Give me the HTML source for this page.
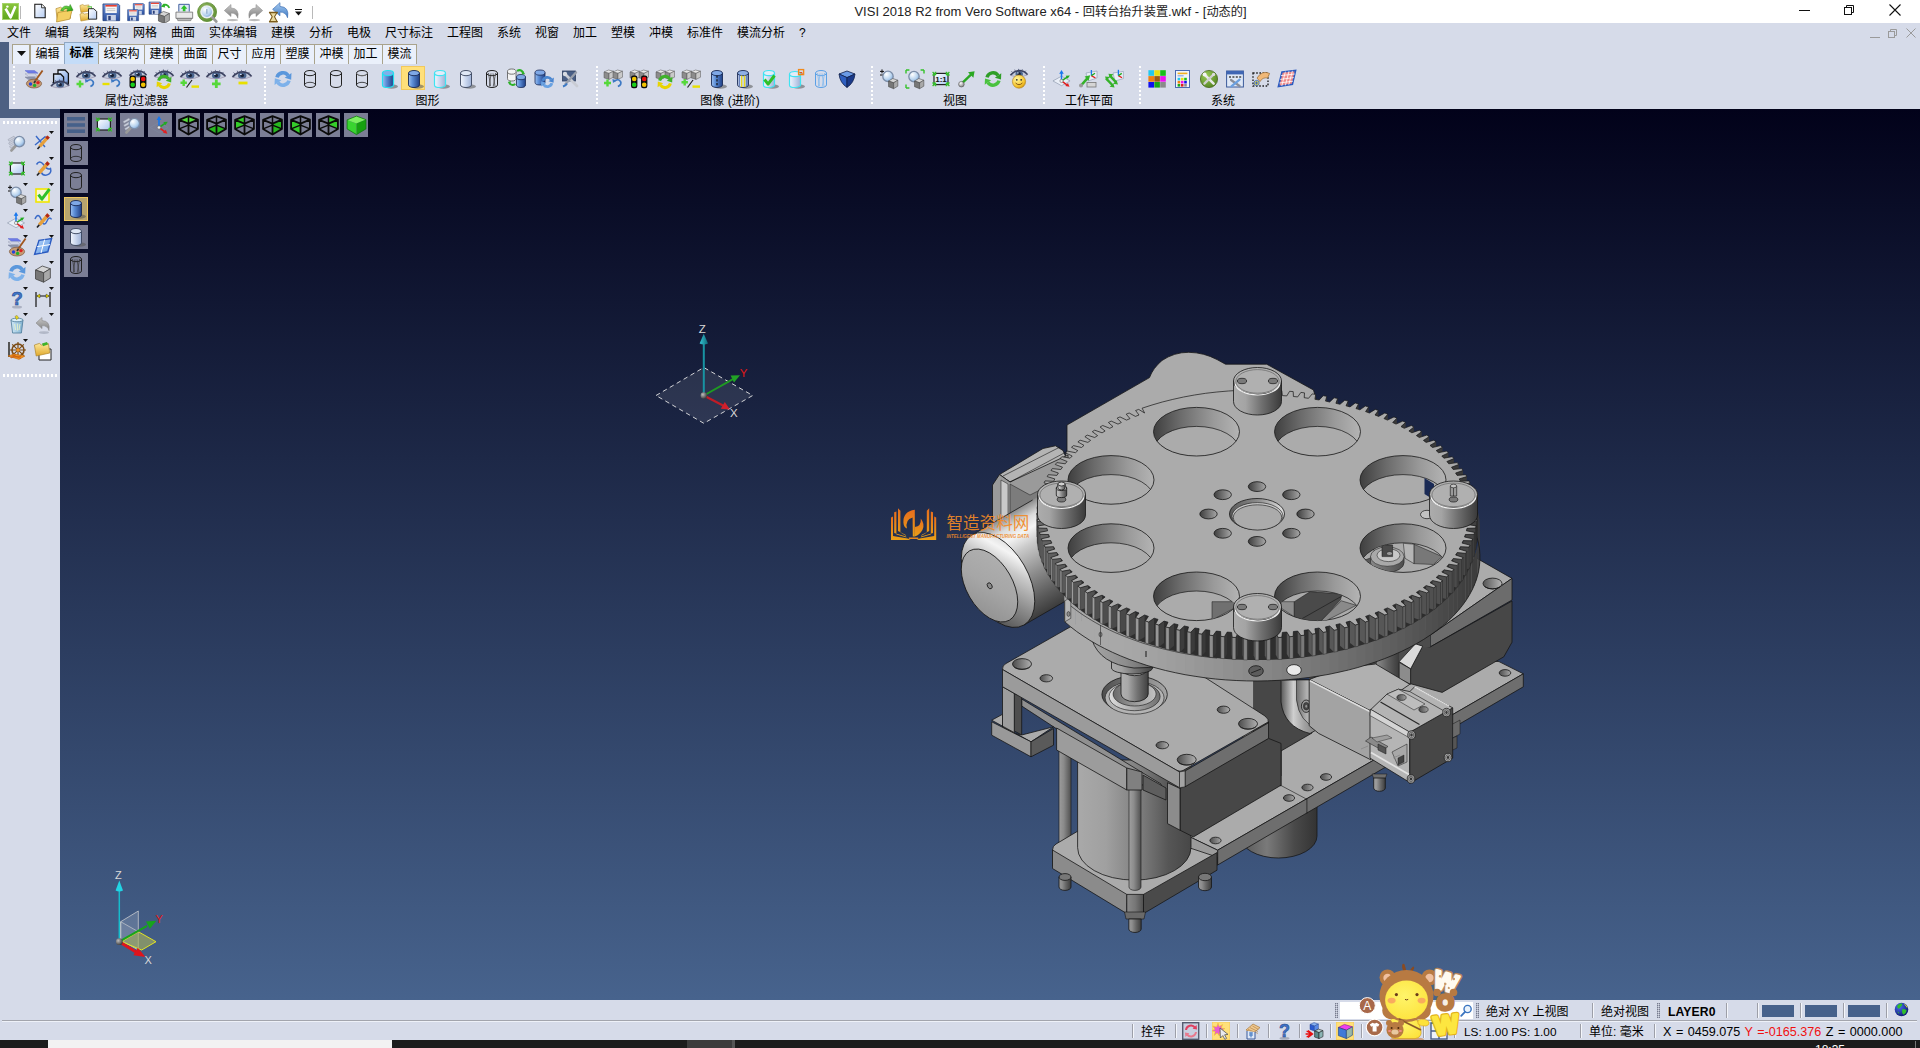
<!DOCTYPE html>
<html lang="zh-CN">
<head>
<meta charset="utf-8">
<title>VISI 2018 R2 from Vero Software x64 - 回转台抬升装置.wkf - [动态的]</title>
<style>
*{box-sizing:border-box;margin:0;padding:0}
html,body{width:1920px;height:1048px;overflow:hidden;background:#d6dbe9}
body{position:relative;font-family:"Liberation Sans","Noto Sans CJK SC",sans-serif;font-size:12px;color:#000;line-height:1}
.abs{position:absolute}
#titlebar{position:absolute;left:0;top:0;width:1920px;height:23px;background:#fff}
#title{position:absolute;left:0;top:0;width:2101px;text-align:center;font-size:13px;line-height:23px;color:#222;white-space:nowrap}
#title .cj{font-size:12.2px}
#menubar{position:absolute;left:0;top:23px;width:1920px;height:20px;background:#d6dbe9;white-space:nowrap}
#menubar span{position:absolute;top:3px;font-size:12px;line-height:14px}
#lstrip{position:absolute;left:0;top:42px;width:9px;height:76px;background:#4d6082}
#lstrip2{position:absolute;left:0;top:109px;width:60px;height:9px;background:#4d6082}
#tabs{position:absolute;left:12px;top:45px;height:19px;white-space:nowrap}
.tab{position:absolute;top:44px;height:20px;background:#eaf0fb;border:1px solid #a9a38c;border-bottom:none;font-size:12px;line-height:19px;text-align:center}
.tab.sel{top:42px;height:22px;background:#c4dcf8;border-color:#8fa7c4;line-height:21px;font-weight:700}
#toolbar{position:absolute;left:9px;top:64px;width:1911px;height:45px;background:#d6dbe9}
.grip{position:absolute;top:66px;width:2px;height:40px;background-image:repeating-linear-gradient(to bottom,#fff 0,#fff 2px,transparent 2px,transparent 4px)}
.glabel{position:absolute;top:94px;font-size:12px;line-height:14px;white-space:nowrap;transform:translateX(-50%)}
.ico{position:absolute;overflow:visible}
#sidebar{position:absolute;left:0;top:118px;width:60px;height:882px;background:#d6dbe9}
#viewport{position:absolute;left:60px;top:109px;width:1860px;height:891px;background:linear-gradient(to bottom,#02021a 0%,#47638d 100%);overflow:hidden}
.vbtn{position:absolute;width:24px;height:24px;background:#7b7e95}
.vbtn.sel{background:#b7a46e;border:1px solid #f0c860}
#status{position:absolute;left:0;top:1000px;width:1920px;height:40px;background:#d6dbe9}
#taskbar{position:absolute;left:0;top:1040px;width:1920px;height:8px;background:#1c1c1c}
.st{font-size:12px;line-height:14px;white-space:nowrap}
svg{display:block}
</style>
</head>
<body>
<svg width="0" height="0" style="position:absolute"><defs><linearGradient id="l1" x1="0" y1="0" x2="1" y2="0"><stop offset="0" stop-color="#9cc0f0"/><stop offset="0.35" stop-color="#5d8fd8"/><stop offset="1" stop-color="#1f3f86"/></linearGradient><linearGradient id="l2" x1="0" y1="0" x2="1" y2="0"><stop offset="0" stop-color="#f2f6fd"/><stop offset="0.5" stop-color="#c9d6ee"/><stop offset="1" stop-color="#9fb2d6"/></linearGradient><linearGradient id="l3" x1="0" y1="0" x2="1" y2="1"><stop offset="0" stop-color="#8df05a"/><stop offset="1" stop-color="#1f9a12"/></linearGradient><linearGradient id="l4" x1="0" y1="0" x2="0" y2="1"><stop offset="0" stop-color="#5fe23a"/><stop offset="1" stop-color="#0f7a0a"/></linearGradient><linearGradient id="l5" x1="0" y1="0" x2="0" y2="1"><stop offset="0" stop-color="#a9cdf2"/><stop offset="1" stop-color="#3d79c4"/></linearGradient><linearGradient id="l6" x1="0" y1="0" x2="0" y2="1"><stop offset="0" stop-color="#c9c9c9"/><stop offset="1" stop-color="#7d7d7d"/></linearGradient><radialGradient id="r7" cx="0.35" cy="0.3" r="0.8"><stop offset="0" stop-color="#ffffff"/><stop offset="0.6" stop-color="#b9d4ef"/><stop offset="1" stop-color="#6f9bd0"/></radialGradient><linearGradient id="l8" x1="0" y1="0" x2="0" y2="1"><stop offset="0" stop-color="#6f94d6"/><stop offset="1" stop-color="#2b4f9e"/></linearGradient><linearGradient id="l9" x1="0" y1="0" x2="0" y2="1"><stop offset="0" stop-color="#fde79a"/><stop offset="1" stop-color="#e0a92c"/></linearGradient><linearGradient id="l10" x1="0" y1="0" x2="1" y2="1"><stop offset="0" stop-color="#ffffff"/><stop offset="1" stop-color="#b6cdf3"/></linearGradient><linearGradient id="l11" x1="0" y1="0" x2="1" y2="1"><stop offset="0" stop-color="#e8f0fc"/><stop offset="1" stop-color="#6f9ae0"/></linearGradient><linearGradient id="l12" x1="0" y1="0" x2="1" y2="1"><stop offset="0" stop-color="#e8e8e8"/><stop offset="1" stop-color="#8f8f8f"/></linearGradient><radialGradient id="r13" cx="0.35" cy="0.3" r="0.8"><stop offset="0" stop-color="#fff6a0"/><stop offset="0.7" stop-color="#f6c52c"/><stop offset="1" stop-color="#c98a10"/></radialGradient><linearGradient id="l14" x1="0" y1="0" x2="1" y2="1"><stop offset="0" stop-color="#ffffff"/><stop offset="1" stop-color="#a9c6ef"/></linearGradient><radialGradient id="r15" cx="0.35" cy="0.3" r="0.8"><stop offset="0" stop-color="#fff"/><stop offset="1" stop-color="#777"/></radialGradient><radialGradient id="r16" cx="0.35" cy="0.3" r="0.8"><stop offset="0" stop-color="#9acb58"/><stop offset="1" stop-color="#4f7f1e"/></radialGradient><linearGradient id="l17" x1="0" y1="0" x2="1" y2="1"><stop offset="0" stop-color="#b8d6fa"/><stop offset="1" stop-color="#5a96e4"/></linearGradient><linearGradient id="l18" x1="0" y1="0" x2="1" y2="0"><stop offset="0" stop-color="#cfe8f6"/><stop offset="1" stop-color="#7fb0d0"/></linearGradient><radialGradient id="r19" cx="0.35" cy="0.3" r="0.8"><stop offset="0" stop-color="#8fb45e"/><stop offset="1" stop-color="#5f8f34"/></radialGradient><linearGradient id="l20" x1="0" y1="0" x2="0" y2="1"><stop offset="0" stop-color="#8cc63f"/><stop offset="1" stop-color="#5ea61a"/></linearGradient></defs></svg>
<div id="titlebar">
<svg class="abs" style="left:2px;top:3px" width="17" height="17" viewBox="0 0 17 17"><rect width="17" height="17" fill="url(#l20)"/><rect x=".5" y=".5" width="16" height="16" fill="none" stroke="#a6d46a" stroke-width="1"/><path d="M3.6 5.6 L8.6 14.4 L13.4 3.2" fill="none" stroke="#fff" stroke-width="2.6" stroke-linejoin="round"/><circle cx="5.4" cy="3.6" r="1.2" fill="#fff"/></svg>
<div class="abs" style="left:20px;top:6px;width:1px;height:13px;background:#b9b9b9"></div>
<svg class="ico" style="left:32px;top:3px" width="16" height="16" viewBox="0 0 20 20"><path d="M3.5 1.5 h8.5 l4.5 4.5 v12.5 h-13z" fill="url(#l10)" stroke="#111" stroke-width="1.3"/><path d="M12 1.5 v4.5 h4.5" fill="#fff" stroke="#111" stroke-width="1"/></svg>
<svg class="ico" style="left:55px;top:3px" width="19" height="19" viewBox="0 0 20 20"><path d="M1 6 l5 -1.6 l2 1.6 l7 -1 l1.4 11 l-14 3z" fill="url(#l9)" stroke="#b0862a" stroke-width=".7"/><path d="M3 10 l15 -2.6 l-2.4 9.6 l-14 3z" fill="#f4cf62" stroke="#b0862a" stroke-width=".7"/><path d="M6 8 q3 -7 9 -4 l1 -2.4 l3 6 l-6.4 1 l1 -2.4 q-3.4 -1.6 -5 2z" fill="url(#l3)" stroke="#1a7a14" stroke-width=".5"/></svg>
<svg class="ico" style="left:79px;top:3px" width="19" height="19" viewBox="0 0 20 20"><path d="M1 2.6 l3 -1 l1.4 1 l5 -.6 l.6 6.4 l-9 1.6z" fill="url(#l9)" stroke="#b0862a" stroke-width=".6"/><path d="M1 11.6 l3 -1 l1.4 1 l5 -.6 l.6 6.4 l-9 1.6z" fill="url(#l9)" stroke="#b0862a" stroke-width=".6"/><path d="M9 4 h4 v12 h-4" fill="none" stroke="#5ec84a" stroke-width="1.2"/><path d="M10 6 h5.6 l3 3 v8 h-8.6z" fill="url(#l10)" stroke="#222" stroke-width="1"/></svg>
<svg class="ico" style="left:102px;top:3px" width="19" height="19" viewBox="0 0 20 20"><g transform="translate(1 1) scale(1)"><path d="M0 0 h16 l1.6 1.6 v16 h-17.6z" fill="url(#l8)" stroke="#1f3a7a" stroke-width=".8"/><rect x="2.6" y="1" width="12" height="8.6" fill="#f6f6f6"/><rect x="2.6" y="1" width="12" height="1.8" fill="#e84030"/><path d="M4 5 h9 M4 7 h9" stroke="#b0b0b0" stroke-width=".7"/><rect x="4" y="11.6" width="9.6" height="6" fill="#c9d2e6"/><rect x="5.6" y="12.6" width="2.6" height="4.4" fill="#2b3f7a"/></g></svg>
<svg class="ico" style="left:127px;top:3px" width="19" height="19" viewBox="0 0 20 20"><g transform="translate(6.6 0.6) scale(0.66)"><path d="M0 0 h16 l1.6 1.6 v16 h-17.6z" fill="url(#l8)" stroke="#1f3a7a" stroke-width=".8"/><rect x="2.6" y="1" width="12" height="8.6" fill="#f6f6f6"/><rect x="2.6" y="1" width="12" height="1.8" fill="#e84030"/><path d="M4 5 h9 M4 7 h9" stroke="#b0b0b0" stroke-width=".7"/><rect x="4" y="11.6" width="9.6" height="6" fill="#c9d2e6"/><rect x="5.6" y="12.6" width="2.6" height="4.4" fill="#2b3f7a"/></g><g transform="translate(0.6 7) scale(0.66)"><path d="M0 0 h16 l1.6 1.6 v16 h-17.6z" fill="url(#l8)" stroke="#1f3a7a" stroke-width=".8"/><rect x="2.6" y="1" width="12" height="8.6" fill="#f6f6f6"/><rect x="2.6" y="1" width="12" height="1.8" fill="#e84030"/><path d="M4 5 h9 M4 7 h9" stroke="#b0b0b0" stroke-width=".7"/><rect x="4" y="11.6" width="9.6" height="6" fill="#c9d2e6"/><rect x="5.6" y="12.6" width="2.6" height="4.4" fill="#2b3f7a"/></g></svg>
<svg class="ico" style="left:149px;top:2px" width="21" height="21" viewBox="0 0 20 20"><g transform="translate(0 0) scale(0.66)"><path d="M0 0 h16 l1.6 1.6 v16 h-17.6z" fill="url(#l8)" stroke="#1f3a7a" stroke-width=".8"/><rect x="2.6" y="1" width="12" height="8.6" fill="#f6f6f6"/><rect x="2.6" y="1" width="12" height="1.8" fill="#e84030"/><path d="M4 5 h9 M4 7 h9" stroke="#b0b0b0" stroke-width=".7"/><rect x="4" y="11.6" width="9.6" height="6" fill="#c9d2e6"/><rect x="5.6" y="12.6" width="2.6" height="4.4" fill="#2b3f7a"/></g><path d="M13 3.6 q4 -2.6 6.4 2" fill="none" stroke="#2fb22a" stroke-width="1.8"/><path d="M11.4 4.6 l3 -3.4 l1 4z" fill="#2fb22a"/><g transform="translate(9 9) scale(0.95)"><path d="M0 3 l5 -3 l6 2 l-5 3z" fill="#d5d5d5" stroke="#444" stroke-width=".6"/><path d="M0 3 l6 2 v7 l-6 -2.4z" fill="#777" stroke="#444" stroke-width=".6"/><path d="M6 5 l5 -3 v7 l-5 3z" fill="#a9a9a9" stroke="#444" stroke-width=".6"/></g></svg>
<svg class="ico" style="left:175px;top:3px" width="19" height="19" viewBox="0 0 20 20"><path d="M4 9 v-7.6 h11 v7.6" fill="#dfe8f7" stroke="#3a5a9a" stroke-width="1"/><path d="M9.6 2 l3.4 4 h-2 v2.6 h-2.8 v-2.6 h-2z" fill="#2fc028"/><path d="M1 9.6 h17.6 v6.6 h-17.6z" fill="#e9e9e9" stroke="#666" stroke-width=".8"/><path d="M2 16.2 h15.6 l-1 2.4 h-13.6z" fill="#b9b9b9" stroke="#666" stroke-width=".6"/></svg>
<svg class="ico" style="left:197px;top:2px" width="21" height="21" viewBox="0 0 20 20"><circle cx="9.6" cy="9.6" r="9" fill="url(#r19)" stroke="#5a8a2e" stroke-width=".8"/><path d="M13 13 l5.4 5.6" stroke="#9a9a9a" stroke-width="2.6" stroke-linecap="round"/><circle cx="9.4" cy="9.4" r="5.6" fill="url(#r7)" stroke="#e9eef4" stroke-width="1.5"/><path d="M9.4 6.6 v4.6" stroke="#7f9fc6" stroke-width="1"/></svg>
<svg class="ico" style="left:223px;top:3px" width="19" height="19" viewBox="0 0 20 20"><path d="M1.4 8 L8.4 1.6 V5.2 Q17.6 5.6 15.6 16 Q14 10.6 8.4 10.6 V14.2z" fill="url(#l6)" stroke="#8e8e8e" stroke-width=".6"/><ellipse cx="10" cy="18" rx="6" ry="1.2" fill="#bbb"/></svg>
<svg class="ico" style="left:245px;top:3px" width="19" height="19" viewBox="0 0 20 20"><path d="M18.6 8 L11.6 1.6 V5.2 Q2.4 5.6 4.4 16 Q6 10.6 11.6 10.6 V14.2z" fill="url(#l6)" stroke="#8e8e8e" stroke-width=".6"/><ellipse cx="10" cy="18" rx="6" ry="1.2" fill="#bbb"/></svg>
<svg class="ico" style="left:268px;top:2px" width="21" height="21" viewBox="0 0 20 20"><path d="M4.4 7 L11.4 .6 V4.2 Q20.6 4.6 18.6 15 Q17 9.6 11.4 9.6 V13.2z" fill="url(#l5)" stroke="#3a6ab0" stroke-width=".6"/><path d="M1.6 10 h7 l-2.4 4 l2.4 4.6 h-7 l2.4 -4.6z" fill="#e8d9a0" stroke="#7a5a1a" stroke-width="1"/><path d="M1 10 h8.2 M1 18.8 h8.2" stroke="#7a5a1a" stroke-width="1.4"/></svg>
<svg class="abs" style="left:294px;top:9px" width="9" height="7" viewBox="0 0 9 7"><path d="M1 0.5 h7" stroke="#111" stroke-width="1"/><path d="M1 2.5 h7 l-3.5 4z" fill="#111"/></svg>
<div class="abs" style="left:312px;top:6px;width:1px;height:13px;background:#b9b9b9"></div>
<div id="title"><span class="la">VISI 2018 R2 from Vero Software x64 - </span><span class="cj">回转台抬升装置</span><span class="la">.wkf - [</span><span class="cj">动态的</span><span class="la">]</span></div>
<svg class="abs" style="left:1790px;top:0" width="130" height="23" viewBox="1790 0 130 23"><path d="M1799 10.5 h11" stroke="#111" stroke-width="1"/><rect x="1844.5" y="7.5" width="7" height="7" fill="#fff" stroke="#111" stroke-width="1"/><path d="M1846.5 7.5 v-2 h7 v7 h-2" fill="none" stroke="#111" stroke-width="1"/><path d="M1889.5 4.5 l11 11 M1900.5 4.500 l-11 11" stroke="#111" stroke-width="1.1"/></svg>
</div>
<div id="menubar">
<span style="left:7px">文件</span><span style="left:45px">编辑</span><span style="left:83px">线架构</span><span style="left:133px">网格</span><span style="left:171px">曲面</span><span style="left:209px">实体编辑</span><span style="left:271px">建模</span><span style="left:309px">分析</span><span style="left:347px">电极</span><span style="left:385px">尺寸标注</span><span style="left:447px">工程图</span><span style="left:497px">系统</span><span style="left:535px">视窗</span><span style="left:573px">加工</span><span style="left:611px">塑模</span><span style="left:649px">冲模</span><span style="left:687px">标准件</span><span style="left:737px">模流分析</span><span style="left:799px">?</span>
<svg id="mdi" class="abs" style="left:1860px;top:3px" width="60" height="14" viewBox="1860 26 60 14"><path d="M1870 37.500 h10" stroke="#9a9a9a" stroke-width="1"/><rect x="1888.5" y="31.500" width="6" height="6" fill="none" stroke="#9a9a9a" stroke-width="1"/><path d="M1890.5 31.500 v-2 h6 v6 h-2" fill="none" stroke="#9a9a9a" stroke-width="1"/><path d="M1906.500 28.500 l9 9 M1915.500 28.500 l-9 9" stroke="#9a9a9a" stroke-width="1"/></svg>
</div>
<div id="lstrip"></div><div id="lstrip2"></div>
<div id="toolbar"></div>
<div class="tab" style="left:12px;width:18px"><svg style="margin:6px 0 0 4px" width="9" height="5" viewBox="0 0 9 5"><path d="M0 0 h9 l-4.500 5z" fill="#111"/></svg></div>
<div class="tab" style="left:30px;width:35px">编辑</div>
<div class="tab sel" style="left:64px;width:35px">标准</div>
<div class="tab" style="left:98px;width:47px">线架构</div>
<div class="tab" style="left:144px;width:35px">建模</div>
<div class="tab" style="left:178px;width:35px">曲面</div>
<div class="tab" style="left:212px;width:35px">尺寸</div>
<div class="tab" style="left:246px;width:35px">应用</div>
<div class="tab" style="left:280px;width:35px">塑膜</div>
<div class="tab" style="left:314px;width:35px">冲模</div>
<div class="tab" style="left:348px;width:35px">加工</div>
<div class="tab" style="left:382px;width:35px">模流</div>
<div class="grip" style="left:13px"></div>
<div class="grip" style="left:264px"></div>
<div class="grip" style="left:596px"></div>
<div class="grip" style="left:871px"></div>
<div class="grip" style="left:1043px"></div>
<div class="grip" style="left:1139px"></div>
<svg class="ico" style="left:23.5px;top:69px" width="20" height="20" viewBox="0 0 20 20"><path d="M1 1.600 h9.500 l3.500 2.600 h-9.500z" fill="#6f7de8" stroke="#4a58c8" stroke-width=".4"/><path d="M1 4.800 h9.500 l3.500 2.600 h-9.500z" fill="#d5d9ea" stroke="#8a90a8" stroke-width=".4"/><path d="M1 8 h9.500 l3.500 2.600 h-9.500z" fill="#9098b0" stroke="#6a7088" stroke-width=".4"/><ellipse cx="10" cy="14.6" rx="7.6" ry="4.4" fill="#c79a74" stroke="#7a543a" stroke-width=".7"/><circle cx="6.5" cy="15" r="1.7" fill="#2244dd"/><circle cx="10.6" cy="16.4" r="1.7" fill="#22b02a"/><circle cx="14" cy="13.6" r="1.7" fill="#dd2020"/><path d="M18.6 1.4 L11.5 11.6" stroke="#a0561e" stroke-width="1.8"/><path d="M11.5 11.6 l-1.4 2.4" stroke="#333" stroke-width="1.8"/></svg>
<svg class="ico" style="left:49.5px;top:69px" width="20" height="20" viewBox="0 0 20 20"><path d="M8 1 h7 l3.400 3.400 v10 h-10.400z" fill="url(#l11)" stroke="#111" stroke-width="1.300"/><path d="M3.600 5 h7 l3 3 v8 h-10z" fill="url(#l11)" stroke="#111" stroke-width="1.300"/><g transform="translate(0.5 10) scale(0.95)"><path d="M0.5 7.6 Q5 2.2 11 2.4 Q16.5 2.8 19.5 7 Q15 9.4 10 9.4 Q4.5 9.4 0.5 7.6Z" fill="#c3cbdc"/><ellipse cx="10.2" cy="6" rx="4.2" ry="3.3" fill="#4a668f"/><ellipse cx="10.2" cy="6" rx="1.9" ry="1.7" fill="#1a2238"/><ellipse cx="8.8" cy="4.9" rx="1" ry=".7" fill="#cfdbee"/><path d="M0.5 7.6 Q5 2.2 11 2.4 Q16.5 2.8 19.5 7" fill="none" stroke="#3b4260" stroke-width="1.8"/><path d="M3 4.6 L1.6 3 M6 3 L5.2 1.2 M9.5 2.2 L9.4 .4 M13 2.4 L13.8 .7 M16.2 3.8 L17.6 2.4" stroke="#4a5272" stroke-width=".8"/><path d="M0.5 7.6 Q10 11.4 19.5 7" fill="none" stroke="#9a8fa8" stroke-width=".7"/></g></svg>
<svg class="ico" style="left:75.5px;top:69px" width="20" height="20" viewBox="0 0 20 20"><g transform="translate(0 0.5) scale(1)"><path d="M0.5 7.6 Q5 2.2 11 2.4 Q16.5 2.8 19.5 7 Q15 9.4 10 9.4 Q4.5 9.4 0.5 7.6Z" fill="#c3cbdc"/><ellipse cx="10.2" cy="6" rx="4.2" ry="3.3" fill="#4a668f"/><ellipse cx="10.2" cy="6" rx="1.9" ry="1.7" fill="#1a2238"/><ellipse cx="8.8" cy="4.9" rx="1" ry=".7" fill="#cfdbee"/><path d="M0.5 7.6 Q5 2.2 11 2.4 Q16.5 2.8 19.5 7" fill="none" stroke="#3b4260" stroke-width="1.8"/><path d="M3 4.6 L1.6 3 M6 3 L5.2 1.2 M9.5 2.2 L9.4 .4 M13 2.4 L13.8 .7 M16.2 3.8 L17.6 2.4" stroke="#4a5272" stroke-width=".8"/><path d="M0.5 7.6 Q10 11.4 19.5 7" fill="none" stroke="#9a8fa8" stroke-width=".7"/></g><path d="M0.5 15 h7 M4 11.5 v7" stroke="#55d83a" stroke-width="2.4"/><path d="M10.5 12.5 q4 -3.5 6.5 0 q1.6 3 -2.6 5" fill="none" stroke="#3d79c4" stroke-width="1.7"/><path d="M9.5 14 l-.6 -4 l4 1.2z" fill="#3d79c4"/></svg>
<svg class="ico" style="left:101.5px;top:69px" width="20" height="20" viewBox="0 0 20 20"><g transform="translate(0 0.5) scale(1)"><path d="M0.5 7.6 Q5 2.2 11 2.4 Q16.5 2.8 19.5 7 Q15 9.4 10 9.4 Q4.5 9.4 0.5 7.6Z" fill="#c3cbdc"/><ellipse cx="10.2" cy="6" rx="4.2" ry="3.3" fill="#4a668f"/><ellipse cx="10.2" cy="6" rx="1.9" ry="1.7" fill="#1a2238"/><ellipse cx="8.8" cy="4.9" rx="1" ry=".7" fill="#cfdbee"/><path d="M0.5 7.6 Q5 2.2 11 2.4 Q16.5 2.8 19.5 7" fill="none" stroke="#3b4260" stroke-width="1.8"/><path d="M3 4.6 L1.6 3 M6 3 L5.2 1.2 M9.5 2.2 L9.4 .4 M13 2.4 L13.8 .7 M16.2 3.8 L17.6 2.4" stroke="#4a5272" stroke-width=".8"/><path d="M0.5 7.6 Q10 11.4 19.5 7" fill="none" stroke="#9a8fa8" stroke-width=".7"/></g><path d="M0.5 15 h7" stroke="#e8e000" stroke-width="2.4"/><path d="M10.5 12.5 q4 -3.5 6.5 0 q1.6 3 -2.6 5" fill="none" stroke="#3d79c4" stroke-width="1.7"/><path d="M9.5 14 l-.6 -4 l4 1.2z" fill="#3d79c4"/></svg>
<svg class="ico" style="left:127.5px;top:69px" width="20" height="20" viewBox="0 0 20 20"><g transform="translate(1 0) scale(0.9)"><path d="M0.5 7.6 Q5 2.2 11 2.4 Q16.5 2.8 19.5 7 Q15 9.4 10 9.4 Q4.5 9.4 0.5 7.6Z" fill="#c3cbdc"/><ellipse cx="10.2" cy="6" rx="4.2" ry="3.3" fill="#4a668f"/><ellipse cx="10.2" cy="6" rx="1.9" ry="1.7" fill="#1a2238"/><ellipse cx="8.8" cy="4.9" rx="1" ry=".7" fill="#cfdbee"/><path d="M0.5 7.6 Q5 2.2 11 2.4 Q16.5 2.8 19.5 7" fill="none" stroke="#3b4260" stroke-width="1.8"/><path d="M3 4.6 L1.6 3 M6 3 L5.2 1.2 M9.5 2.2 L9.4 .4 M13 2.4 L13.8 .7 M16.2 3.8 L17.6 2.4" stroke="#4a5272" stroke-width=".8"/><path d="M0.5 7.6 Q10 11.4 19.5 7" fill="none" stroke="#9a8fa8" stroke-width=".7"/></g><rect x="1.5" y="6.6" width="6.4" height="12.6" rx="2.2" fill="#0c0c0c"/><circle cx="4.7" cy="10" r="2.3" fill="#f2c400"/><circle cx="4.7" cy="15.8" r="2.3" fill="#18d018"/><rect x="12" y="6.6" width="6.4" height="12.6" rx="2.2" fill="#0c0c0c"/><circle cx="15.2" cy="10" r="2.3" fill="#ee1010"/><circle cx="15.2" cy="15.8" r="2.3" fill="#f2c400"/></svg>
<svg class="ico" style="left:153.5px;top:69px" width="20" height="20" viewBox="0 0 20 20"><g transform="translate(0 0) scale(1)"><path d="M0.5 7.6 Q5 2.2 11 2.4 Q16.5 2.8 19.5 7 Q15 9.4 10 9.4 Q4.5 9.4 0.5 7.6Z" fill="#c3cbdc"/><ellipse cx="10.2" cy="6" rx="4.2" ry="3.3" fill="#4a668f"/><ellipse cx="10.2" cy="6" rx="1.9" ry="1.7" fill="#1a2238"/><ellipse cx="8.8" cy="4.9" rx="1" ry=".7" fill="#cfdbee"/><path d="M0.5 7.6 Q5 2.2 11 2.4 Q16.5 2.8 19.5 7" fill="none" stroke="#3b4260" stroke-width="1.8"/><path d="M3 4.6 L1.6 3 M6 3 L5.2 1.2 M9.5 2.2 L9.4 .4 M13 2.4 L13.8 .7 M16.2 3.8 L17.6 2.4" stroke="#4a5272" stroke-width=".8"/><path d="M0.5 7.6 Q10 11.4 19.5 7" fill="none" stroke="#9a8fa8" stroke-width=".7"/></g><path d="M4.59 11.55 A5.6 5.6 0 0 1 14.59 9.79" fill="none" stroke="#3fb22a" stroke-width="3"/><path d="M17.17 13.47 L17.41 7.81 L11.76 11.77 Z" fill="#3fb22a"/><path d="M15.41 14.45 A5.6 5.6 0 0 1 5.41 16.21" fill="none" stroke="#e8d400" stroke-width="3"/><path d="M2.83 12.53 L2.59 18.19 L8.24 14.23 Z" fill="#e8d400"/></svg>
<svg class="ico" style="left:179.5px;top:69px" width="20" height="20" viewBox="0 0 20 20"><g transform="translate(0 0.5) scale(1)"><path d="M0.5 7.6 Q5 2.2 11 2.4 Q16.5 2.8 19.5 7 Q15 9.4 10 9.4 Q4.5 9.4 0.5 7.6Z" fill="#c3cbdc"/><ellipse cx="10.2" cy="6" rx="4.2" ry="3.3" fill="#4a668f"/><ellipse cx="10.2" cy="6" rx="1.9" ry="1.7" fill="#1a2238"/><ellipse cx="8.8" cy="4.9" rx="1" ry=".7" fill="#cfdbee"/><path d="M0.5 7.6 Q5 2.2 11 2.4 Q16.5 2.8 19.5 7" fill="none" stroke="#3b4260" stroke-width="1.8"/><path d="M3 4.6 L1.6 3 M6 3 L5.2 1.2 M9.5 2.2 L9.4 .4 M13 2.4 L13.8 .7 M16.2 3.8 L17.6 2.4" stroke="#4a5272" stroke-width=".8"/><path d="M0.5 7.6 Q10 11.4 19.5 7" fill="none" stroke="#9a8fa8" stroke-width=".7"/></g><path d="M0.5 13.7 h6.4 M3.7 10.5 v6.4" stroke="#55d83a" stroke-width="2.4"/><path d="M6.5 18.5 L12 11" stroke="#222" stroke-width="1.2"/><path d="M11.5 17.6 h7.5" stroke="#e8e000" stroke-width="2.4"/></svg>
<svg class="ico" style="left:205.5px;top:69px" width="20" height="20" viewBox="0 0 20 20"><g transform="translate(0 0.5) scale(1)"><path d="M0.5 7.6 Q5 2.2 11 2.4 Q16.5 2.8 19.5 7 Q15 9.4 10 9.4 Q4.5 9.4 0.5 7.6Z" fill="#c3cbdc"/><ellipse cx="10.2" cy="6" rx="4.2" ry="3.3" fill="#4a668f"/><ellipse cx="10.2" cy="6" rx="1.9" ry="1.7" fill="#1a2238"/><ellipse cx="8.8" cy="4.9" rx="1" ry=".7" fill="#cfdbee"/><path d="M0.5 7.6 Q5 2.2 11 2.4 Q16.5 2.8 19.5 7" fill="none" stroke="#3b4260" stroke-width="1.8"/><path d="M3 4.6 L1.6 3 M6 3 L5.2 1.2 M9.5 2.2 L9.4 .4 M13 2.4 L13.8 .7 M16.2 3.8 L17.6 2.4" stroke="#4a5272" stroke-width=".8"/><path d="M0.5 7.6 Q10 11.4 19.5 7" fill="none" stroke="#9a8fa8" stroke-width=".7"/></g><path d="M6 14.8 h8.6 M10.3 10.5 v8.6" stroke="#55d83a" stroke-width="2.8"/></svg>
<svg class="ico" style="left:231.5px;top:69px" width="20" height="20" viewBox="0 0 20 20"><g transform="translate(0 0.5) scale(1)"><path d="M0.5 7.6 Q5 2.2 11 2.4 Q16.5 2.8 19.5 7 Q15 9.4 10 9.4 Q4.5 9.4 0.5 7.6Z" fill="#c3cbdc"/><ellipse cx="10.2" cy="6" rx="4.2" ry="3.3" fill="#4a668f"/><ellipse cx="10.2" cy="6" rx="1.9" ry="1.7" fill="#1a2238"/><ellipse cx="8.8" cy="4.9" rx="1" ry=".7" fill="#cfdbee"/><path d="M0.5 7.6 Q5 2.2 11 2.4 Q16.5 2.8 19.5 7" fill="none" stroke="#3b4260" stroke-width="1.8"/><path d="M3 4.6 L1.6 3 M6 3 L5.2 1.2 M9.5 2.2 L9.4 .4 M13 2.4 L13.8 .7 M16.2 3.8 L17.6 2.4" stroke="#4a5272" stroke-width=".8"/><path d="M0.5 7.6 Q10 11.4 19.5 7" fill="none" stroke="#9a8fa8" stroke-width=".7"/></g><path d="M6.5 14 h9" stroke="#e8e000" stroke-width="2.8"/></svg>
<div class="glabel" style="left:136.500px">属性/过滤器</div>
<div class="abs" style="left:401px;top:66px;width:24px;height:24px;background:#ffe07a;border:1px solid #f2c95c"></div>
<svg class="ico" style="left:273px;top:69px" width="20" height="20" viewBox="0 0 20 20"><path d="M4.01 8.4 A6.2 6.2 0 0 1 15.08 6.44" fill="none" stroke="#5a97dc" stroke-width="3.6"/><path d="M18.18 10.87 L18.47 4.07 L11.69 8.82 Z" fill="#5a97dc"/><path d="M15.99 11.6 A6.2 6.2 0 0 1 4.92 13.56" fill="none" stroke="#7db1ea" stroke-width="3.6"/><path d="M1.82 9.13 L1.53 15.93 L8.31 11.18 Z" fill="#7db1ea"/></svg>
<svg class="ico" style="left:300px;top:69px" width="20" height="20" viewBox="0 0 20 20"><path d="M4.5 4.1 v11.8 a5.5 2.6 0 0 0 11 0 v-11.8" fill="none" stroke="#222" stroke-width="1"/><ellipse cx="10" cy="4.1" rx="5.5" ry="2.6" fill="none" stroke="#222" stroke-width="1"/><path d="M4.5 15.9 a5.5 2.6 0 0 1 11 0" fill="none" stroke="#222" stroke-width=".8"/></svg>
<svg class="ico" style="left:326px;top:69px" width="20" height="20" viewBox="0 0 20 20"><path d="M4.5 4.1 v11.8 a5.5 2.6 0 0 0 11 0 v-11.8" fill="none" stroke="#222" stroke-width="1"/><ellipse cx="10" cy="4.1" rx="5.5" ry="2.6" fill="none" stroke="#222" stroke-width="1"/></svg>
<svg class="ico" style="left:352px;top:69px" width="20" height="20" viewBox="0 0 20 20"><path d="M4.5 4.1 v11.8 a5.5 2.6 0 0 0 11 0 v-11.8" fill="none" stroke="#222" stroke-width="1"/><ellipse cx="10" cy="4.1" rx="5.5" ry="2.6" fill="none" stroke="#222" stroke-width="1"/><path d="M4.5 15.9 a5.5 2.6 0 0 1 11 0" fill="none" stroke="#222" stroke-width=".8"/><path d="M4.5 4.1 a5.5 2.6 0 0 0 11 0" fill="none" stroke="#999" stroke-width=".6"/></svg>
<svg class="ico" style="left:378px;top:69px" width="20" height="20" viewBox="0 0 20 20"><ellipse cx="13.5" cy="17.5" rx="6.5" ry="2.2" fill="#555" opacity=".55"/><path d="M4.5 4.1 v11.8 a5.5 2.6 0 0 0 11 0 v-11.8" fill="url(#l1)" stroke="#22e0f0" stroke-width="1.2"/><ellipse cx="10" cy="4.1" rx="5.5" ry="2.6" fill="#7fb0ea" stroke="#22e0f0" stroke-width="1.2"/></svg>
<svg class="ico" style="left:403.5px;top:69px" width="20" height="20" viewBox="0 0 20 20"><ellipse cx="13.5" cy="17.5" rx="6.5" ry="2.2" fill="#555" opacity=".55"/><path d="M4.5 4.1 v11.8 a5.5 2.6 0 0 0 11 0 v-11.8" fill="url(#l1)" stroke="#1a2a55" stroke-width="0.9"/><ellipse cx="10" cy="4.1" rx="5.5" ry="2.6" fill="#7fa8e6" stroke="#1a2a55" stroke-width="0.9"/></svg>
<svg class="ico" style="left:430px;top:69px" width="20" height="20" viewBox="0 0 20 20"><ellipse cx="13.5" cy="17.5" rx="6.5" ry="2.2" fill="#555" opacity=".55"/><path d="M4.5 4.1 v11.8 a5.5 2.6 0 0 0 11 0 v-11.8" fill="url(#l2)" stroke="#3ee4f2" stroke-width="1.2"/><ellipse cx="10" cy="4.1" rx="5.5" ry="2.6" fill="#e4ecf8" stroke="#3ee4f2" stroke-width="1.2"/></svg>
<svg class="ico" style="left:456px;top:69px" width="20" height="20" viewBox="0 0 20 20"><ellipse cx="13.5" cy="17.5" rx="6.5" ry="2.2" fill="#555" opacity=".55"/><path d="M4.5 4.1 v11.8 a5.5 2.6 0 0 0 11 0 v-11.8" fill="url(#l2)" stroke="#39445c" stroke-width="0.9"/><ellipse cx="10" cy="4.1" rx="5.5" ry="2.6" fill="#dfe8f6" stroke="#39445c" stroke-width="0.9"/></svg>
<svg class="ico" style="left:482px;top:69px" width="20" height="20" viewBox="0 0 20 20"><path d="M4.5 4.1 v11.8 a5.5 2.6 0 0 0 11 0 v-11.8" fill="none" stroke="#222" stroke-width="1"/><ellipse cx="10" cy="4.1" rx="5.5" ry="2.6" fill="none" stroke="#222" stroke-width="1"/><path d="M6.5 4 l2 13 M9 4.4 l-1.6 13 M11 4.4 l2 13 M13.6 4 l-2.4 13.6" stroke="#333" stroke-width=".7" fill="none"/></svg>
<svg class="ico" style="left:507px;top:69px" width="20" height="20" viewBox="0 0 20 20"><path d="M0.5 2.6 v6.8 a4.25 2.6 0 0 0 8.5 0 v-6.8" fill="#f4f4f4" stroke="#555" stroke-width="0.8"/><ellipse cx="4.75" cy="2.6" rx="4.25" ry="2.6" fill="#f4f4f4" stroke="#555" stroke-width="0.8"/><path d="M9.5 8.1 v7.8 a4.5 2.6 0 0 0 9 0 v-7.8" fill="url(#l1)" stroke="#1a2a55" stroke-width="0.8"/><ellipse cx="14" cy="8.1" rx="4.5" ry="2.6" fill="#7fa8e6" stroke="#1a2a55" stroke-width="0.8"/><path d="M10 1.8 q4 -2 6 2" fill="none" stroke="#2fb22a" stroke-width="2"/><path d="M14.4 5.6 l3.6 -.6 l-1.8 -3z" fill="#2fb22a"/><path d="M8.4 15 q-3.6 2.4 -6 -1" fill="none" stroke="#2fb22a" stroke-width="2"/><path d="M4 12 l-3.2 1 l2 3z" fill="#2fb22a"/></svg>
<svg class="ico" style="left:534px;top:69px" width="20" height="20" viewBox="0 0 20 20"><path d="M1 3.6 v9.8 a5 2.6 0 0 0 10 0 v-9.8" fill="url(#l1)" stroke="#1a2a55" stroke-width="0.8"/><ellipse cx="6" cy="3.6" rx="5" ry="2.6" fill="#7fa8e6" stroke="#1a2a55" stroke-width="0.8"/><path d="M8.96 11.81 A4.6 4.6 0 0 1 17.17 10.36" fill="none" stroke="#4a86d0" stroke-width="2.8"/><path d="M19.58 13.8 L19.81 8.51 L14.53 12.21 Z" fill="#4a86d0"/><path d="M17.84 14.19 A4.6 4.6 0 0 1 9.63 15.64" fill="none" stroke="#6aa2e2" stroke-width="2.8"/><path d="M7.22 12.2 L6.99 17.49 L12.27 13.79 Z" fill="#6aa2e2"/></svg>
<svg class="ico" style="left:559.5px;top:69px" width="20" height="20" viewBox="0 0 20 20"><rect x="2.5" y="2" width="13" height="10" fill="#4a5f86" stroke="#2f3f60" stroke-width=".8"/><path d="M5 5 L17 17" stroke="#c9ccd4" stroke-width="2.8" stroke-linecap="round"/><path d="M16 3.5 L5.5 15" stroke="#9aa0ac" stroke-width="2.4" stroke-linecap="round"/><circle cx="5" cy="5" r="2.2" fill="#d8dbe2"/><path d="M3 17.5 q3 -1 4 -3" stroke="#3d79c4" stroke-width="2" fill="none"/></svg>
<div class="glabel" style="left:427.500px">图形</div>
<svg class="ico" style="left:602.5px;top:69px" width="20" height="20" viewBox="0 0 20 20"><path d="M1 3 l4.5 -2 l5 1.2 l-4.5 2.2z" fill="#e8e8e8" stroke="#555" stroke-width=".5"/><path d="M1 3 l5 1.4 v6 l-5 -1.6z" fill="#8c8c8c" stroke="#555" stroke-width=".5"/><path d="M6 4.4 l4.5 -2.2 v6 l-4.5 2.2z" fill="#c9c9c9" stroke="#555" stroke-width=".5"/><path d="M10 3 l4.5 -2 l5 1.2 l-4.5 2.2z" fill="#e8e8e8" stroke="#555" stroke-width=".5"/><path d="M10 3 l5 1.4 v6 l-5 -1.6z" fill="#8c8c8c" stroke="#555" stroke-width=".5"/><path d="M15 4.4 l4.5 -2.2 v6 l-4.5 2.2z" fill="#c9c9c9" stroke="#555" stroke-width=".5"/><path d="M1 14 h7 M4.5 10.5 v7" stroke="#55d83a" stroke-width="2.4"/><path d="M11 12.5 q4 -3.5 6.5 0 q1.6 3 -2.6 5" fill="none" stroke="#3d79c4" stroke-width="1.7"/><path d="M10 14 l-.6 -4 l4 1.2z" fill="#3d79c4"/></svg>
<svg class="ico" style="left:628.5px;top:69px" width="20" height="20" viewBox="0 0 20 20"><path d="M1 3 l4.5 -2 l5 1.2 l-4.5 2.2z" fill="#e8e8e8" stroke="#555" stroke-width=".5"/><path d="M1 3 l5 1.4 v6 l-5 -1.6z" fill="#8c8c8c" stroke="#555" stroke-width=".5"/><path d="M6 4.4 l4.5 -2.2 v6 l-4.5 2.2z" fill="#c9c9c9" stroke="#555" stroke-width=".5"/><path d="M10 3 l4.5 -2 l5 1.2 l-4.5 2.2z" fill="#e8e8e8" stroke="#555" stroke-width=".5"/><path d="M10 3 l5 1.4 v6 l-5 -1.6z" fill="#8c8c8c" stroke="#555" stroke-width=".5"/><path d="M15 4.4 l4.5 -2.2 v6 l-4.5 2.2z" fill="#c9c9c9" stroke="#555" stroke-width=".5"/><rect x="2" y="6.6" width="6.4" height="12.6" rx="2.2" fill="#0c0c0c"/><circle cx="5.2" cy="10" r="2.3" fill="#f2c400"/><circle cx="5.2" cy="15.8" r="2.3" fill="#18d018"/><rect x="12" y="6.6" width="6.4" height="12.6" rx="2.2" fill="#0c0c0c"/><circle cx="15.2" cy="10" r="2.3" fill="#ee1010"/><circle cx="15.2" cy="15.8" r="2.3" fill="#f2c400"/></svg>
<svg class="ico" style="left:654.5px;top:69px" width="20" height="20" viewBox="0 0 20 20"><path d="M1 3 l4.5 -2 l5 1.2 l-4.5 2.2z" fill="#e8e8e8" stroke="#555" stroke-width=".5"/><path d="M1 3 l5 1.4 v6 l-5 -1.6z" fill="#8c8c8c" stroke="#555" stroke-width=".5"/><path d="M6 4.4 l4.5 -2.2 v6 l-4.5 2.2z" fill="#c9c9c9" stroke="#555" stroke-width=".5"/><path d="M10 3 l4.5 -2 l5 1.2 l-4.5 2.2z" fill="#e8e8e8" stroke="#555" stroke-width=".5"/><path d="M10 3 l5 1.4 v6 l-5 -1.6z" fill="#8c8c8c" stroke="#555" stroke-width=".5"/><path d="M15 4.4 l4.5 -2.2 v6 l-4.5 2.2z" fill="#c9c9c9" stroke="#555" stroke-width=".5"/><path d="M4.59 11.55 A5.6 5.6 0 0 1 14.59 9.79" fill="none" stroke="#3fb22a" stroke-width="3"/><path d="M17.17 13.47 L17.41 7.81 L11.76 11.77 Z" fill="#3fb22a"/><path d="M15.41 14.45 A5.6 5.6 0 0 1 5.41 16.21" fill="none" stroke="#e8d400" stroke-width="3"/><path d="M2.83 12.53 L2.59 18.19 L8.24 14.23 Z" fill="#e8d400"/></svg>
<svg class="ico" style="left:680.5px;top:69px" width="20" height="20" viewBox="0 0 20 20"><path d="M1 3 l4.5 -2 l5 1.2 l-4.5 2.2z" fill="#e8e8e8" stroke="#555" stroke-width=".5"/><path d="M1 3 l5 1.4 v6 l-5 -1.6z" fill="#8c8c8c" stroke="#555" stroke-width=".5"/><path d="M6 4.4 l4.5 -2.2 v6 l-4.5 2.2z" fill="#c9c9c9" stroke="#555" stroke-width=".5"/><path d="M10 3 l4.5 -2 l5 1.2 l-4.5 2.2z" fill="#e8e8e8" stroke="#555" stroke-width=".5"/><path d="M10 3 l5 1.4 v6 l-5 -1.6z" fill="#8c8c8c" stroke="#555" stroke-width=".5"/><path d="M15 4.4 l4.5 -2.2 v6 l-4.5 2.2z" fill="#c9c9c9" stroke="#555" stroke-width=".5"/><path d="M0.5 13.2 h6.4 M3.7 10 v6.4" stroke="#55d83a" stroke-width="2.4"/><path d="M6.5 18.5 L12 11" stroke="#222" stroke-width="1.2"/><path d="M11.5 17.6 h7.5" stroke="#e8e000" stroke-width="2.4"/></svg>
<svg class="ico" style="left:707px;top:69px" width="20" height="20" viewBox="0 0 20 20"><ellipse cx="13.5" cy="17.5" rx="6.5" ry="2.2" fill="#555" opacity=".55"/><path d="M4.5 4.1 v11.8 a5.5 2.6 0 0 0 11 0 v-11.8" fill="url(#l1)" stroke="#1a2a55" stroke-width="0.9"/><ellipse cx="10" cy="4.1" rx="5.5" ry="2.6" fill="#7fa8e6" stroke="#1a2a55" stroke-width="0.9"/><path d="M10 6.5 v11" stroke="#111" stroke-width="1.2" stroke-dasharray="2.2 1.6"/></svg>
<svg class="ico" style="left:733px;top:69px" width="20" height="20" viewBox="0 0 20 20"><ellipse cx="13.5" cy="17.5" rx="6.5" ry="2.2" fill="#555" opacity=".55"/><path d="M4.5 4.1 v11.8 a5.5 2.6 0 0 0 11 0 v-11.8" fill="url(#l2)" stroke="#1a2a55" stroke-width="0.9"/><ellipse cx="10" cy="4.1" rx="5.5" ry="2.6" fill="#8fb0e6" stroke="#1a2a55" stroke-width="0.9"/><path d="M8.6 6.4 v11.6 M11.6 6.4 v11.6" stroke="#e8d820" stroke-width="1.4"/><path d="M6.2 5.8 v11.2 M13.9 5.8 v11.2" stroke="#4a6ab0" stroke-width="1.2"/></svg>
<svg class="ico" style="left:759px;top:69px" width="20" height="20" viewBox="0 0 20 20"><ellipse cx="13.5" cy="17.5" rx="6.5" ry="2.2" fill="#555" opacity=".55"/><path d="M4.5 4.1 v11.8 a5.5 2.6 0 0 0 11 0 v-11.8" fill="url(#l2)" stroke="#3ee4f2" stroke-width="1.2"/><ellipse cx="10" cy="4.1" rx="5.5" ry="2.6" fill="#e4ecf8" stroke="#3ee4f2" stroke-width="1.2"/><path d="M5.5 10.5 l3.6 4.6 l6.4 -8.6" fill="none" stroke="#2fc028" stroke-width="3" stroke-linejoin="round"/></svg>
<svg class="ico" style="left:785px;top:69px" width="20" height="20" viewBox="0 0 20 20"><ellipse cx="13.5" cy="17.5" rx="6.5" ry="2.2" fill="#555" opacity=".55"/><path d="M4.5 5.1 v10.8 a5.5 2.6 0 0 0 11 0 v-10.8" fill="url(#l2)" stroke="#3ee4f2" stroke-width="1.2"/><ellipse cx="10" cy="5.1" rx="5.5" ry="2.6" fill="#e4ecf8" stroke="#3ee4f2" stroke-width="1.2"/><rect x="13.6" y=".6" width="5" height="5" fill="none" stroke="#f08a1c" stroke-width="1.4"/><path d="M14.6 3.6 h2.4 v1.8" stroke="#e04a10" stroke-width="1" fill="none"/></svg>
<svg class="ico" style="left:811px;top:69px" width="20" height="20" viewBox="0 0 20 20"><path d="M4.5 4.1 v11.8 a5.5 2.6 0 0 0 11 0 v-11.8" fill="none" stroke="#5aa0e6" stroke-width="1"/><ellipse cx="10" cy="4.1" rx="5.5" ry="2.6" fill="none" stroke="#5aa0e6" stroke-width="1"/><path d="M6.5 4 l2 13 M9 4.4 l-1.6 13 M11 4.4 l2 13 M13.6 4 l-2.4 13.6" stroke="#7ab6ee" stroke-width=".7" fill="none"/></svg>
<svg class="ico" style="left:837px;top:69px" width="20" height="20" viewBox="0 0 20 20"><path d="M2 5 L10 2 L18 5 L10 8.6z" fill="#6b9be6" stroke="#10204a" stroke-width=".8"/><path d="M2 5 L10 8.6 V18.4 Q3 14 2 5z" fill="#2f5fc0" stroke="#10204a" stroke-width=".8"/><path d="M18 5 L10 8.6 V18.4 Q17 14 18 5z" fill="#1b3a8a" stroke="#10204a" stroke-width=".8"/></svg>
<div class="glabel" style="left:730px">图像 (进阶)</div>
<svg class="ico" style="left:878.5px;top:69px" width="20" height="20" viewBox="0 0 20 20"><path d="M1 2.4 h4 M3 .4 v4 M1 6 h4" stroke="#111" stroke-width="1"/><path d="M12.12 10.52 l5 5" stroke="#8a8a8a" stroke-width="2.6" stroke-linecap="round"/><circle cx="9" cy="7.4" r="5.2" fill="url(#r7)" stroke="#7d8ea8" stroke-width="1.3"/><g transform="translate(9.5 9.5) scale(0.85)"><path d="M0 3 l5 -3 l6 2 l-5 3z" fill="#d5d5d5" stroke="#444" stroke-width=".6"/><path d="M0 3 l6 2 v7 l-6 -2.4z" fill="#777" stroke="#444" stroke-width=".6"/><path d="M6 5 l5 -3 v7 l-5 3z" fill="#a9a9a9" stroke="#444" stroke-width=".6"/></g></svg>
<svg class="ico" style="left:904.5px;top:69px" width="20" height="20" viewBox="0 0 20 20"><path d="M12.12 10.72 l5 5" stroke="#8a8a8a" stroke-width="2.6" stroke-linecap="round"/><circle cx="9" cy="7.6" r="5.2" fill="url(#r7)" stroke="#7d8ea8" stroke-width="1.3"/><g transform="translate(9.5 9.5) scale(0.85)"><path d="M0 3 l5 -3 l6 2 l-5 3z" fill="#d5d5d5" stroke="#444" stroke-width=".6"/><path d="M0 3 l6 2 v7 l-6 -2.4z" fill="#777" stroke="#444" stroke-width=".6"/><path d="M6 5 l5 -3 v7 l-5 3z" fill="#a9a9a9" stroke="#444" stroke-width=".6"/></g><path d="M1 1 h3.4 M1 1 v3.4 M19 1 h-3.4 M19 1 v3.4 M1 19 h3.4 M1 19 v-3.4" stroke="#35c22a" stroke-width="1.4" fill="none"/></svg>
<svg class="ico" style="left:930.5px;top:69px" width="20" height="20" viewBox="0 0 20 20"><rect x="3" y="4.4" width="14" height="11.2" fill="url(#l14)" stroke="#222" stroke-width="1.2"/><path d="M1.4 2.8 l3.2 0 M1.4 2.8 l0 3.2 M1.4 2.8 l3 3" stroke="#35c22a" stroke-width="1.3" transform="rotate(180 3 4.4)"/><path d="M15.4 2.8 l3.2 0 M15.4 2.8 l0 3.2 M15.4 2.8 l3 3" stroke="#35c22a" stroke-width="1.3" transform="rotate(270 17 4.4)"/><path d="M1.4 14 l3.2 0 M1.4 14 l0 3.2 M1.4 14 l3 3" stroke="#35c22a" stroke-width="1.3" transform="rotate(90 3 15.6)"/><path d="M15.4 14 l3.2 0 M15.4 14 l0 3.2 M15.4 14 l3 3" stroke="#35c22a" stroke-width="1.3" transform="rotate(0 17 15.6)"/><text x="10" y="13.4" font-size="8" font-weight="700" text-anchor="middle" fill="#111" font-family="Liberation Sans,sans-serif">1:1</text></svg>
<svg class="ico" style="left:956.5px;top:69px" width="20" height="20" viewBox="0 0 20 20"><path d="M4.6 14.6 L15 4.6" stroke="#2aa822" stroke-width="2.4"/><path d="M11 3.2 L17.6 2.2 L16.4 8.8z" fill="#2aa822"/><circle cx="4.4" cy="15.2" r="2.8" fill="url(#r15)" stroke="#555" stroke-width=".6"/></svg>
<svg class="ico" style="left:982.5px;top:69px" width="20" height="20" viewBox="0 0 20 20"><path d="M4.01 8.4 A6.2 6.2 0 0 1 15.08 6.44" fill="none" stroke="#2f9e28" stroke-width="3.4"/><path d="M18 10.62 L18.28 4.2 L11.88 8.69 Z" fill="#2f9e28"/><path d="M15.99 11.6 A6.2 6.2 0 0 1 4.92 13.56" fill="none" stroke="#49c23e" stroke-width="3.4"/><path d="M2 9.38 L1.72 15.8 L8.12 11.31 Z" fill="#49c23e"/></svg>
<svg class="ico" style="left:1008.5px;top:69px" width="20" height="20" viewBox="0 0 20 20"><g transform="translate(1 -0.5) scale(0.9)"><path d="M0.5 7.6 Q5 2.2 11 2.4 Q16.5 2.8 19.5 7 Q15 9.4 10 9.4 Q4.5 9.4 0.5 7.6Z" fill="#c3cbdc"/><ellipse cx="10.2" cy="6" rx="4.2" ry="3.3" fill="#4a668f"/><ellipse cx="10.2" cy="6" rx="1.9" ry="1.7" fill="#1a2238"/><ellipse cx="8.8" cy="4.9" rx="1" ry=".7" fill="#cfdbee"/><path d="M0.5 7.6 Q5 2.2 11 2.4 Q16.5 2.8 19.5 7" fill="none" stroke="#3b4260" stroke-width="1.8"/><path d="M3 4.6 L1.6 3 M6 3 L5.2 1.2 M9.5 2.2 L9.4 .4 M13 2.4 L13.8 .7 M16.2 3.8 L17.6 2.4" stroke="#4a5272" stroke-width=".8"/><path d="M0.5 7.6 Q10 11.4 19.5 7" fill="none" stroke="#9a8fa8" stroke-width=".7"/></g><circle cx="10" cy="12.6" r="6.6" fill="url(#r13)" stroke="#b0821a" stroke-width=".6"/><circle cx="7.8" cy="10.8" r=".9" fill="#333"/><circle cx="12.2" cy="10.8" r=".9" fill="#333"/><path d="M6.6 14 q3.4 3.4 6.8 0" fill="none" stroke="#7a4a10" stroke-width=".9"/></svg>
<div class="glabel" style="left:955px">视图</div>
<svg class="ico" style="left:1052px;top:69px" width="20" height="20" viewBox="0 0 20 20"><g transform="translate(9.5 11) scale(0.95)"><path d="M-9 1 L0 -4 L9 1 L0 6z" fill="#e9eef7" stroke="#7d8aa0" stroke-width=".6"/><path d="M0 1 V-8" stroke="#1677ee" stroke-width="1.6"/><path d="M-2.4 -6.6 L0 -10.4 L2.4 -6.6z" fill="#1677ee"/><path d="M0 1 L6.5 -3.4" stroke="#22aa22" stroke-width="1.6"/><path d="M4.4 -4.6 L8.8 -4.8 L6.4 -1.2z" fill="#22aa22"/><path d="M0 1 L6 5.4" stroke="#e02020" stroke-width="1.6"/><path d="M4 6.2 L8.4 7.2 L6.8 3.2z" fill="#e02020"/><circle cx="0" cy="1" r="1.7" fill="#eee" stroke="#555" stroke-width=".5"/></g></svg>
<svg class="ico" style="left:1078px;top:69px" width="20" height="20" viewBox="0 0 20 20"><path d="M8 4 L19 2 L19 9 L10 12z" fill="#e9eef7" stroke="#8a98b0" stroke-width=".6"/><path d="M13.4 6.6 V1" stroke="#1677ee" stroke-width="1.3"/><path d="M13.4 6.6 l4 2.4" stroke="#e02020" stroke-width="1.3"/><path d="M13.4 6.6 l3.6 -2.4" stroke="#22aa22" stroke-width="1.3"/><path d="M2.6 17 L10 8.6" stroke="#35b22a" stroke-width="2.6"/><path d="M6.6 7.6 l5.6 -1.4 l-1.6 5.6z" fill="#35b22a"/><rect x="9" y="13.4" width="9" height="4.6" fill="#d5d5d5" stroke="#777" stroke-width=".8"/><circle cx="3" cy="16.6" r="2" fill="#999"/></svg>
<svg class="ico" style="left:1104px;top:69px" width="20" height="20" viewBox="0 0 20 20"><path d="M9 4 L19.4 2.4 L19.4 9.6 L11 12z" fill="#e9eef7" stroke="#8a98b0" stroke-width=".6"/><path d="M14.4 6.6 V.8" stroke="#1677ee" stroke-width="1.3"/><path d="M14.4 6.6 l3.6 2.2" stroke="#e02020" stroke-width="1.3"/><path d="M14.4 6.6 l3.4 -2.2" stroke="#22aa22" stroke-width="1.3"/><path d="M2 9.4 L9 16.8" stroke="#35b22a" stroke-width="2.4"/><path d="M1 7.6 l5 .4 l-3.6 3.6z M10.6 18.4 l-5 -.6 l3.6 -3.4z" fill="#35b22a"/><path d="M5.6 6.4 L12.4 13.6" stroke="#35b22a" stroke-width="2.4"/><path d="M4.4 4.8 l5 .4 l-3.6 3.6z M14 15.4 l-5 -.6 l3.6 -3.4z" fill="#35b22a"/></svg>
<div class="glabel" style="left:1089px">工作平面</div>
<svg class="ico" style="left:1147px;top:69px" width="20" height="20" viewBox="0 0 20 20"><rect x="1.4" y="1.2" width="5.6" height="5.6" fill="#22c8ee"/><rect x="7.3" y="1.2" width="5.6" height="5.6" fill="#e8e010"/><rect x="13.2" y="1.2" width="5.6" height="5.6" fill="#18c018"/><rect x="1.4" y="7.1" width="5.6" height="5.6" fill="#f08010"/><rect x="7.3" y="7.1" width="5.6" height="5.6" fill="#a05a10"/><rect x="13.2" y="7.1" width="5.6" height="5.6" fill="#ee10ee"/><rect x="1.4" y="13" width="5.6" height="5.6" fill="#1010ee"/><rect x="7.3" y="13" width="5.6" height="5.6" fill="#18a818"/><rect x="13.2" y="13" width="5.6" height="5.6" fill="#8a8a8a"/></svg>
<svg class="ico" style="left:1173px;top:69px" width="20" height="20" viewBox="0 0 20 20"><rect x="2.5" y="1.5" width="14" height="17" fill="#f1f4fa" stroke="#4a6ab0" stroke-width="1"/><rect x="4.6" y="3.6" width="9.8" height="1.6" fill="#f0b020"/><rect x="4.6" y="6.2" width="6" height="1.2" fill="#8aa8e0"/><rect x="4.6" y="8.8" width="2.6" height="2.6" fill="#22c8ee"/><rect x="7.9" y="8.8" width="2.6" height="2.6" fill="#e8e010"/><rect x="11.2" y="8.8" width="2.6" height="2.6" fill="#18c018"/><rect x="4.6" y="11.9" width="2.6" height="2.6" fill="#f08010"/><rect x="7.9" y="11.9" width="2.6" height="2.6" fill="#ee10ee"/><rect x="11.2" y="11.9" width="2.6" height="2.6" fill="#1010ee"/><rect x="4.6" y="15" width="2.6" height="2.6" fill="#18a818"/><rect x="7.9" y="15" width="2.6" height="2.6" fill="#dd2020"/><rect x="11.2" y="15" width="2.6" height="2.6" fill="#8a8a8a"/></svg>
<svg class="ico" style="left:1199px;top:69px" width="20" height="20" viewBox="0 0 20 20"><circle cx="10" cy="10" r="8.6" fill="url(#r16)" stroke="#4a6a1e" stroke-width=".8"/><path d="M5.4 5.4 L14.6 14.6" stroke="#e9e9e9" stroke-width="2.6" stroke-linecap="round"/><path d="M14.6 5.4 L5.4 14.6" stroke="#cfcfcf" stroke-width="2.2" stroke-linecap="round"/><circle cx="5.6" cy="5.6" r="2" fill="#f4f4f4"/><circle cx="14.6" cy="5.4" r="1.6" fill="#dcdcdc"/></svg>
<svg class="ico" style="left:1225px;top:69px" width="20" height="20" viewBox="0 0 20 20"><rect x="1.6" y="2" width="16.8" height="16" fill="#dfe8f7" stroke="#3a5a9a" stroke-width="1"/><rect x="1.6" y="2" width="16.8" height="3.4" fill="#3f66b4"/><path d="M4 8 h2 M7.4 8 h2 M10.8 8 h2 M14.2 8 h2" stroke="#444" stroke-width="1.6"/><path d="M6 11 L14.6 17" stroke="#8a8f9a" stroke-width="2.2" stroke-linecap="round"/><path d="M14.6 10.6 L6.4 17.4" stroke="#6aa0e0" stroke-width="2.2" stroke-linecap="round"/></svg>
<svg class="ico" style="left:1251px;top:69px" width="20" height="20" viewBox="0 0 20 20"><rect x="2" y="4" width="15" height="13" fill="none" stroke="#222" stroke-width="1.4" stroke-dasharray="1.6 1.6"/><path d="M6 9 q5 -8 12.6 -4.6 l-2 4.6 q-5 -1 -7.6 3.6z" fill="#f0b878" stroke="#9a6a30" stroke-width=".7"/><circle cx="5.6" cy="14" r="2.6" fill="#f6e640" stroke="#2a5ad0" stroke-width=".8"/><path d="M4 14 h3.2 M5.6 12.4 v3.2" stroke="#2a5ad0" stroke-width=".9"/></svg>
<svg class="ico" style="left:1277px;top:69px" width="20" height="20" viewBox="0 0 20 20"><path d="M5 3 L18.6 1.4 L15.4 15.4 L1.4 17.6z" fill="#ee8a8a" stroke="#2a5ac0" stroke-width="1.6"/><path d="M8.4 2.6 L4.8 17 M12 2.2 L8.4 16.4 M15.4 1.8 L11.8 15.8 M4 6.6 L17.8 5 M3.2 10.4 L16.8 8.6 M2.4 14 L16 12.2" stroke="#fff" stroke-width=".8"/></svg>
<div class="glabel" style="left:1223px">系统</div>
<div id="sidebar">
<div class="abs" style="left:3px;top:3px;width:54px;height:3px;background-image:repeating-linear-gradient(to right,#fff 0,#fff 2px,transparent 2px,transparent 4px)"></div>
<div class="abs" style="left:3px;top:256px;width:54px;height:3px;background-image:repeating-linear-gradient(to right,#fff 0,#fff 2px,transparent 2px,transparent 4px)"></div>
<svg class="ico" style="left:7px;top:15px" width="20" height="20" viewBox="0 0 20 20"><path d="M1 6.500 l6 -3.400 l1 1.800 l-6 3.400z M1.600 10 l6 -3.400 l1 1.800 l-6 3.400z M2.600 13.400 l5 -3 l1 1.800 l-5 3z" fill="#c9cedb" stroke="#8a90a0" stroke-width=".4"/><path d="M9 12.500 l-4.600 5" stroke="#9a9a9a" stroke-width="2.600" stroke-linecap="round"/><circle cx="12.400" cy="8.600" r="5.200" fill="url(#r7)" stroke="#7d8ea8" stroke-width="1.300"/></svg>
<svg class="ico" style="left:33px;top:15px" width="20" height="20" viewBox="0 0 20 20"><path d="M3 3 L12 14 M12.6 3.4 L2 12" stroke="#3a6ac8" stroke-width="1.4"/><path d="M6.7 13.5 L15.5 3.5" stroke="#e6a03c" stroke-width="3.4"/><path d="M13.52 5.75 L15.5 3.5" stroke="#b0281c" stroke-width="3.4"/><path d="M4.5 16 L6.7 13.5" stroke="#222" stroke-width="1.6"/></svg>
<svg class="abs" style="left:49px;top:13px" width="5" height="3" viewBox="0 0 5 3"><path d="M0 0 h5 l-2.500 3z" fill="#111"/></svg>
<svg class="ico" style="left:7px;top:41px" width="20" height="20" viewBox="0 0 20 20"><rect x="3.4" y="4" width="13" height="11" fill="url(#l14)" stroke="#222" stroke-width="1.2"/><path d="M1.8 2.4 l3.2 0 M1.8 2.4 l0 3.2 M1.8 2.4 l3 3" stroke="#35c22a" stroke-width="1.3" transform="rotate(180 3.4 4)"/><path d="M14.8 2.4 l3.2 0 M14.8 2.4 l0 3.2 M14.8 2.4 l3 3" stroke="#35c22a" stroke-width="1.3" transform="rotate(270 16.4 4)"/><path d="M1.8 13.4 l3.2 0 M1.8 13.4 l0 3.2 M1.8 13.4 l3 3" stroke="#35c22a" stroke-width="1.3" transform="rotate(90 3.4 15)"/><path d="M14.8 13.4 l3.2 0 M14.8 13.4 l0 3.2 M14.8 13.4 l3 3" stroke="#35c22a" stroke-width="1.3" transform="rotate(0 16.4 15)"/></svg>
<svg class="ico" style="left:33px;top:41px" width="20" height="20" viewBox="0 0 20 20"><path d="M3.5 5.5 q3 -5 7 0 q4 6 7 4 q1.6 5 -4 6.6 q-4 .6 -5 -2.6" fill="none" stroke="#3a6ac8" stroke-width="1.5"/><path d="M6.3 13.9 L15.5 3.5" stroke="#e6a03c" stroke-width="3.4"/><path d="M13.43 5.84 L15.5 3.5" stroke="#b0281c" stroke-width="3.4"/><path d="M4 16.5 L6.3 13.9" stroke="#222" stroke-width="1.6"/></svg>
<svg class="abs" style="left:49px;top:39px" width="5" height="3" viewBox="0 0 5 3"><path d="M0 0 h5 l-2.500 3z" fill="#111"/></svg>
<svg class="ico" style="left:7px;top:67px" width="20" height="20" viewBox="0 0 20 20"><path d="M1 2.4 h4 M3 .4 v4 M1 6 h4" stroke="#111" stroke-width="1"/><path d="M12.12 10.52 l5 5" stroke="#8a8a8a" stroke-width="2.6" stroke-linecap="round"/><circle cx="9" cy="7.4" r="5.2" fill="url(#r7)" stroke="#7d8ea8" stroke-width="1.3"/><g transform="translate(9.5 9.5) scale(0.85)"><path d="M0 3 l5 -3 l6 2 l-5 3z" fill="#d5d5d5" stroke="#444" stroke-width=".6"/><path d="M0 3 l6 2 v7 l-6 -2.4z" fill="#777" stroke="#444" stroke-width=".6"/><path d="M6 5 l5 -3 v7 l-5 3z" fill="#a9a9a9" stroke="#444" stroke-width=".6"/></g></svg>
<svg class="ico" style="left:33px;top:67px" width="20" height="20" viewBox="0 0 20 20"><rect x="3" y="4" width="13" height="13" fill="#f6f6d8" stroke="#f2e600" stroke-width="1.6"/><path d="M5.5 9.6 l3.4 4.6 l7.6 -10" fill="none" stroke="#2fc028" stroke-width="3" stroke-linejoin="round"/></svg>
<svg class="abs" style="left:23px;top:65px" width="5" height="3" viewBox="0 0 5 3"><path d="M0 0 h5 l-2.500 3z" fill="#111"/></svg>
<svg class="abs" style="left:49px;top:65px" width="5" height="3" viewBox="0 0 5 3"><path d="M0 0 h5 l-2.500 3z" fill="#111"/></svg>
<svg class="ico" style="left:7px;top:93px" width="20" height="20" viewBox="0 0 20 20"><g transform="translate(9 11) scale(0.95)"><path d="M-9 1 L0 -4 L9 1 L0 6z" fill="#e9eef7" stroke="#7d8aa0" stroke-width=".6"/><path d="M0 1 V-8" stroke="#1677ee" stroke-width="1.6"/><path d="M-2.4 -6.6 L0 -10.4 L2.4 -6.6z" fill="#1677ee"/><path d="M0 1 L6.5 -3.4" stroke="#22aa22" stroke-width="1.6"/><path d="M4.4 -4.6 L8.8 -4.8 L6.4 -1.2z" fill="#22aa22"/><path d="M0 1 L6 5.4" stroke="#e02020" stroke-width="1.6"/><path d="M4 6.2 L8.4 7.2 L6.8 3.2z" fill="#e02020"/><circle cx="0" cy="1" r="1.7" fill="#eee" stroke="#555" stroke-width=".5"/></g></svg>
<svg class="ico" style="left:33px;top:93px" width="20" height="20" viewBox="0 0 20 20"><path d="M2 8 q3 -7 6 0 q3 9 6 2 q2 -5 4.6 -1.6" fill="none" stroke="#3a6ac8" stroke-width="1.5"/><path d="M6.3 13.9 L15.5 3.5" stroke="#e6a03c" stroke-width="3.4"/><path d="M13.43 5.84 L15.5 3.5" stroke="#b0281c" stroke-width="3.4"/><path d="M4 16.5 L6.3 13.9" stroke="#222" stroke-width="1.6"/></svg>
<svg class="abs" style="left:23px;top:91px" width="5" height="3" viewBox="0 0 5 3"><path d="M0 0 h5 l-2.500 3z" fill="#111"/></svg>
<svg class="abs" style="left:49px;top:91px" width="5" height="3" viewBox="0 0 5 3"><path d="M0 0 h5 l-2.500 3z" fill="#111"/></svg>
<svg class="ico" style="left:7px;top:119px" width="20" height="20" viewBox="0 0 20 20"><path d="M1 1.600 h9.500 l3.500 2.600 h-9.500z" fill="#6f7de8" stroke="#4a58c8" stroke-width=".4"/><path d="M1 4.800 h9.500 l3.500 2.600 h-9.500z" fill="#d5d9ea" stroke="#8a90a8" stroke-width=".4"/><path d="M1 8 h9.500 l3.500 2.600 h-9.500z" fill="#9098b0" stroke="#6a7088" stroke-width=".4"/><ellipse cx="10" cy="14.6" rx="7.6" ry="4.4" fill="#c79a74" stroke="#7a543a" stroke-width=".7"/><circle cx="6.5" cy="15" r="1.7" fill="#2244dd"/><circle cx="10.6" cy="16.4" r="1.7" fill="#22b02a"/><circle cx="14" cy="13.6" r="1.7" fill="#dd2020"/><path d="M18.6 1.4 L11.5 11.6" stroke="#a0561e" stroke-width="1.8"/><path d="M11.5 11.6 l-1.4 2.4" stroke="#333" stroke-width="1.8"/></svg>
<svg class="ico" style="left:33px;top:119px" width="20" height="20" viewBox="0 0 20 20"><path d="M6 3.4 L18.6 1.6 L14.8 14.8 L1.6 17.4z" fill="url(#l17)" stroke="#2a5ac0" stroke-width="1.4"/><path d="M11.6 2.6 L8 16 M4.2 9.6 L17 7.6" stroke="#fff" stroke-width="1"/></svg>
<svg class="abs" style="left:23px;top:117px" width="5" height="3" viewBox="0 0 5 3"><path d="M0 0 h5 l-2.500 3z" fill="#111"/></svg>
<svg class="abs" style="left:49px;top:117px" width="5" height="3" viewBox="0 0 5 3"><path d="M0 0 h5 l-2.500 3z" fill="#111"/></svg>
<svg class="ico" style="left:7px;top:145px" width="20" height="20" viewBox="0 0 20 20"><path d="M4.01 8.4 A6.2 6.2 0 0 1 15.08 6.44" fill="none" stroke="#5a97dc" stroke-width="3.6"/><path d="M18.18 10.87 L18.47 4.07 L11.69 8.82 Z" fill="#5a97dc"/><path d="M15.99 11.6 A6.2 6.2 0 0 1 4.92 13.56" fill="none" stroke="#7db1ea" stroke-width="3.6"/><path d="M1.82 9.13 L1.53 15.93 L8.31 11.18 Z" fill="#7db1ea"/></svg>
<svg class="ico" style="left:33px;top:145px" width="20" height="20" viewBox="0 0 20 20"><g transform="translate(2.5 3) scale(1.35)"><path d="M0 3 l5 -3 l6 2 l-5 3z" fill="#d5d5d5" stroke="#444" stroke-width=".6"/><path d="M0 3 l6 2 v7 l-6 -2.4z" fill="#777" stroke="#444" stroke-width=".6"/><path d="M6 5 l5 -3 v7 l-5 3z" fill="#a9a9a9" stroke="#444" stroke-width=".6"/></g></svg>
<svg class="abs" style="left:23px;top:143px" width="5" height="3" viewBox="0 0 5 3"><path d="M0 0 h5 l-2.500 3z" fill="#111"/></svg>
<svg class="abs" style="left:49px;top:143px" width="5" height="3" viewBox="0 0 5 3"><path d="M0 0 h5 l-2.500 3z" fill="#111"/></svg>
<svg class="ico" style="left:7px;top:171px" width="20" height="20" viewBox="0 0 20 20"><ellipse cx="10" cy="18" rx="5" ry="1.5" fill="#9aa0b0" opacity=".7"/><text x="10" y="15.6" font-size="19" font-weight="700" text-anchor="middle" fill="#3f74c8" stroke="#1f4488" stroke-width=".5" font-family="Liberation Sans,sans-serif">?</text></svg>
<svg class="ico" style="left:33px;top:171px" width="20" height="20" viewBox="0 0 20 20"><path d="M3 3 V18 M17 3 V18" stroke="#222" stroke-width="1.3"/><path d="M4 7 H16" stroke="#222" stroke-width="1.1"/><path d="M3.6 7 l3.4 -2 v4z M16.4 7 l-3.4 -2 v4z" fill="#e8d800" stroke="#222" stroke-width=".4"/></svg>
<svg class="abs" style="left:23px;top:169px" width="5" height="3" viewBox="0 0 5 3"><path d="M0 0 h5 l-2.500 3z" fill="#111"/></svg>
<svg class="abs" style="left:49px;top:169px" width="5" height="3" viewBox="0 0 5 3"><path d="M0 0 h5 l-2.500 3z" fill="#111"/></svg>
<svg class="ico" style="left:7px;top:197px" width="20" height="20" viewBox="0 0 20 20"><path d="M4 5 h12 l-1.6 13 h-8.8z" fill="url(#l18)" stroke="#4a7a98" stroke-width=".8"/><ellipse cx="10" cy="5" rx="6" ry="1.8" fill="#d9eef8" stroke="#4a7a98" stroke-width=".8"/><path d="M8 1.4 l2 -1 l1.6 2.4 l-2 2z" fill="#e8d820" stroke="#7a6a10" stroke-width=".4"/><path d="M7.6 9 l1 6 M10.6 8.6 l0 7 M13 9 l-1 6" stroke="#e8f4c8" stroke-width=".9"/></svg>
<svg class="ico" style="left:33px;top:197px" width="20" height="20" viewBox="0 0 20 20"><path d="M3 8 L9 2.6 V5.6 Q17.6 6 16 15.6 Q14.6 10.6 9 10.6 V13.6z" fill="url(#l6)" stroke="#8a8a8a" stroke-width=".6"/><ellipse cx="11" cy="17.6" rx="5" ry="1.3" fill="#9aa0b0" opacity=".6"/></svg>
<svg class="abs" style="left:23px;top:195px" width="5" height="3" viewBox="0 0 5 3"><path d="M0 0 h5 l-2.500 3z" fill="#111"/></svg>
<svg class="abs" style="left:49px;top:195px" width="5" height="3" viewBox="0 0 5 3"><path d="M0 0 h5 l-2.500 3z" fill="#111"/></svg>
<svg class="ico" style="left:7px;top:223px" width="20" height="20" viewBox="0 0 20 20"><path d="M2 1 V16" stroke="#555" stroke-width="2"/><circle cx="11" cy="9" r="6" fill="none" stroke="#7a4a14" stroke-width="1.6"/><path d="M11 1 V17 M3 9 H19 M5.2 3.4 L16.8 14.6 M16.8 3.4 L5.2 14.6" stroke="#7a4a14" stroke-width="1.2"/><circle cx="11" cy="9" r="1.8" fill="#f09020"/><path d="M1 15 l6 -2 l11 2 l-6 3.4z" fill="#f09020" stroke="#c06a10" stroke-width=".6"/><path d="M3 16.4 l11 -1 M5 14 l9 3.4 M9 13.6 l-5 3.6" stroke="#c0500a" stroke-width=".6"/></svg>
<svg class="ico" style="left:33px;top:223px" width="20" height="20" viewBox="0 0 20 20"><path d="M6 8 h12 v11 h-12z" fill="#fff" stroke="#222" stroke-width="1"/><path d="M1.4 4 l5 -1.6 l2 1.6 l7 -1.4 l1.4 9.4 l-13.6 3z" fill="url(#l9)" stroke="#b0862a" stroke-width=".7"/><path d="M9 2.6 l5 -1.6 l1 2.6 l-5 1.6z" fill="#3fb22a"/></svg>
<svg class="abs" style="left:23px;top:221px" width="5" height="3" viewBox="0 0 5 3"><path d="M0 0 h5 l-2.500 3z" fill="#111"/></svg>
</div>
<div id="viewport">
<svg class="abs" style="left:0;top:0" width="1860" height="891" viewBox="60 109 1860 891"><defs><linearGradient id="g1" gradientUnits="userSpaceOnUse" x1="1240" y1="0" x2="1317" y2="0"><stop offset="0" stop-color="#555"/><stop offset="0.35" stop-color="#7a7a7a"/><stop offset="0.7" stop-color="#4a4a4a"/><stop offset="1" stop-color="#333"/></linearGradient><linearGradient id="g2" gradientUnits="userSpaceOnUse" x1="972" y1="535" x2="1024" y2="625"><stop offset="0" stop-color="#8c8c8c"/><stop offset="0.12" stop-color="#dcdcdc"/><stop offset="0.22" stop-color="#f4f4f4"/><stop offset="0.36" stop-color="#c9c9c9"/><stop offset="0.62" stop-color="#8c8c8c"/><stop offset="0.85" stop-color="#5a5a5a"/><stop offset="1" stop-color="#3c3c3c"/></linearGradient><linearGradient id="g3" gradientUnits="userSpaceOnUse" x1="969.5" y1="550.9" x2="1009.5" y2="620.1"><stop offset="0" stop-color="#b2b2b2"/><stop offset="0.5" stop-color="#a6a6a6"/><stop offset="1" stop-color="#8c8c8c"/></linearGradient><linearGradient id="g4" gradientUnits="userSpaceOnUse" x1="1499" y1="0" x2="1511" y2="0"><stop offset="0" stop-color="#4a4a4a"/><stop offset="1" stop-color="#a8a8a8"/></linearGradient><linearGradient id="g5" gradientUnits="userSpaceOnUse" x1="1209.5" y1="0" x2="1221.5" y2="0"><stop offset="0" stop-color="#4a4a4a"/><stop offset="1" stop-color="#a8a8a8"/></linearGradient><linearGradient id="g6" gradientUnits="userSpaceOnUse" x1="1283" y1="0" x2="1295" y2="0"><stop offset="0" stop-color="#4a4a4a"/><stop offset="1" stop-color="#a8a8a8"/></linearGradient><linearGradient id="g7" gradientUnits="userSpaceOnUse" x1="1301.5" y1="0" x2="1313.5" y2="0"><stop offset="0" stop-color="#4a4a4a"/><stop offset="1" stop-color="#a8a8a8"/></linearGradient><linearGradient id="g8" gradientUnits="userSpaceOnUse" x1="1320" y1="0" x2="1332" y2="0"><stop offset="0" stop-color="#4a4a4a"/><stop offset="1" stop-color="#a8a8a8"/></linearGradient><linearGradient id="g9" gradientUnits="userSpaceOnUse" x1="1483" y1="0" x2="1502" y2="0"><stop offset="0" stop-color="#555"/><stop offset="1" stop-color="#b5b5b5"/></linearGradient><linearGradient id="g10" gradientUnits="userSpaceOnUse" x1="1377" y1="0" x2="1399" y2="0"><stop offset="0" stop-color="#8a8a8a"/><stop offset="0.5" stop-color="#5e5e5e"/><stop offset="1" stop-color="#3b3b3b"/></linearGradient><linearGradient id="g11" gradientUnits="userSpaceOnUse" x1="1281" y1="0" x2="1312" y2="0"><stop offset="0" stop-color="#5a5a5a"/><stop offset="0.4" stop-color="#cfcfcf"/><stop offset="0.75" stop-color="#a2a2a2"/><stop offset="1" stop-color="#8a8a8a"/></linearGradient><linearGradient id="g12" gradientUnits="userSpaceOnUse" x1="1296" y1="0" x2="1318" y2="0"><stop offset="0" stop-color="#6e6e6e"/><stop offset="0.5" stop-color="#b2b2b2"/><stop offset="1" stop-color="#9a9a9a"/></linearGradient><linearGradient id="g13" gradientUnits="userSpaceOnUse" x1="1373.7" y1="0" x2="1385.3" y2="0"><stop offset="0" stop-color="#a0a0a0"/><stop offset="0.25" stop-color="#989898"/><stop offset="0.6" stop-color="#696969"/><stop offset="1" stop-color="#3c3c3c"/></linearGradient><linearGradient id="g14" gradientUnits="userSpaceOnUse" x1="1396.9" y1="0" x2="1406.1" y2="0"><stop offset="0" stop-color="#4a4a4a"/><stop offset="1" stop-color="#a0a0a0"/></linearGradient><linearGradient id="g15" gradientUnits="userSpaceOnUse" x1="1418.9" y1="0" x2="1428.1" y2="0"><stop offset="0" stop-color="#4a4a4a"/><stop offset="1" stop-color="#a0a0a0"/></linearGradient><linearGradient id="g16" gradientUnits="userSpaceOnUse" x1="1059" y1="0" x2="1071" y2="0"><stop offset="0" stop-color="#9c9c9c"/><stop offset="0.4" stop-color="#8a8a8a"/><stop offset="1" stop-color="#505050"/></linearGradient><linearGradient id="g17" gradientUnits="userSpaceOnUse" x1="1077.6" y1="0" x2="1191" y2="0"><stop offset="0" stop-color="#a9a9a9"/><stop offset="0.25" stop-color="#a0a0a0"/><stop offset="0.55" stop-color="#7e7e7e"/><stop offset="0.8" stop-color="#565656"/><stop offset="1" stop-color="#474747"/></linearGradient><linearGradient id="g18" gradientUnits="userSpaceOnUse" x1="1126.8" y1="0" x2="1143.5" y2="0"><stop offset="0" stop-color="#8b8b8b"/><stop offset="0.5" stop-color="#777"/><stop offset="1" stop-color="#4f4f4f"/></linearGradient><linearGradient id="g19" gradientUnits="userSpaceOnUse" x1="1059" y1="0" x2="1071" y2="0"><stop offset="0" stop-color="#969696"/><stop offset="0.25" stop-color="#8e8e8e"/><stop offset="0.6" stop-color="#646464"/><stop offset="1" stop-color="#3c3c3c"/></linearGradient><linearGradient id="g20" gradientUnits="userSpaceOnUse" x1="1198.5" y1="0" x2="1211.5" y2="0"><stop offset="0" stop-color="#969696"/><stop offset="0.25" stop-color="#8e8e8e"/><stop offset="0.6" stop-color="#646464"/><stop offset="1" stop-color="#3c3c3c"/></linearGradient><linearGradient id="g21" gradientUnits="userSpaceOnUse" x1="1128.8" y1="0" x2="1141.2" y2="0"><stop offset="0" stop-color="#969696"/><stop offset="0.25" stop-color="#8e8e8e"/><stop offset="0.6" stop-color="#646464"/><stop offset="1" stop-color="#3c3c3c"/></linearGradient><linearGradient id="g22" gradientUnits="userSpaceOnUse" x1="1129" y1="0" x2="1141" y2="0"><stop offset="0" stop-color="#a0a0a0"/><stop offset="0.4" stop-color="#8c8c8c"/><stop offset="1" stop-color="#505050"/></linearGradient><linearGradient id="g23" gradientUnits="userSpaceOnUse" x1="1012.5" y1="0" x2="1031.5" y2="0"><stop offset="0" stop-color="#4c4c4c"/><stop offset="1" stop-color="#b0b0b0"/></linearGradient><linearGradient id="g24" gradientUnits="userSpaceOnUse" x1="1040" y1="0" x2="1052.6" y2="0"><stop offset="0" stop-color="#4c4c4c"/><stop offset="1" stop-color="#b0b0b0"/></linearGradient><linearGradient id="g25" gradientUnits="userSpaceOnUse" x1="1217.2" y1="0" x2="1229.8" y2="0"><stop offset="0" stop-color="#4c4c4c"/><stop offset="1" stop-color="#b0b0b0"/></linearGradient><linearGradient id="g26" gradientUnits="userSpaceOnUse" x1="1238.5" y1="0" x2="1257.5" y2="0"><stop offset="0" stop-color="#4c4c4c"/><stop offset="1" stop-color="#b0b0b0"/></linearGradient><linearGradient id="g27" gradientUnits="userSpaceOnUse" x1="1156" y1="0" x2="1168.6" y2="0"><stop offset="0" stop-color="#4c4c4c"/><stop offset="1" stop-color="#b0b0b0"/></linearGradient><linearGradient id="g28" gradientUnits="userSpaceOnUse" x1="1177.2" y1="0" x2="1196.2" y2="0"><stop offset="0" stop-color="#4c4c4c"/><stop offset="1" stop-color="#b0b0b0"/></linearGradient><linearGradient id="g29" gradientUnits="userSpaceOnUse" x1="1102" y1="0" x2="1167" y2="0"><stop offset="0" stop-color="#4e4e4e"/><stop offset="0.5" stop-color="#7a7a7a"/><stop offset="1" stop-color="#a6a6a6"/></linearGradient><linearGradient id="g30" gradientUnits="userSpaceOnUse" x1="1109" y1="0" x2="1160" y2="0"><stop offset="0" stop-color="#dedede"/><stop offset="0.5" stop-color="#a8a8a8"/><stop offset="1" stop-color="#6e6e6e"/></linearGradient><linearGradient id="g31" gradientUnits="userSpaceOnUse" x1="1113" y1="0" x2="1156" y2="0"><stop offset="0" stop-color="#6a6a6a"/><stop offset="0.5" stop-color="#9a9a9a"/><stop offset="1" stop-color="#c2c2c2"/></linearGradient><linearGradient id="g32" gradientUnits="userSpaceOnUse" x1="1121" y1="0" x2="1148.2" y2="0"><stop offset="0" stop-color="#b0b0b0"/><stop offset="0.25" stop-color="#a8a8a8"/><stop offset="0.6" stop-color="#737373"/><stop offset="1" stop-color="#404040"/></linearGradient><linearGradient id="g33" gradientUnits="userSpaceOnUse" x1="1111.5" y1="0" x2="1152.5" y2="0"><stop offset="0" stop-color="#aaaaaa"/><stop offset="0.25" stop-color="#a2a2a2"/><stop offset="0.6" stop-color="#707070"/><stop offset="1" stop-color="#404040"/></linearGradient><linearGradient id="g34" gradientUnits="userSpaceOnUse" x1="1092" y1="0" x2="1175" y2="0"><stop offset="0" stop-color="#a4a4a4"/><stop offset="0.4" stop-color="#8e8e8e"/><stop offset="0.8" stop-color="#5e5e5e"/><stop offset="1" stop-color="#4a4a4a"/></linearGradient><clipPath id="hc0"><ellipse cx="1403" cy="548.1" rx="43" ry="24.3"/></clipPath><linearGradient id="g35" gradientUnits="userSpaceOnUse" x1="1360" y1="0" x2="1446" y2="0"><stop offset="0" stop-color="#3f3f3f"/><stop offset="0.3" stop-color="#6a6a6a"/><stop offset="0.7" stop-color="#9a9a9a"/><stop offset="1" stop-color="#b4b4b4"/></linearGradient><clipPath id="hc1"><ellipse cx="1317.5" cy="596.3" rx="43" ry="24.3"/></clipPath><linearGradient id="g36" gradientUnits="userSpaceOnUse" x1="1274.5" y1="0" x2="1360.5" y2="0"><stop offset="0" stop-color="#3f3f3f"/><stop offset="0.3" stop-color="#6a6a6a"/><stop offset="0.7" stop-color="#9a9a9a"/><stop offset="1" stop-color="#b4b4b4"/></linearGradient><clipPath id="hc2"><ellipse cx="1196.5" cy="596.3" rx="43" ry="24.3"/></clipPath><linearGradient id="g37" gradientUnits="userSpaceOnUse" x1="1153.5" y1="0" x2="1239.5" y2="0"><stop offset="0" stop-color="#3f3f3f"/><stop offset="0.3" stop-color="#6a6a6a"/><stop offset="0.7" stop-color="#9a9a9a"/><stop offset="1" stop-color="#b4b4b4"/></linearGradient><clipPath id="hc3"><ellipse cx="1111" cy="548.1" rx="43" ry="24.3"/></clipPath><linearGradient id="g38" gradientUnits="userSpaceOnUse" x1="1068" y1="0" x2="1154" y2="0"><stop offset="0" stop-color="#3f3f3f"/><stop offset="0.3" stop-color="#6a6a6a"/><stop offset="0.7" stop-color="#9a9a9a"/><stop offset="1" stop-color="#b4b4b4"/></linearGradient><clipPath id="hc4"><ellipse cx="1111" cy="479.9" rx="43" ry="24.3"/></clipPath><linearGradient id="g39" gradientUnits="userSpaceOnUse" x1="1068" y1="0" x2="1154" y2="0"><stop offset="0" stop-color="#3f3f3f"/><stop offset="0.3" stop-color="#6a6a6a"/><stop offset="0.7" stop-color="#9a9a9a"/><stop offset="1" stop-color="#b4b4b4"/></linearGradient><clipPath id="hc5"><ellipse cx="1196.5" cy="431.7" rx="43" ry="24.3"/></clipPath><linearGradient id="g40" gradientUnits="userSpaceOnUse" x1="1153.5" y1="0" x2="1239.5" y2="0"><stop offset="0" stop-color="#3f3f3f"/><stop offset="0.3" stop-color="#6a6a6a"/><stop offset="0.7" stop-color="#9a9a9a"/><stop offset="1" stop-color="#b4b4b4"/></linearGradient><clipPath id="hc6"><ellipse cx="1317.5" cy="431.7" rx="43" ry="24.3"/></clipPath><linearGradient id="g41" gradientUnits="userSpaceOnUse" x1="1274.5" y1="0" x2="1360.5" y2="0"><stop offset="0" stop-color="#3f3f3f"/><stop offset="0.3" stop-color="#6a6a6a"/><stop offset="0.7" stop-color="#9a9a9a"/><stop offset="1" stop-color="#b4b4b4"/></linearGradient><clipPath id="hc7"><ellipse cx="1403" cy="479.9" rx="43" ry="24.3"/></clipPath><linearGradient id="g42" gradientUnits="userSpaceOnUse" x1="1360" y1="0" x2="1446" y2="0"><stop offset="0" stop-color="#3f3f3f"/><stop offset="0.3" stop-color="#6a6a6a"/><stop offset="0.7" stop-color="#9a9a9a"/><stop offset="1" stop-color="#b4b4b4"/></linearGradient><clipPath id="hf2"><ellipse cx="1196.5" cy="615.3" rx="43" ry="24.3"/></clipPath><clipPath id="hf1"><ellipse cx="1317.5" cy="615.3" rx="43" ry="24.3"/></clipPath><clipPath id="hf0"><ellipse cx="1403" cy="567.1" rx="43" ry="24.3"/></clipPath><linearGradient id="g43" gradientUnits="userSpaceOnUse" x1="1370" y1="0" x2="1404" y2="0"><stop offset="0" stop-color="#8a8a8a"/><stop offset="0.5" stop-color="#6a6a6a"/><stop offset="1" stop-color="#4e4e4e"/></linearGradient><linearGradient id="g44" gradientUnits="userSpaceOnUse" x1="1230" y1="0" x2="1284" y2="0"><stop offset="0" stop-color="#5a5a5a"/><stop offset="0.5" stop-color="#8a8a8a"/><stop offset="1" stop-color="#e0e0e0"/></linearGradient><linearGradient id="g45" gradientUnits="userSpaceOnUse" x1="1296.5" y1="0" x2="1314.5" y2="0"><stop offset="0" stop-color="#3c3c3c"/><stop offset="0.6" stop-color="#7c7c7c"/><stop offset="1" stop-color="#a9a9a9"/></linearGradient><linearGradient id="g46" gradientUnits="userSpaceOnUse" x1="1282.3" y1="0" x2="1300.3" y2="0"><stop offset="0" stop-color="#3c3c3c"/><stop offset="0.6" stop-color="#7c7c7c"/><stop offset="1" stop-color="#a9a9a9"/></linearGradient><linearGradient id="g47" gradientUnits="userSpaceOnUse" x1="1248" y1="0" x2="1266" y2="0"><stop offset="0" stop-color="#3c3c3c"/><stop offset="0.6" stop-color="#7c7c7c"/><stop offset="1" stop-color="#a9a9a9"/></linearGradient><linearGradient id="g48" gradientUnits="userSpaceOnUse" x1="1213.7" y1="0" x2="1231.7" y2="0"><stop offset="0" stop-color="#3c3c3c"/><stop offset="0.6" stop-color="#7c7c7c"/><stop offset="1" stop-color="#a9a9a9"/></linearGradient><linearGradient id="g49" gradientUnits="userSpaceOnUse" x1="1199.5" y1="0" x2="1217.5" y2="0"><stop offset="0" stop-color="#3c3c3c"/><stop offset="0.6" stop-color="#7c7c7c"/><stop offset="1" stop-color="#a9a9a9"/></linearGradient><linearGradient id="g50" gradientUnits="userSpaceOnUse" x1="1213.7" y1="0" x2="1231.7" y2="0"><stop offset="0" stop-color="#3c3c3c"/><stop offset="0.6" stop-color="#7c7c7c"/><stop offset="1" stop-color="#a9a9a9"/></linearGradient><linearGradient id="g51" gradientUnits="userSpaceOnUse" x1="1248" y1="0" x2="1266" y2="0"><stop offset="0" stop-color="#3c3c3c"/><stop offset="0.6" stop-color="#7c7c7c"/><stop offset="1" stop-color="#a9a9a9"/></linearGradient><linearGradient id="g52" gradientUnits="userSpaceOnUse" x1="1282.3" y1="0" x2="1300.3" y2="0"><stop offset="0" stop-color="#3c3c3c"/><stop offset="0.6" stop-color="#7c7c7c"/><stop offset="1" stop-color="#a9a9a9"/></linearGradient><linearGradient id="g53" gradientUnits="userSpaceOnUse" x1="1233.5" y1="0" x2="1281.5" y2="0"><stop offset="0" stop-color="#acacac"/><stop offset="0.25" stop-color="#a4a4a4"/><stop offset="0.6" stop-color="#6e6e6e"/><stop offset="1" stop-color="#3a3a3a"/></linearGradient><linearGradient id="g54" gradientUnits="userSpaceOnUse" x1="1037.5" y1="0" x2="1085.5" y2="0"><stop offset="0" stop-color="#acacac"/><stop offset="0.25" stop-color="#a4a4a4"/><stop offset="0.6" stop-color="#6e6e6e"/><stop offset="1" stop-color="#3a3a3a"/></linearGradient><linearGradient id="g55" gradientUnits="userSpaceOnUse" x1="1056.3" y1="0" x2="1066.7" y2="0"><stop offset="0" stop-color="#bebebe"/><stop offset="0.25" stop-color="#b6b6b6"/><stop offset="0.6" stop-color="#7d7d7d"/><stop offset="1" stop-color="#464646"/></linearGradient><linearGradient id="g56" gradientUnits="userSpaceOnUse" x1="1057.9" y1="0" x2="1065.1" y2="0"><stop offset="0" stop-color="#c8c8c8"/><stop offset="0.25" stop-color="#c0c0c0"/><stop offset="0.6" stop-color="#878787"/><stop offset="1" stop-color="#505050"/></linearGradient><linearGradient id="g57" gradientUnits="userSpaceOnUse" x1="1429.5" y1="0" x2="1477.5" y2="0"><stop offset="0" stop-color="#acacac"/><stop offset="0.25" stop-color="#a4a4a4"/><stop offset="0.6" stop-color="#6e6e6e"/><stop offset="1" stop-color="#3a3a3a"/></linearGradient><linearGradient id="g58" gradientUnits="userSpaceOnUse" x1="1233.5" y1="0" x2="1281.5" y2="0"><stop offset="0" stop-color="#acacac"/><stop offset="0.25" stop-color="#a4a4a4"/><stop offset="0.6" stop-color="#6e6e6e"/><stop offset="1" stop-color="#3a3a3a"/></linearGradient></defs>
<path d="M1240 790 L1240 836 A38.5 22 0 0 0 1317 836 L1317 790 Z" fill="url(#g1)" stroke="#161616" stroke-width="0.8"/>
<path d="M1067 425 L1149.5 377.6 Q1153 368 1162 360.5 Q1174 352.3 1188.7 352.3 Q1204 352.6 1217.1 359.6 L1225.5 364.2 L1266.7 364.2 L1313.5 390 L1330 450 L1062 462 L1067 452 Z" fill="#ababab" stroke="#161616" stroke-width="0.8"/>
<polygon points="999.5,474.5 1043,448.5 1055.5,445.8 1063,450.5 1068,462 1010,482" fill="#b4b4b4" stroke="#161616" stroke-width="0.8" stroke-linejoin="round"/>
<polygon points="992.5,485 999.5,474.5 1010,482 1068,455 1068,520 1005,560 992.5,552" fill="#9a9a9a" stroke="#161616" stroke-width="0.8" stroke-linejoin="round"/>
<polygon points="1001,480 1008,484 1008,556 1001,552" fill="#c9c9c9" stroke="#161616" stroke-width="0.5" stroke-linejoin="round"/>
<polyline points="1003,476 1060,447" fill="none" stroke="#161616" stroke-width="0.6"/>
<polyline points="1010,482 1066,452" fill="none" stroke="#161616" stroke-width="0.6"/>
<polygon points="1010,484 1030,495 1046,487 1046,510 1010,530" fill="#7c7c7c" stroke="#161616" stroke-width="0.5" stroke-linejoin="round"/>
<polygon points="972,535 1054.3,487.5 1106.3,577.5 1024,625" fill="url(#g2)" stroke="none" stroke-width="0.8" stroke-linejoin="round"/>
<polyline points="972,535 1032.6,500" fill="none" stroke="#161616" stroke-width="0.8"/>
<polyline points="1024,625 1065.6,601" fill="none" stroke="#161616" stroke-width="0.8"/>
<ellipse cx="998" cy="580" rx="52" ry="30" transform="rotate(60 998 580)" fill="url(#g2)" stroke="#161616" stroke-width="0.8"/>
<ellipse cx="989.5" cy="585.5" rx="40" ry="23" transform="rotate(60 989.5 585.5)" fill="url(#g3)" stroke="#161616" stroke-width="0.8"/>
<ellipse cx="989.7" cy="585.8" rx="3.2" ry="2.2" transform="rotate(60 989.7 585.8)" fill="#8a8a8a" stroke="#161616" stroke-width="0.8"/>
<polygon points="1177.6,831 1281,776 1281,745 1330,664 1400,655 1499,661.6 1523.3,673.8 1217.6,850.2" fill="#ababab" stroke="#161616" stroke-width="0.8" stroke-linejoin="round"/>
<polygon points="1217.6,850.2 1523.3,673.8 1523.3,686.8 1217.6,865" fill="#6e6e6e" stroke="#161616" stroke-width="0.8" stroke-linejoin="round"/>
<polygon points="1177.6,831 1217.6,850.2 1217.6,865 1177.6,845.2" fill="#9b9b9b" stroke="#161616" stroke-width="0.8" stroke-linejoin="round"/>
<polyline points="1306.9,798.7 1306.9,813.5" fill="none" stroke="#161616" stroke-width="0.7"/>
<polyline points="1281,785.5 1306.9,799.3" fill="none" stroke="#161616" stroke-width="0.6"/>
<ellipse cx="1505" cy="672.9" rx="5.8" ry="3.3" fill="url(#g4)" stroke="#161616" stroke-width="0.8"/>
<ellipse cx="1215.5" cy="840.5" rx="5.6" ry="3.3" fill="url(#g5)" stroke="#161616" stroke-width="0.8"/>
<ellipse cx="1289" cy="798" rx="5.6" ry="3.3" fill="url(#g6)" stroke="#161616" stroke-width="0.8"/>
<ellipse cx="1307.5" cy="787.5" rx="5.6" ry="3.3" fill="url(#g7)" stroke="#161616" stroke-width="0.8"/>
<ellipse cx="1326" cy="777" rx="5.6" ry="3.3" fill="url(#g8)" stroke="#161616" stroke-width="0.8"/>
<polygon points="1440,540 1477,558.4 1512,578.4 1430.3,635.2 1380,600" fill="#ababab" stroke="#161616" stroke-width="0.8" stroke-linejoin="round"/>
<polygon points="1512,578.4 1512,600 1430.3,646.9 1430.3,635.2" fill="#6c6c6c" stroke="#161616" stroke-width="0.8" stroke-linejoin="round"/>
<polygon points="1512,601 1512,642.2 1503.8,656.8 1442.2,692.4 1409.8,683.5 1410.6,668.9 1422.7,646.2 1430.3,646.9" fill="#474747" stroke="#161616" stroke-width="0.8" stroke-linejoin="round"/>
<ellipse cx="1492.5" cy="583.5" rx="9.5" ry="5.4" fill="url(#g9)" stroke="#161616" stroke-width="0.8"/>
<path d="M1484.6 586.5 A9.5 5.4 0 0 0 1500.4 586.5 A9.5 5.4 0 0 1 1484.6 586.5Z" fill="#dcdcdc" stroke="#161616" stroke-width="0.5"/>
<polygon points="1309,682 1309,630 1430.3,630 1430.3,647 1421,648 1399,662 1375.7,664 1350,670" fill="#4c4c4c" stroke="none" stroke-width="0.8" stroke-linejoin="round"/>
<polygon points="1377,640 1399,640 1399,678 1377,668" fill="url(#g10)" stroke="none" stroke-width="0.8" stroke-linejoin="round"/>
<polygon points="1399.2,661.6 1415.4,643.8 1422.7,646.2 1410.6,668.9" fill="#dadada" stroke="#161616" stroke-width="0.8" stroke-linejoin="round"/>
<polygon points="1399.2,662.4 1410.6,668.9 1410.6,684.3 1399.2,678.7" fill="#8c8c8c" stroke="#161616" stroke-width="0.8" stroke-linejoin="round"/>
<polygon points="1253,680 1312,680 1312,733 1281,751 1281,786 1253,770" fill="#474747" stroke="#161616" stroke-width="0.8" stroke-linejoin="round"/>
<polygon points="1243,680 1253,680 1253,772 1243,768" fill="#8c8c8c" stroke="#161616" stroke-width="0.8" stroke-linejoin="round"/>
<path d="M1281 680 L1281 702 Q1284 727 1310 733.5 L1318 729 L1318 680 Z" fill="url(#g11)" stroke="#161616" stroke-width="0.8"/>
<path d="M1296.5 680 L1296.5 700 Q1299 722 1318 729 L1318 680 Z" fill="url(#g12)" stroke="#161616" stroke-width="0.6"/>
<ellipse cx="1306.2" cy="706.2" rx="4.8" ry="6.2" fill="#9a9a9a" stroke="#161616" stroke-width="0.8"/>
<ellipse cx="1306.2" cy="706.2" rx="2.8" ry="3.8" fill="#4a4a4a" stroke="#161616" stroke-width="0.5"/>
<ellipse cx="1306.2" cy="706.2" rx="1.2" ry="1.8" fill="#999" stroke="#161616" stroke-width="0.3"/>
<polygon points="1309.2,679.5 1340,668 1375.7,664 1409.8,684.3 1370.8,711" fill="#b0b0b0" stroke="#161616" stroke-width="0.8" stroke-linejoin="round"/>
<polygon points="1309.2,679.5 1370.8,711 1370.8,759.8 1318.6,733.4 1309.2,725.7" fill="#a3a3a3" stroke="#161616" stroke-width="0.8" stroke-linejoin="round"/>
<polyline points="1310,680.8 1370.8,712" fill="none" stroke="#dedede" stroke-width="1.6"/>
<polygon points="1372,774 1387,774 1385,779 1374,779" fill="#6e6e6e" stroke="#161616" stroke-width="0.5" stroke-linejoin="round"/>
<path d="M1373.7 778 L1373.7 788 A5.8 3.3 0 0 0 1385.3 788 L1385.3 778 Z" fill="url(#g13)" stroke="#161616" stroke-width="0.8"/>
<polygon points="1370,709.5 1409.8,732.2 1409.8,782.5 1370,758.1" fill="#b5b5b5" stroke="#161616" stroke-width="0.8" stroke-linejoin="round"/>
<polygon points="1409.8,732.2 1452.7,707.9 1452.7,758.1 1409.8,783.3" fill="#474747" stroke="#161616" stroke-width="0.8" stroke-linejoin="round"/>
<polygon points="1370.8,709.5 1387,694.1 1398.4,689.2 1409.8,691.6 1414.6,686.8 1452.7,707.9 1409.8,732.2" fill="#b4b4b4" stroke="#161616" stroke-width="0.8" stroke-linejoin="round"/>
<polygon points="1370.8,709.5 1409.8,732.2 1409.8,738 1370,715.5" fill="#d4d4d4" stroke="#161616" stroke-width="0.5" stroke-linejoin="round"/>
<polygon points="1387,694.1 1398.4,689.2 1425,704 1414,710" fill="#bdbdbd" stroke="#161616" stroke-width="0.5" stroke-linejoin="round"/>
<polyline points="1380.5,702 1419.5,724.5" fill="none" stroke="#2a2a2a" stroke-width="1.3"/>
<polyline points="1409.8,691.6 1445,711.5" fill="none" stroke="#2a2a2a" stroke-width="0.7"/>
<polyline points="1414.6,686.8 1449,706" fill="none" stroke="#e0e0e0" stroke-width="1.4"/>
<polyline points="1371,752.5 1409,774.5" fill="none" stroke="#e2e2e2" stroke-width="1.8"/>
<polygon points="1365.5,741 1371,737 1388,746.5 1382.5,750.5" fill="#8a8a8a" stroke="#161616" stroke-width="0.5" stroke-linejoin="round"/>
<polygon points="1372,738 1387,735 1392,738 1377,742" fill="#9e9e9e" stroke="#161616" stroke-width="0.4" stroke-linejoin="round"/>
<polygon points="1378,750 1386,754 1386,748 1378,744" fill="#555" stroke="#161616" stroke-width="0.5" stroke-linejoin="round"/>
<polygon points="1392,752 1407,744 1407,762 1398,766" fill="#a8a8a8" stroke="#161616" stroke-width="0.5" stroke-linejoin="round"/>
<polygon points="1398,758 1404,755 1404,762 1398,765" fill="#444" stroke="#161616" stroke-width="0.4" stroke-linejoin="round"/>
<polyline points="1361,749 1368,746" fill="none" stroke="#888" stroke-width="0.8"/>
<polyline points="1393,758 1400,755" fill="none" stroke="#888" stroke-width="0.8"/>
<ellipse cx="1401.5" cy="697.5" rx="4.6" ry="2.9" fill="url(#g14)" stroke="#161616" stroke-width="0.6"/>
<ellipse cx="1423.5" cy="709.5" rx="4.6" ry="2.9" fill="url(#g15)" stroke="#161616" stroke-width="0.6"/>
<ellipse cx="1446.5" cy="712.5" rx="3.8" ry="4.2" fill="#a0a0a0" stroke="#161616" stroke-width="0.7"/>
<ellipse cx="1446.5" cy="712.5" rx="2.2" ry="2.6" fill="#cfcfcf" stroke="#161616" stroke-width="0.5"/>
<ellipse cx="1446.5" cy="712.5" rx="1.1" ry="1.4" fill="#3a3a3a" stroke="#161616" stroke-width="0.3"/>
<ellipse cx="1411.5" cy="735" rx="3.8" ry="4.2" fill="#a0a0a0" stroke="#161616" stroke-width="0.7"/>
<ellipse cx="1411.5" cy="735" rx="2.2" ry="2.6" fill="#cfcfcf" stroke="#161616" stroke-width="0.5"/>
<ellipse cx="1411.5" cy="735" rx="1.1" ry="1.4" fill="#3a3a3a" stroke="#161616" stroke-width="0.3"/>
<ellipse cx="1448" cy="757.5" rx="3.8" ry="4.2" fill="#a0a0a0" stroke="#161616" stroke-width="0.7"/>
<ellipse cx="1448" cy="757.5" rx="2.2" ry="2.6" fill="#cfcfcf" stroke="#161616" stroke-width="0.5"/>
<ellipse cx="1448" cy="757.5" rx="1.1" ry="1.4" fill="#3a3a3a" stroke="#161616" stroke-width="0.3"/>
<ellipse cx="1411" cy="779" rx="3.8" ry="4.2" fill="#a0a0a0" stroke="#161616" stroke-width="0.7"/>
<ellipse cx="1411" cy="779" rx="2.2" ry="2.6" fill="#cfcfcf" stroke="#161616" stroke-width="0.5"/>
<ellipse cx="1411" cy="779" rx="1.1" ry="1.4" fill="#3a3a3a" stroke="#161616" stroke-width="0.3"/>
<polygon points="1452.7,724 1460,720 1460,734 1452.7,738" fill="#6a6a6a" stroke="#161616" stroke-width="0.5" stroke-linejoin="round"/>
<polygon points="1452.7,738 1457,736 1457,748 1452.7,750" fill="#555" stroke="#161616" stroke-width="0.5" stroke-linejoin="round"/>
<polygon points="1059,740 1071,740 1071,848 1059,848" fill="url(#g16)" stroke="#161616" stroke-width="0.6" stroke-linejoin="round"/>
<path d="M1052.5 850 Q1052.5 846 1056 844 L1100 818 L1217 857 L1217 863.5 L1140 906 L1131 906 L1052.5 866 Z" fill="#ababab" stroke="#161616" stroke-width="0.8"/>
<path d="M1077.6 760 L1077.6 847.6 A56.7 32.5 0 0 0 1191 847.6 L1191 760 Z" fill="url(#g17)" stroke="#161616" stroke-width="0.8"/>
<polygon points="1052.5,850 1126.8,894.4 1126.8,913.6 1052.5,868.5" fill="#8b8b8b" stroke="#161616" stroke-width="0.8" stroke-linejoin="round"/>
<polygon points="1143.5,894.4 1217,852.6 1217,870.2 1143.5,913.6" fill="#4a4a4a" stroke="#161616" stroke-width="0.8" stroke-linejoin="round"/>
<polygon points="1126.8,894.4 1143.5,894.4 1143.5,913.6 1126.8,913.6" fill="url(#g18)" stroke="#161616" stroke-width="0.8" stroke-linejoin="round"/>
<path d="M1059 877 L1059 887 A6 3.4 0 0 0 1071 887 L1071 877 Z" fill="url(#g19)" stroke="#161616" stroke-width="0.8"/>
<ellipse cx="1065" cy="877" rx="6" ry="3.4" fill="#777" stroke="#161616" stroke-width="0.8"/>
<path d="M1198.5 877 L1198.5 887 A6.5 3.7 0 0 0 1211.5 887 L1211.5 877 Z" fill="url(#g20)" stroke="#161616" stroke-width="0.8"/>
<ellipse cx="1205" cy="877" rx="6.5" ry="3.7" fill="#777" stroke="#161616" stroke-width="0.8"/>
<polygon points="1124.5,912 1145.5,912 1144,919 1126,919" fill="#6a6a6a" stroke="#161616" stroke-width="0.6" stroke-linejoin="round"/>
<path d="M1128.8 919 L1128.8 929 A6.2 3.5 0 0 0 1141.2 929 L1141.2 919 Z" fill="url(#g21)" stroke="#161616" stroke-width="0.8"/>
<path d="M1129 786 L1129 887 A6 3.4 0 0 0 1141 887 L1141 786 Z" fill="url(#g22)" stroke="#161616" stroke-width="0.6"/>
<polygon points="1021.7,699 1161,784 1161,797 1021.7,706" fill="#909090" stroke="#161616" stroke-width="0.8" stroke-linejoin="round"/>
<polygon points="1056.6,728 1126.8,768 1126.8,790 1056.6,750" fill="#9c9c9c" stroke="#161616" stroke-width="0.8" stroke-linejoin="round"/>
<polygon points="1126.8,768 1142,772 1142,790 1126.8,790" fill="#808080" stroke="#161616" stroke-width="0.8" stroke-linejoin="round"/>
<polygon points="1143,775 1166,788 1166,800 1143,790" fill="#5e5e5e" stroke="#161616" stroke-width="0.8" stroke-linejoin="round"/>
<polygon points="1180,788.5 1268.5,738.4 1281,743.4 1281,785.2 1193.4,836.9 1180,830.2" fill="#474747" stroke="#161616" stroke-width="0.8" stroke-linejoin="round"/>
<polygon points="1167.5,782.7 1180,788.5 1180,830.2 1167.5,823.6" fill="#8c8c8c" stroke="#161616" stroke-width="0.8" stroke-linejoin="round"/>
<polygon points="1014.3,693.5 1021.7,697 1021.7,735 1014.3,731" fill="#4e4e4e" stroke="#161616" stroke-width="0.8" stroke-linejoin="round"/>
<polygon points="1002.5,686.7 1014.3,693.4 1014.3,733.5 1002.5,726.8" fill="#9d9d9d" stroke="#161616" stroke-width="0.8" stroke-linejoin="round"/>
<polygon points="991.7,720.2 1002.5,714.3 1002.5,727 1014.3,733.5 1021.7,735 1053.5,726.8 1031,741.8" fill="#ababab" stroke="#161616" stroke-width="0.8" stroke-linejoin="round"/>
<polygon points="991.7,721.8 1031,741.8 1031,756.8 991.7,735.2" fill="#999" stroke="#161616" stroke-width="0.8" stroke-linejoin="round"/>
<polygon points="1031,741.8 1053.5,728.5 1053.5,745.2 1031,756.8" fill="#5a5a5a" stroke="#161616" stroke-width="0.8" stroke-linejoin="round"/>
<polygon points="1190,672 1253.3,672 1253.3,716 1243.3,712" fill="#a4a4a4" stroke="none" stroke-width="0.8" stroke-linejoin="round"/>
<path d="M1002.5 669.5 Q1002 665.5 1006 663.5 L1100 610 L1265 716 Q1269 719 1268.5 723 L1268.5 721.8 L1183 770.5 Q1180 772 1177 770.5 Z" fill="#ababab" stroke="#161616" stroke-width="0.8"/>
<polygon points="1002.5,669.5 1177,770.5 1179.5,771.9 1179.5,787.7 1002.5,686.7" fill="#9b9b9b" stroke="#161616" stroke-width="0.8" stroke-linejoin="round"/>
<polygon points="1185,771 1268.5,722.8 1268.5,738.4 1185,786.8" fill="#6e6e6e" stroke="#161616" stroke-width="0.8" stroke-linejoin="round"/>
<polygon points="1179.5,771.9 1185,771 1185,786.8 1179.5,787.7" fill="#a4a4a4" stroke="#161616" stroke-width="0.5" stroke-linejoin="round"/>
<ellipse cx="1022" cy="664" rx="9.5" ry="5.4" fill="url(#g23)" stroke="#161616" stroke-width="0.8"/>
<path d="M1013.9 666.7 A9.5 5.4 0 0 0 1030.1 666.7 A9.5 5.4 0 0 1 1013.9 666.7 Z" fill="#d5d5d5" stroke="#161616" stroke-width="0.4"/>
<ellipse cx="1046.3" cy="678.3" rx="6.3" ry="3.6" fill="url(#g24)" stroke="#161616" stroke-width="0.8"/>
<ellipse cx="1223.5" cy="709.7" rx="6.3" ry="3.6" fill="url(#g25)" stroke="#161616" stroke-width="0.8"/>
<ellipse cx="1248" cy="723.8" rx="9.5" ry="5.4" fill="url(#g26)" stroke="#161616" stroke-width="0.8"/>
<path d="M1239.9 726.5 A9.5 5.4 0 0 0 1256.1 726.5 A9.5 5.4 0 0 1 1239.9 726.5 Z" fill="#d5d5d5" stroke="#161616" stroke-width="0.4"/>
<ellipse cx="1162.3" cy="745.2" rx="6.3" ry="3.6" fill="url(#g27)" stroke="#161616" stroke-width="0.8"/>
<ellipse cx="1186.7" cy="759.7" rx="9.5" ry="5.4" fill="url(#g28)" stroke="#161616" stroke-width="0.8"/>
<path d="M1178.6 762.4 A9.5 5.4 0 0 0 1194.8 762.4 A9.5 5.4 0 0 1 1178.6 762.4 Z" fill="#d5d5d5" stroke="#161616" stroke-width="0.4"/>
<ellipse cx="1134.6" cy="694.5" rx="32.7" ry="18.6" fill="url(#g29)" stroke="#161616" stroke-width="0.8"/>
<ellipse cx="1134.6" cy="697.8" rx="29.5" ry="16.4" fill="#b4b4b4" stroke="#161616" stroke-width="0.6"/>
<ellipse cx="1134.6" cy="696.5" rx="25.5" ry="14.2" fill="url(#g30)" stroke="#161616" stroke-width="0.6"/>
<ellipse cx="1134.6" cy="694" rx="21.5" ry="12" fill="url(#g31)" stroke="#161616" stroke-width="0.6"/>
<path d="M1121 668 L1121 694 A13.6 7.7 0 0 0 1148.2 694 L1148.2 668 Z" fill="url(#g32)" stroke="#161616" stroke-width="0.8"/>
<ellipse cx="1134.6" cy="668" rx="13.6" ry="7.7" fill="#ababab" stroke="#161616" stroke-width="0.8"/>
<path d="M1111.5 655 L1111.5 668 A20.5 6 0 0 0 1152.5 668 L1152.5 655 Z" fill="url(#g33)" stroke="#161616" stroke-width="0.8"/>
<ellipse cx="1132" cy="655" rx="20.5" ry="6" fill="#ababab" stroke="#161616" stroke-width="0.8"/>
<path d="M1092 630 L1092 640 Q1100 664 1134 668 Q1165 668 1176 660 L1176 630 Z" fill="url(#g34)" stroke="#161616" stroke-width="0.8"/>
<polygon points="1475.1,502.8 1477.1,508.6 1477.1,537.6 1475.1,531.8" fill="#3e3e3e" stroke="none" stroke-width="0.8" stroke-linejoin="round"/>
<polygon points="1476.9,508.1 1478.4,514 1478.4,543 1476.9,537.1" fill="#3e3e3e" stroke="none" stroke-width="0.8" stroke-linejoin="round"/>
<polygon points="1478.3,513.5 1479.4,519.4 1479.4,548.4 1478.3,542.5" fill="#3e3e3e" stroke="none" stroke-width="0.8" stroke-linejoin="round"/>
<polygon points="1479.3,518.9 1479.9,524.8 1479.9,553.8 1479.3,547.9" fill="#3e3e3e" stroke="none" stroke-width="0.8" stroke-linejoin="round"/>
<polygon points="1479.9,524.3 1480,530.2 1480,559.2 1479.9,553.3" fill="#3e3e3e" stroke="none" stroke-width="0.8" stroke-linejoin="round"/>
<polygon points="1480,529.7 1479.6,535.6 1479.6,564.6 1480,558.7" fill="#3e3e3e" stroke="none" stroke-width="0.8" stroke-linejoin="round"/>
<polygon points="1479.7,535.1 1478.9,541 1478.9,570 1479.7,564.1" fill="#3e3e3e" stroke="none" stroke-width="0.8" stroke-linejoin="round"/>
<polygon points="1478.9,540.5 1477.7,546.3 1477.7,575.3 1478.9,569.5" fill="#3e3e3e" stroke="none" stroke-width="0.8" stroke-linejoin="round"/>
<polygon points="1477.8,545.8 1476,551.7 1476,580.7 1477.8,574.8" fill="#3e3e3e" stroke="none" stroke-width="0.8" stroke-linejoin="round"/>
<polygon points="1476.2,551.2 1474,557 1474,586 1476.2,580.2" fill="#3e3e3e" stroke="none" stroke-width="0.8" stroke-linejoin="round"/>
<polygon points="1474.2,556.5 1471.5,562.2 1471.5,591.2 1474.2,585.5" fill="#3e3e3e" stroke="none" stroke-width="0.8" stroke-linejoin="round"/>
<polygon points="1471.7,561.7 1468.6,567.4 1468.6,596.4 1471.7,590.7" fill="#3e3e3e" stroke="none" stroke-width="0.8" stroke-linejoin="round"/>
<polygon points="1468.9,566.9 1465.3,572.5 1465.3,601.5 1468.9,595.9" fill="#3e3e3e" stroke="none" stroke-width="0.8" stroke-linejoin="round"/>
<polygon points="1465.6,572 1461.6,577.5 1461.6,606.5 1465.6,601" fill="#404040" stroke="none" stroke-width="0.8" stroke-linejoin="round"/>
<polygon points="1462,577 1457.6,582.4 1457.6,611.4 1462,606" fill="#424242" stroke="none" stroke-width="0.8" stroke-linejoin="round"/>
<polygon points="1457.9,581.9 1453.1,587.2 1453.1,616.2 1457.9,610.9" fill="#444444" stroke="none" stroke-width="0.8" stroke-linejoin="round"/>
<polygon points="1453.5,586.8 1448.2,591.9 1448.2,620.9 1453.5,615.8" fill="#464646" stroke="none" stroke-width="0.8" stroke-linejoin="round"/>
<polygon points="1448.7,591.5 1443,596.5 1443,625.5 1448.7,620.5" fill="#494949" stroke="none" stroke-width="0.8" stroke-linejoin="round"/>
<polygon points="1443.5,596.1 1437.4,600.9 1437.4,629.9 1443.5,625.1" fill="#4b4b4b" stroke="none" stroke-width="0.8" stroke-linejoin="round"/>
<polygon points="1438,600.5 1431.5,605.2 1431.5,634.2 1438,629.5" fill="#4e4e4e" stroke="none" stroke-width="0.8" stroke-linejoin="round"/>
<polygon points="1432.1,604.9 1425.2,609.4 1425.2,638.4 1432.1,633.9" fill="#505050" stroke="none" stroke-width="0.8" stroke-linejoin="round"/>
<polygon points="1425.8,609 1418.7,613.4 1418.7,642.4 1425.8,638" fill="#535353" stroke="none" stroke-width="0.8" stroke-linejoin="round"/>
<polygon points="1419.3,613.1 1411.8,617.3 1411.8,646.3 1419.3,642.1" fill="#555555" stroke="none" stroke-width="0.8" stroke-linejoin="round"/>
<polygon points="1412.4,616.9 1404.6,620.9 1404.6,649.9 1412.4,645.9" fill="#585858" stroke="none" stroke-width="0.8" stroke-linejoin="round"/>
<polygon points="1405.2,620.6 1397.1,624.4 1397.1,653.4 1405.2,649.6" fill="#5b5b5b" stroke="none" stroke-width="0.8" stroke-linejoin="round"/>
<polygon points="1397.8,624.1 1389.3,627.7 1389.3,656.7 1397.8,653.1" fill="#5e5e5e" stroke="none" stroke-width="0.8" stroke-linejoin="round"/>
<polygon points="1390,627.4 1381.3,630.9 1381.3,659.9 1390,656.4" fill="#606060" stroke="none" stroke-width="0.8" stroke-linejoin="round"/>
<polygon points="1382.1,630.6 1373.1,633.8 1373.1,662.8 1382.1,659.6" fill="#636363" stroke="none" stroke-width="0.8" stroke-linejoin="round"/>
<polygon points="1373.8,633.5 1364.6,636.5 1364.6,665.5 1373.8,662.5" fill="#666666" stroke="none" stroke-width="0.8" stroke-linejoin="round"/>
<polygon points="1365.4,636.3 1355.9,639 1355.9,668 1365.4,665.3" fill="#696969" stroke="none" stroke-width="0.8" stroke-linejoin="round"/>
<polygon points="1356.7,638.8 1347,641.3 1347,670.3 1356.7,667.8" fill="#6c6c6c" stroke="none" stroke-width="0.8" stroke-linejoin="round"/>
<polygon points="1347.9,641.1 1338,643.4 1338,672.4 1347.9,670.1" fill="#6f6f6f" stroke="none" stroke-width="0.8" stroke-linejoin="round"/>
<polygon points="1338.8,643.2 1328.8,645.3 1328.8,674.3 1338.8,672.2" fill="#727272" stroke="none" stroke-width="0.8" stroke-linejoin="round"/>
<polygon points="1329.6,645.1 1319.4,646.9 1319.4,675.9 1329.6,674.1" fill="#757575" stroke="none" stroke-width="0.8" stroke-linejoin="round"/>
<polygon points="1320.3,646.8 1310,648.4 1310,677.4 1320.3,675.8" fill="#777777" stroke="none" stroke-width="0.8" stroke-linejoin="round"/>
<polygon points="1310.8,648.2 1300.4,649.5 1300.4,678.5 1310.8,677.2" fill="#7a7a7a" stroke="none" stroke-width="0.8" stroke-linejoin="round"/>
<polygon points="1301.3,649.5 1290.7,650.5 1290.7,679.5 1301.3,678.5" fill="#7d7d7d" stroke="none" stroke-width="0.8" stroke-linejoin="round"/>
<polygon points="1291.6,650.4 1281,651.2 1281,680.2 1291.6,679.4" fill="#808080" stroke="none" stroke-width="0.8" stroke-linejoin="round"/>
<polygon points="1281.9,651.2 1271.3,651.7 1271.3,680.7 1281.9,680.2" fill="#838383" stroke="none" stroke-width="0.8" stroke-linejoin="round"/>
<polygon points="1272.1,651.7 1261.5,652 1261.5,681 1272.1,680.7" fill="#868686" stroke="none" stroke-width="0.8" stroke-linejoin="round"/>
<polygon points="1262.4,652 1251.6,652 1251.6,681 1262.4,681" fill="#888888" stroke="none" stroke-width="0.8" stroke-linejoin="round"/>
<polygon points="1252.5,652 1241.8,651.8 1241.8,680.8 1252.5,681" fill="#8b8b8b" stroke="none" stroke-width="0.8" stroke-linejoin="round"/>
<polygon points="1242.7,651.8 1232.1,651.3 1232.1,680.3 1242.7,680.8" fill="#8e8e8e" stroke="none" stroke-width="0.8" stroke-linejoin="round"/>
<polygon points="1233,651.3 1222.3,650.6 1222.3,679.6 1233,680.3" fill="#909090" stroke="none" stroke-width="0.8" stroke-linejoin="round"/>
<polygon points="1223.2,650.7 1212.7,649.7 1212.7,678.7 1223.2,679.7" fill="#939393" stroke="none" stroke-width="0.8" stroke-linejoin="round"/>
<polygon points="1213.6,649.8 1203.1,648.5 1203.1,677.5 1213.6,678.8" fill="#959595" stroke="none" stroke-width="0.8" stroke-linejoin="round"/>
<polygon points="1204,648.6 1193.6,647.1 1193.6,676.1 1204,677.6" fill="#979797" stroke="none" stroke-width="0.8" stroke-linejoin="round"/>
<polygon points="1194.5,647.3 1184.3,645.5 1184.3,674.5 1194.5,676.3" fill="#9a9a9a" stroke="none" stroke-width="0.8" stroke-linejoin="round"/>
<polygon points="1185.1,645.7 1175,643.7 1175,672.7 1185.1,674.7" fill="#9c9c9c" stroke="none" stroke-width="0.8" stroke-linejoin="round"/>
<polygon points="1175.9,643.8 1166,641.6 1166,670.6 1175.9,672.8" fill="#9e9e9e" stroke="none" stroke-width="0.8" stroke-linejoin="round"/>
<polygon points="1166.8,641.8 1157.1,639.3 1157.1,668.3 1166.8,670.8" fill="#a0a0a0" stroke="none" stroke-width="0.8" stroke-linejoin="round"/>
<polygon points="1157.9,639.5 1148.4,636.8 1148.4,665.8 1157.9,668.5" fill="#a2a2a2" stroke="none" stroke-width="0.8" stroke-linejoin="round"/>
<polygon points="1149.2,637 1139.9,634.1 1139.9,663.1 1149.2,666" fill="#a4a4a4" stroke="none" stroke-width="0.8" stroke-linejoin="round"/>
<polygon points="1140.6,634.4 1131.6,631.2 1131.6,660.2 1140.6,663.4" fill="#a6a6a6" stroke="none" stroke-width="0.8" stroke-linejoin="round"/>
<polygon points="1132.3,631.5 1123.6,628.1 1123.6,657.1 1132.3,660.5" fill="#a7a7a7" stroke="none" stroke-width="0.8" stroke-linejoin="round"/>
<polygon points="1124.3,628.4 1115.8,624.8 1115.8,653.8 1124.3,657.4" fill="#a8a8a8" stroke="none" stroke-width="0.8" stroke-linejoin="round"/>
<polygon points="1116.5,625.1 1108.3,621.3 1108.3,650.3 1116.5,654.1" fill="#a8a8a8" stroke="none" stroke-width="0.8" stroke-linejoin="round"/>
<polygon points="1108.9,621.7 1101,617.7 1101,646.7 1108.9,650.7" fill="#a8a8a8" stroke="none" stroke-width="0.8" stroke-linejoin="round"/>
<polygon points="1101.7,618 1094.1,613.9 1094.1,642.9 1101.7,647" fill="#a8a8a8" stroke="none" stroke-width="0.8" stroke-linejoin="round"/>
<polygon points="1094.7,614.2 1087.5,609.9 1087.5,638.9 1094.7,643.2" fill="#a8a8a8" stroke="none" stroke-width="0.8" stroke-linejoin="round"/>
<polygon points="1088.1,610.2 1081.2,605.7 1081.2,634.7 1088.1,639.2" fill="#a8a8a8" stroke="none" stroke-width="0.8" stroke-linejoin="round"/>
<polygon points="1081.7,606.1 1075.2,601.4 1075.2,630.4 1081.7,635.1" fill="#a8a8a8" stroke="none" stroke-width="0.8" stroke-linejoin="round"/>
<polygon points="1075.7,601.8 1069.6,597 1069.6,626 1075.7,630.8" fill="#a8a8a8" stroke="none" stroke-width="0.8" stroke-linejoin="round"/>
<polygon points="1070.1,597.4 1064.3,592.4 1064.3,621.4 1070.1,626.4" fill="#a8a8a8" stroke="none" stroke-width="0.8" stroke-linejoin="round"/>
<polyline points="1475.1,531.8 1477,537.5 1478.5,543.2 1479.5,548.9 1479.9,554.7 1479.9,560.5 1479.4,566.2 1478.5,572 1477,577.7 1475,583.4 1472.6,589 1469.7,594.5 1466.3,600 1462.5,605.4 1458.2,610.6 1453.5,615.8 1448.4,620.8 1442.8,625.7 1436.8,630.4 1430.4,635 1423.7,639.4 1416.6,643.6 1409.1,647.7 1401.3,651.5 1393.2,655.1 1384.7,658.6 1376,661.8 1367.1,664.7 1357.9,667.5 1348.5,670 1338.8,672.2 1329,674.3 1319,676 1308.9,677.5 1298.7,678.7 1288.4,679.7 1278,680.4 1267.6,680.8 1257.1,681 1246.7,680.9 1236.2,680.5 1225.8,679.9 1215.5,679 1205.2,677.8 1195.1,676.3 1185.1,674.7 1175.3,672.7 1165.6,670.5 1156.1,668 1146.9,665.4 1137.9,662.4 1129.1,659.3 1120.6,655.9 1112.4,652.3 1104.6,648.5 1097,644.5 1089.8,640.3 1083,635.9 1076.5,631.4 1070.5,626.7 1064.8,621.8" fill="none" stroke="#161616" stroke-width="0.8"/>
<polyline points="1064.8,600.8 1064.8,621.8" fill="none" stroke="#161616" stroke-width="0.8"/>
<polyline points="1217.1,658.1 1210.9,657.5 1204.7,656.7 1198.6,655.9 1192.5,654.9 1186.4,653.9 1180.4,652.8 1174.5,651.5 1168.6,650.2 1162.8,648.8 1157.1,647.3 1151.5,645.7 1145.9,644.1 1140.4,642.3 1135.1,640.4 1129.8,638.5 1124.6,636.5 1119.5,634.4 1114.5,632.3 1109.7,630 1105,627.7 1100.3,625.3 1095.8,622.8 1091.5,620.3 1087.3,617.7 1083.2,615.1 1079.2,612.3 1075.4,609.5 1071.7,606.7 1068.2,603.8 1064.8,600.8" fill="none" stroke="#161616" stroke-width="0.6"/>
<polygon points="1064.8,600.8 1070.8,597.3 1070.8,618.3 1064.8,621.8" fill="#b5b5b5" stroke="#161616" stroke-width="0.5" stroke-linejoin="round"/>
<ellipse cx="1068.5" cy="614" rx="1.6" ry="2.4" fill="#8a8a8a" stroke="#161616" stroke-width="0.5"/>
<ellipse cx="1100.5" cy="634.5" rx="1.5" ry="2.3" fill="#8a8a8a" stroke="#161616" stroke-width="0.5"/>
<polyline points="1100.5,625 1100.5,645" fill="none" stroke="#161616" stroke-width="0.5"/>
<polyline points="1146,651 1146,657" fill="none" stroke="#161616" stroke-width="1"/>
<ellipse cx="1256" cy="671" rx="7.3" ry="5.3" fill="#5c5c5c" stroke="#161616" stroke-width="0.8"/>
<polyline points="1251,673 1261,669" fill="none" stroke="#161616" stroke-width="0.8"/>
<ellipse cx="1294" cy="670" rx="7.3" ry="5.4" fill="#e9e9e9" stroke="#161616" stroke-width="0.8"/>
<polygon points="1467.3,501.5 1468,505.7 1468.4,509.8 1468.5,514 1468.4,518.2 1468,522.3 1467.3,526.5 1466.4,530.6 1465.3,534.7 1463.9,538.8 1462.2,542.9 1460.3,546.9 1458.1,550.9 1455.7,554.8 1453.1,558.7 1450.2,562.5 1447.1,566.3 1443.7,570 1440.2,573.6 1436.4,577.2 1432.3,580.7 1428.1,584.1 1423.7,587.4 1419,590.7 1414.2,593.8 1409.1,596.9 1403.9,599.8 1398.5,602.6 1392.9,605.4 1387.2,608 1381.3,610.5 1375.3,612.9 1369.1,615.2 1362.8,617.3 1356.3,619.3 1349.7,621.2 1343,623 1336.2,624.6 1329.3,626.1 1322.4,627.4 1315.3,628.7 1308.2,629.7 1301,630.7 1293.7,631.5 1286.4,632.1 1279.1,632.6 1271.8,633 1264.4,633.2 1257,633.3 1249.6,633.2 1242.2,633 1234.9,632.6 1227.6,632.1 1220.3,631.5 1213,630.7 1205.8,629.7 1198.7,628.7 1191.6,627.4 1184.7,626.1 1177.8,624.6 1171,623 1164.3,621.2 1157.7,619.3 1151.2,617.3 1144.9,615.2 1138.7,612.9 1132.7,610.5 1126.8,608 1121.1,605.4 1115.5,602.6 1110.1,599.8 1104.9,596.9 1099.8,593.8 1095,590.7 1090.3,587.4 1085.9,584.1 1081.7,580.7 1077.6,577.2 1073.8,573.6 1070.3,570 1066.9,566.3 1063.8,562.5 1060.9,558.7 1058.3,554.8 1055.9,550.9 1053.7,546.9 1051.8,542.9 1050.1,538.8 1048.7,534.7 1047.6,530.6 1046.7,526.5 1046,522.3 1045.6,518.2 1045.5,514 1045.6,509.8 1046,505.7 1046.7,501.5 1038.2,523 1037.5,527.3 1037.1,531.7 1037,536 1037.1,540.3 1037.5,544.7 1038.2,549 1039.1,553.3 1040.3,557.5 1041.8,561.8 1043.5,566 1045.5,570.2 1047.8,574.3 1050.3,578.4 1053,582.5 1056,586.5 1059.3,590.4 1062.8,594.3 1066.5,598 1070.4,601.8 1074.6,605.4 1079,608.9 1083.6,612.4 1088.5,615.8 1093.5,619 1098.7,622.2 1104.2,625.3 1109.8,628.2 1115.6,631.1 1121.6,633.8 1127.7,636.4 1134,638.9 1140.4,641.2 1147,643.5 1153.7,645.6 1160.6,647.5 1167.5,649.4 1174.6,651 1181.8,652.6 1189,654 1196.4,655.3 1203.8,656.4 1211.3,657.4 1218.8,658.2 1226.4,658.9 1234,659.4 1241.7,659.8 1249.3,660 1257,660.1 1264.7,660 1272.3,659.8 1280,659.4 1287.6,658.9 1295.2,658.2 1302.7,657.4 1310.2,656.4 1317.6,655.3 1325,654 1332.2,652.6 1339.4,651 1346.5,649.4 1353.4,647.5 1360.3,645.6 1367,643.5 1373.6,641.2 1380,638.9 1386.3,636.4 1392.4,633.8 1398.4,631.1 1404.2,628.2 1409.8,625.3 1415.3,622.2 1420.5,619 1425.5,615.8 1430.4,612.4 1435,608.9 1439.4,605.4 1443.6,601.8 1447.5,598 1451.2,594.3 1454.7,590.4 1458,586.5 1461,582.5 1463.7,578.4 1466.2,574.3 1468.5,570.2 1470.5,566 1472.2,561.8 1473.7,557.5 1474.9,553.3 1475.8,549 1476.5,544.7 1476.9,540.3 1477,536 1476.9,531.7 1476.5,527.3 1475.8,523" fill="#2e2e2e" stroke="none" stroke-width="0.8" stroke-linejoin="round"/>
<polygon points="1467,499.7 1475.6,500 1475.6,522 1467,521.7" fill="#363636" stroke="none" stroke-width="0.8" stroke-linejoin="round"/>
<polygon points="1476,502.1 1467.7,503.4 1467.7,525.4 1476,524.1" fill="#3c3c3c" stroke="none" stroke-width="0.8" stroke-linejoin="round"/>
<polygon points="1475.6,500 1476,502.1 1476,524.1 1475.6,522" fill="#4a4a4a" stroke="#222" stroke-width="0.35" stroke-linejoin="round"/>
<polygon points="1038.4,500 1047,499.7 1047,521.7 1038.4,522" fill="#3b3b3b" stroke="none" stroke-width="0.8" stroke-linejoin="round"/>
<polygon points="1046.3,503.4 1038,502.1 1038,524.1 1046.3,525.4" fill="#6c6c6c" stroke="none" stroke-width="0.8" stroke-linejoin="round"/>
<polygon points="1038,502.1 1038.4,500 1038.4,522 1038,524.1" fill="#9c9c9c" stroke="#222" stroke-width="0.35" stroke-linejoin="round"/>
<polygon points="1468,505.9 1476.6,506.5 1476.6,528.5 1468,527.9" fill="#343434" stroke="none" stroke-width="0.8" stroke-linejoin="round"/>
<polygon points="1476.8,508.5 1468.4,509.6 1468.4,531.6 1476.8,530.5" fill="#3d3d3d" stroke="none" stroke-width="0.8" stroke-linejoin="round"/>
<polygon points="1476.6,506.5 1476.8,508.5 1476.8,530.5 1476.6,528.5" fill="#4a4a4a" stroke="#222" stroke-width="0.35" stroke-linejoin="round"/>
<polygon points="1037.4,506.5 1046,505.9 1046,527.9 1037.4,528.5" fill="#3d3d3d" stroke="none" stroke-width="0.8" stroke-linejoin="round"/>
<polygon points="1045.6,509.6 1037.2,508.5 1037.2,530.5 1045.6,531.6" fill="#6b6b6b" stroke="none" stroke-width="0.8" stroke-linejoin="round"/>
<polygon points="1037.2,508.5 1037.4,506.5 1037.4,528.5 1037.2,530.5" fill="#9c9c9c" stroke="#222" stroke-width="0.35" stroke-linejoin="round"/>
<polygon points="1468.5,512.1 1477,513 1477,535 1468.5,534.1" fill="#333333" stroke="none" stroke-width="0.8" stroke-linejoin="round"/>
<polygon points="1477,515 1468.5,515.9 1468.5,537.9 1477,537" fill="#3f3f3f" stroke="none" stroke-width="0.8" stroke-linejoin="round"/>
<polygon points="1477,513 1477,515 1477,537 1477,535" fill="#4a4a4a" stroke="#222" stroke-width="0.35" stroke-linejoin="round"/>
<polygon points="1037,513 1045.5,512.1 1045.5,534.1 1037,535" fill="#3e3e3e" stroke="none" stroke-width="0.8" stroke-linejoin="round"/>
<polygon points="1045.5,515.9 1037,515 1037,537 1045.5,537.9" fill="#696969" stroke="none" stroke-width="0.8" stroke-linejoin="round"/>
<polygon points="1037,515 1037,513 1037,535 1037,537" fill="#9c9c9c" stroke="#222" stroke-width="0.35" stroke-linejoin="round"/>
<polygon points="1468.4,518.4 1476.8,519.5 1476.8,541.5 1468.4,540.4" fill="#313131" stroke="none" stroke-width="0.8" stroke-linejoin="round"/>
<polygon points="1476.6,521.5 1468,522.1 1468,544.1 1476.6,543.5" fill="#404040" stroke="none" stroke-width="0.8" stroke-linejoin="round"/>
<polygon points="1476.8,519.5 1476.6,521.5 1476.6,543.5 1476.8,541.5" fill="#4a4a4a" stroke="#222" stroke-width="0.35" stroke-linejoin="round"/>
<polygon points="1037.2,519.5 1045.6,518.4 1045.6,540.4 1037.2,541.5" fill="#404040" stroke="none" stroke-width="0.8" stroke-linejoin="round"/>
<polygon points="1046,522.1 1037.4,521.5 1037.4,543.5 1046,544.1" fill="#686868" stroke="none" stroke-width="0.8" stroke-linejoin="round"/>
<polygon points="1037.4,521.5 1037.2,519.5 1037.2,541.5 1037.4,543.5" fill="#9c9c9c" stroke="#222" stroke-width="0.35" stroke-linejoin="round"/>
<polygon points="1467.7,524.6 1476,525.9 1476,547.9 1467.7,546.6" fill="#303030" stroke="none" stroke-width="0.8" stroke-linejoin="round"/>
<polygon points="1475.6,528 1467,528.3 1467,550.3 1475.6,550" fill="#424242" stroke="none" stroke-width="0.8" stroke-linejoin="round"/>
<polygon points="1476,525.9 1475.6,528 1475.6,550 1476,547.9" fill="#4a4a4a" stroke="#222" stroke-width="0.35" stroke-linejoin="round"/>
<polygon points="1038,525.9 1046.3,524.6 1046.3,546.6 1038,547.9" fill="#414141" stroke="none" stroke-width="0.8" stroke-linejoin="round"/>
<polygon points="1047,528.3 1038.4,528 1038.4,550 1047,550.3" fill="#666666" stroke="none" stroke-width="0.8" stroke-linejoin="round"/>
<polygon points="1038.4,528 1038,525.9 1038,547.9 1038.4,550" fill="#9c9c9c" stroke="#222" stroke-width="0.35" stroke-linejoin="round"/>
<polygon points="1466.4,530.8 1474.6,532.4 1474.6,554.4 1466.4,552.8" fill="#303030" stroke="none" stroke-width="0.8" stroke-linejoin="round"/>
<polygon points="1474,534.4 1465.4,534.5 1465.4,556.5 1474,556.4" fill="#444444" stroke="none" stroke-width="0.8" stroke-linejoin="round"/>
<polygon points="1474.6,532.4 1474,534.4 1474,556.4 1474.6,554.4" fill="#4a4a4a" stroke="#222" stroke-width="0.35" stroke-linejoin="round"/>
<polygon points="1039.4,532.4 1047.6,530.8 1047.6,552.8 1039.4,554.4" fill="#434343" stroke="none" stroke-width="0.8" stroke-linejoin="round"/>
<polygon points="1048.6,534.5 1040,534.4 1040,556.4 1048.6,556.5" fill="#656565" stroke="none" stroke-width="0.8" stroke-linejoin="round"/>
<polygon points="1040,534.4 1039.4,532.4 1039.4,554.4 1040,556.4" fill="#9c9c9c" stroke="#222" stroke-width="0.35" stroke-linejoin="round"/>
<polygon points="1464.5,537 1472.6,538.8 1472.6,560.8 1464.5,559" fill="#303030" stroke="none" stroke-width="0.8" stroke-linejoin="round"/>
<polygon points="1471.8,540.8 1463.2,540.6 1463.2,562.6 1471.8,562.8" fill="#454545" stroke="none" stroke-width="0.8" stroke-linejoin="round"/>
<polygon points="1472.6,538.8 1471.8,540.8 1471.8,562.8 1472.6,560.8" fill="#4a4a4a" stroke="#222" stroke-width="0.35" stroke-linejoin="round"/>
<polygon points="1041.4,538.8 1049.5,537 1049.5,559 1041.4,560.8" fill="#444444" stroke="none" stroke-width="0.8" stroke-linejoin="round"/>
<polygon points="1050.8,540.6 1042.2,540.8 1042.2,562.8 1050.8,562.6" fill="#636363" stroke="none" stroke-width="0.8" stroke-linejoin="round"/>
<polygon points="1042.2,540.8 1041.4,538.8 1041.4,560.8 1042.2,562.8" fill="#9c9c9c" stroke="#222" stroke-width="0.35" stroke-linejoin="round"/>
<polygon points="1462.1,543.1 1470,545.1 1470,567.1 1462.1,565.1" fill="#303030" stroke="none" stroke-width="0.8" stroke-linejoin="round"/>
<polygon points="1469,547.1 1460.4,546.7 1460.4,568.7 1469,569.1" fill="#474747" stroke="none" stroke-width="0.8" stroke-linejoin="round"/>
<polygon points="1470,545.1 1469,547.1 1469,569.1 1470,567.1" fill="#4a4a4a" stroke="#222" stroke-width="0.35" stroke-linejoin="round"/>
<polygon points="1044,545.1 1051.9,543.1 1051.9,565.1 1044,567.1" fill="#464646" stroke="none" stroke-width="0.8" stroke-linejoin="round"/>
<polygon points="1053.6,546.7 1045,547.1 1045,569.1 1053.6,568.7" fill="#616161" stroke="none" stroke-width="0.8" stroke-linejoin="round"/>
<polygon points="1045,547.1 1044,545.1 1044,567.1 1045,569.1" fill="#9c9c9c" stroke="#222" stroke-width="0.35" stroke-linejoin="round"/>
<polygon points="1459.2,549.1 1466.8,551.4 1466.8,573.4 1459.2,571.1" fill="#303030" stroke="none" stroke-width="0.8" stroke-linejoin="round"/>
<polygon points="1465.7,553.3 1457.1,552.6 1457.1,574.6 1465.7,575.3" fill="#484848" stroke="none" stroke-width="0.8" stroke-linejoin="round"/>
<polygon points="1466.8,551.4 1465.7,553.3 1465.7,575.3 1466.8,573.4" fill="#4a4a4a" stroke="#222" stroke-width="0.35" stroke-linejoin="round"/>
<polygon points="1047.2,551.4 1054.8,549.1 1054.8,571.1 1047.2,573.4" fill="#474747" stroke="none" stroke-width="0.8" stroke-linejoin="round"/>
<polygon points="1056.9,552.6 1048.3,553.3 1048.3,575.3 1056.9,574.6" fill="#5f5f5f" stroke="none" stroke-width="0.8" stroke-linejoin="round"/>
<polygon points="1048.3,553.3 1047.2,551.4 1047.2,573.4 1048.3,575.3" fill="#9c9c9c" stroke="#222" stroke-width="0.35" stroke-linejoin="round"/>
<polygon points="1455.6,555 1463,557.5 1463,579.5 1455.6,577" fill="#303030" stroke="none" stroke-width="0.8" stroke-linejoin="round"/>
<polygon points="1461.7,559.4 1453.2,558.5 1453.2,580.5 1461.7,581.4" fill="#4a4a4a" stroke="none" stroke-width="0.8" stroke-linejoin="round"/>
<polygon points="1463,557.5 1461.7,559.4 1461.7,581.4 1463,579.5" fill="#4b4b4b" stroke="#222" stroke-width="0.35" stroke-linejoin="round"/>
<polygon points="1051,557.5 1058.4,555 1058.4,577 1051,579.5" fill="#494949" stroke="none" stroke-width="0.8" stroke-linejoin="round"/>
<polygon points="1060.8,558.5 1052.3,559.4 1052.3,581.4 1060.8,580.5" fill="#5d5d5d" stroke="none" stroke-width="0.8" stroke-linejoin="round"/>
<polygon points="1052.3,559.4 1051,557.5 1051,579.5 1052.3,581.4" fill="#9c9c9c" stroke="#222" stroke-width="0.35" stroke-linejoin="round"/>
<polygon points="1451.5,560.8 1458.7,563.5 1458.7,585.5 1451.5,582.8" fill="#303030" stroke="none" stroke-width="0.8" stroke-linejoin="round"/>
<polygon points="1457.2,565.4 1448.8,564.2 1448.8,586.2 1457.2,587.4" fill="#4b4b4b" stroke="none" stroke-width="0.8" stroke-linejoin="round"/>
<polygon points="1458.7,563.5 1457.2,565.4 1457.2,587.4 1458.7,585.5" fill="#4d4d4d" stroke="#222" stroke-width="0.35" stroke-linejoin="round"/>
<polygon points="1055.3,563.5 1062.5,560.8 1062.5,582.8 1055.3,585.5" fill="#4a4a4a" stroke="none" stroke-width="0.8" stroke-linejoin="round"/>
<polygon points="1065.2,564.2 1056.8,565.4 1056.8,587.4 1065.2,586.2" fill="#5b5b5b" stroke="none" stroke-width="0.8" stroke-linejoin="round"/>
<polygon points="1056.8,565.4 1055.3,563.5 1055.3,585.5 1056.8,587.4" fill="#9c9c9c" stroke="#222" stroke-width="0.35" stroke-linejoin="round"/>
<polygon points="1446.9,566.5 1453.9,569.4 1453.9,591.4 1446.9,588.5" fill="#303030" stroke="none" stroke-width="0.8" stroke-linejoin="round"/>
<polygon points="1452.2,571.3 1443.9,569.8 1443.9,591.8 1452.2,593.3" fill="#4c4c4c" stroke="none" stroke-width="0.8" stroke-linejoin="round"/>
<polygon points="1453.9,569.4 1452.2,571.3 1452.2,593.3 1453.9,591.4" fill="#4f4f4f" stroke="#222" stroke-width="0.35" stroke-linejoin="round"/>
<polygon points="1060.1,569.4 1067.1,566.5 1067.1,588.5 1060.1,591.4" fill="#4c4c4c" stroke="none" stroke-width="0.8" stroke-linejoin="round"/>
<polygon points="1070.1,569.8 1061.8,571.3 1061.8,593.3 1070.1,591.8" fill="#595959" stroke="none" stroke-width="0.8" stroke-linejoin="round"/>
<polygon points="1061.8,571.3 1060.1,569.4 1060.1,591.4 1061.8,593.3" fill="#9c9c9c" stroke="#222" stroke-width="0.35" stroke-linejoin="round"/>
<polygon points="1441.8,572 1448.4,575.1 1448.4,597.1 1441.8,594" fill="#303030" stroke="none" stroke-width="0.8" stroke-linejoin="round"/>
<polygon points="1446.6,576.9 1438.5,575.3 1438.5,597.3 1446.6,598.9" fill="#4e4e4e" stroke="none" stroke-width="0.8" stroke-linejoin="round"/>
<polygon points="1448.4,575.1 1446.6,576.9 1446.6,598.9 1448.4,597.1" fill="#515151" stroke="#222" stroke-width="0.35" stroke-linejoin="round"/>
<polygon points="1065.6,575.1 1072.2,572 1072.2,594 1065.6,597.1" fill="#4d4d4d" stroke="none" stroke-width="0.8" stroke-linejoin="round"/>
<polygon points="1075.5,575.3 1067.4,576.9 1067.4,598.9 1075.5,597.3" fill="#575757" stroke="none" stroke-width="0.8" stroke-linejoin="round"/>
<polygon points="1067.4,576.9 1065.6,575.1 1065.6,597.1 1067.4,598.9" fill="#9c9c9c" stroke="#222" stroke-width="0.35" stroke-linejoin="round"/>
<polygon points="1436.2,577.4 1442.5,580.7 1442.5,602.7 1436.2,599.4" fill="#303030" stroke="none" stroke-width="0.8" stroke-linejoin="round"/>
<polygon points="1440.5,582.4 1432.5,580.5 1432.5,602.5 1440.5,604.4" fill="#4f4f4f" stroke="none" stroke-width="0.8" stroke-linejoin="round"/>
<polygon points="1442.5,580.7 1440.5,582.4 1440.5,604.4 1442.5,602.7" fill="#535353" stroke="#222" stroke-width="0.35" stroke-linejoin="round"/>
<polygon points="1071.5,580.7 1077.8,577.4 1077.8,599.4 1071.5,602.7" fill="#4f4f4f" stroke="none" stroke-width="0.8" stroke-linejoin="round"/>
<polygon points="1081.5,580.5 1073.5,582.4 1073.5,604.4 1081.5,602.5" fill="#555555" stroke="none" stroke-width="0.8" stroke-linejoin="round"/>
<polygon points="1073.5,582.4 1071.5,580.7 1071.5,602.7 1073.5,604.4" fill="#9c9c9c" stroke="#222" stroke-width="0.35" stroke-linejoin="round"/>
<polygon points="1430,582.6 1436.1,586.1 1436.1,608.1 1430,604.6" fill="#303030" stroke="none" stroke-width="0.8" stroke-linejoin="round"/>
<polygon points="1433.9,587.8 1426.1,585.6 1426.1,607.6 1433.9,609.8" fill="#505050" stroke="none" stroke-width="0.8" stroke-linejoin="round"/>
<polygon points="1436.1,586.1 1433.9,587.8 1433.9,609.8 1436.1,608.1" fill="#555555" stroke="#222" stroke-width="0.35" stroke-linejoin="round"/>
<polygon points="1077.9,586.1 1084,582.6 1084,604.6 1077.9,608.1" fill="#505050" stroke="none" stroke-width="0.8" stroke-linejoin="round"/>
<polygon points="1087.9,585.6 1080.1,587.8 1080.1,609.8 1087.9,607.6" fill="#535353" stroke="none" stroke-width="0.8" stroke-linejoin="round"/>
<polygon points="1080.1,587.8 1077.9,586.1 1077.9,608.1 1080.1,609.8" fill="#9c9c9c" stroke="#222" stroke-width="0.35" stroke-linejoin="round"/>
<polygon points="1423.4,587.6 1429.1,591.3 1429.1,613.3 1423.4,609.6" fill="#303030" stroke="none" stroke-width="0.8" stroke-linejoin="round"/>
<polygon points="1426.8,592.9 1419.3,590.5 1419.3,612.5 1426.8,614.9" fill="#525252" stroke="none" stroke-width="0.8" stroke-linejoin="round"/>
<polygon points="1429.1,591.3 1426.8,592.9 1426.8,614.9 1429.1,613.3" fill="#585858" stroke="#222" stroke-width="0.35" stroke-linejoin="round"/>
<polygon points="1084.9,591.3 1090.6,587.6 1090.6,609.6 1084.9,613.3" fill="#515151" stroke="none" stroke-width="0.8" stroke-linejoin="round"/>
<polygon points="1094.7,590.5 1087.2,592.9 1087.2,614.9 1094.7,612.5" fill="#515151" stroke="none" stroke-width="0.8" stroke-linejoin="round"/>
<polygon points="1087.2,592.9 1084.9,591.3 1084.9,613.3 1087.2,614.9" fill="#9c9c9c" stroke="#222" stroke-width="0.35" stroke-linejoin="round"/>
<polygon points="1416.4,592.4 1421.7,596.3 1421.7,618.3 1416.4,614.4" fill="#303030" stroke="none" stroke-width="0.8" stroke-linejoin="round"/>
<polygon points="1419.3,597.8 1411.9,595.2 1411.9,617.2 1419.3,619.8" fill="#535353" stroke="none" stroke-width="0.8" stroke-linejoin="round"/>
<polygon points="1421.7,596.3 1419.3,597.8 1419.3,619.8 1421.7,618.3" fill="#5a5a5a" stroke="#222" stroke-width="0.35" stroke-linejoin="round"/>
<polygon points="1092.3,596.3 1097.6,592.4 1097.6,614.4 1092.3,618.3" fill="#525252" stroke="none" stroke-width="0.8" stroke-linejoin="round"/>
<polygon points="1102.1,595.2 1094.7,597.8 1094.7,619.8 1102.1,617.2" fill="#4f4f4f" stroke="none" stroke-width="0.8" stroke-linejoin="round"/>
<polygon points="1094.7,597.8 1092.3,596.3 1092.3,618.3 1094.7,619.8" fill="#9c9c9c" stroke="#222" stroke-width="0.35" stroke-linejoin="round"/>
<polygon points="1408.9,597 1413.9,601 1413.9,623 1408.9,619" fill="#303030" stroke="none" stroke-width="0.8" stroke-linejoin="round"/>
<polygon points="1411.3,602.5 1404.2,599.7 1404.2,621.7 1411.3,624.5" fill="#545454" stroke="none" stroke-width="0.8" stroke-linejoin="round"/>
<polygon points="1413.9,601 1411.3,602.5 1411.3,624.5 1413.9,623" fill="#5c5c5c" stroke="#222" stroke-width="0.35" stroke-linejoin="round"/>
<polygon points="1100.1,601 1105.1,597 1105.1,619 1100.1,623" fill="#535353" stroke="none" stroke-width="0.8" stroke-linejoin="round"/>
<polygon points="1109.8,599.7 1102.7,602.5 1102.7,624.5 1109.8,621.7" fill="#4d4d4d" stroke="none" stroke-width="0.8" stroke-linejoin="round"/>
<polygon points="1102.7,602.5 1100.1,601 1100.1,623 1102.7,624.5" fill="#9c9c9c" stroke="#222" stroke-width="0.35" stroke-linejoin="round"/>
<polygon points="1401,601.4 1405.6,605.5 1405.6,627.5 1401,623.4" fill="#303030" stroke="none" stroke-width="0.8" stroke-linejoin="round"/>
<polygon points="1402.8,606.9 1396,603.9 1396,625.9 1402.8,628.9" fill="#555555" stroke="none" stroke-width="0.8" stroke-linejoin="round"/>
<polygon points="1405.6,605.5 1402.8,606.9 1402.8,628.9 1405.6,627.5" fill="#5f5f5f" stroke="#222" stroke-width="0.35" stroke-linejoin="round"/>
<polygon points="1108.4,605.5 1113,601.4 1113,623.4 1108.4,627.5" fill="#555555" stroke="none" stroke-width="0.8" stroke-linejoin="round"/>
<polygon points="1118,603.9 1111.2,606.9 1111.2,628.9 1118,625.9" fill="#4b4b4b" stroke="none" stroke-width="0.8" stroke-linejoin="round"/>
<polygon points="1111.2,606.9 1108.4,605.5 1108.4,627.5 1111.2,628.9" fill="#9c9c9c" stroke="#222" stroke-width="0.35" stroke-linejoin="round"/>
<polygon points="1392.7,605.5 1396.9,609.8 1396.9,631.8 1392.7,627.5" fill="#303030" stroke="none" stroke-width="0.8" stroke-linejoin="round"/>
<polygon points="1394,611.1 1387.5,607.9 1387.5,629.9 1394,633.1" fill="#565656" stroke="none" stroke-width="0.8" stroke-linejoin="round"/>
<polygon points="1396.9,609.8 1394,611.1 1394,633.1 1396.9,631.8" fill="#616161" stroke="#222" stroke-width="0.35" stroke-linejoin="round"/>
<polygon points="1117.1,609.8 1121.3,605.5 1121.3,627.5 1117.1,631.8" fill="#565656" stroke="none" stroke-width="0.8" stroke-linejoin="round"/>
<polygon points="1126.5,607.9 1120,611.1 1120,633.1 1126.5,629.9" fill="#494949" stroke="none" stroke-width="0.8" stroke-linejoin="round"/>
<polygon points="1120,611.1 1117.1,609.8 1117.1,631.8 1120,633.1" fill="#9c9c9c" stroke="#222" stroke-width="0.35" stroke-linejoin="round"/>
<polygon points="1384,609.4 1387.8,613.8 1387.8,635.8 1384,631.4" fill="#303030" stroke="none" stroke-width="0.8" stroke-linejoin="round"/>
<polygon points="1384.8,615 1378.6,611.6 1378.6,633.6 1384.8,637" fill="#575757" stroke="none" stroke-width="0.8" stroke-linejoin="round"/>
<polygon points="1387.8,613.8 1384.8,615 1384.8,637 1387.8,635.8" fill="#646464" stroke="#222" stroke-width="0.35" stroke-linejoin="round"/>
<polygon points="1126.2,613.8 1130,609.4 1130,631.4 1126.2,635.8" fill="#575757" stroke="none" stroke-width="0.8" stroke-linejoin="round"/>
<polygon points="1135.4,611.6 1129.2,615 1129.2,637 1135.4,633.6" fill="#474747" stroke="none" stroke-width="0.8" stroke-linejoin="round"/>
<polygon points="1129.2,615 1126.2,613.8 1126.2,635.8 1129.2,637" fill="#9c9c9c" stroke="#222" stroke-width="0.35" stroke-linejoin="round"/>
<polygon points="1375,613 1378.4,617.5 1378.4,639.5 1375,635" fill="#303030" stroke="none" stroke-width="0.8" stroke-linejoin="round"/>
<polygon points="1375.3,618.6 1369.4,615 1369.4,637 1375.3,640.6" fill="#585858" stroke="none" stroke-width="0.8" stroke-linejoin="round"/>
<polygon points="1378.4,617.5 1375.3,618.6 1375.3,640.6 1378.4,639.5" fill="#676767" stroke="#222" stroke-width="0.35" stroke-linejoin="round"/>
<polygon points="1135.6,617.5 1139,613 1139,635 1135.6,639.5" fill="#575757" stroke="none" stroke-width="0.8" stroke-linejoin="round"/>
<polygon points="1144.6,615 1138.7,618.6 1138.7,640.6 1144.6,637" fill="#444444" stroke="none" stroke-width="0.8" stroke-linejoin="round"/>
<polygon points="1138.7,618.6 1135.6,617.5 1135.6,639.5 1138.7,640.6" fill="#9a9a9a" stroke="#222" stroke-width="0.35" stroke-linejoin="round"/>
<polygon points="1365.6,616.4 1368.6,620.9 1368.6,642.9 1365.6,638.4" fill="#303030" stroke="none" stroke-width="0.8" stroke-linejoin="round"/>
<polygon points="1365.4,622 1359.9,618.2 1359.9,640.2 1365.4,644" fill="#585858" stroke="none" stroke-width="0.8" stroke-linejoin="round"/>
<polygon points="1368.6,620.9 1365.4,622 1365.4,644 1368.6,642.9" fill="#696969" stroke="#222" stroke-width="0.35" stroke-linejoin="round"/>
<polygon points="1145.4,620.9 1148.4,616.4 1148.4,638.4 1145.4,642.9" fill="#585858" stroke="none" stroke-width="0.8" stroke-linejoin="round"/>
<polygon points="1154.1,618.2 1148.6,622 1148.6,644 1154.1,640.2" fill="#424242" stroke="none" stroke-width="0.8" stroke-linejoin="round"/>
<polygon points="1148.6,622 1145.4,620.9 1145.4,642.9 1148.6,644" fill="#999999" stroke="#222" stroke-width="0.35" stroke-linejoin="round"/>
<polygon points="1356,619.4 1358.5,624.1 1358.5,646.1 1356,641.4" fill="#303030" stroke="none" stroke-width="0.8" stroke-linejoin="round"/>
<polygon points="1355.2,625 1350,621.1 1350,643.1 1355.2,647" fill="#585858" stroke="none" stroke-width="0.8" stroke-linejoin="round"/>
<polygon points="1358.5,624.1 1355.2,625 1355.2,647 1358.5,646.1" fill="#6c6c6c" stroke="#222" stroke-width="0.35" stroke-linejoin="round"/>
<polygon points="1155.5,624.1 1158,619.4 1158,641.4 1155.5,646.1" fill="#585858" stroke="none" stroke-width="0.8" stroke-linejoin="round"/>
<polygon points="1164,621.1 1158.8,625 1158.8,647 1164,643.1" fill="#404040" stroke="none" stroke-width="0.8" stroke-linejoin="round"/>
<polygon points="1158.8,625 1155.5,624.1 1155.5,646.1 1158.8,647" fill="#979797" stroke="#222" stroke-width="0.35" stroke-linejoin="round"/>
<polygon points="1346,622.2 1348.2,626.9 1348.2,648.9 1346,644.2" fill="#303030" stroke="none" stroke-width="0.8" stroke-linejoin="round"/>
<polygon points="1344.8,627.8 1340,623.7 1340,645.7 1344.8,649.8" fill="#585858" stroke="none" stroke-width="0.8" stroke-linejoin="round"/>
<polygon points="1348.2,626.9 1344.8,627.8 1344.8,649.8 1348.2,648.9" fill="#6f6f6f" stroke="#222" stroke-width="0.35" stroke-linejoin="round"/>
<polygon points="1165.8,626.9 1168,622.2 1168,644.2 1165.8,648.9" fill="#585858" stroke="none" stroke-width="0.8" stroke-linejoin="round"/>
<polygon points="1174,623.7 1169.2,627.8 1169.2,649.8 1174,645.7" fill="#3f3f3f" stroke="none" stroke-width="0.8" stroke-linejoin="round"/>
<polygon points="1169.2,627.8 1165.8,626.9 1165.8,648.9 1169.2,649.8" fill="#959595" stroke="#222" stroke-width="0.35" stroke-linejoin="round"/>
<polygon points="1335.9,624.7 1337.6,629.5 1337.6,651.5 1335.9,646.7" fill="#303030" stroke="none" stroke-width="0.8" stroke-linejoin="round"/>
<polygon points="1334.1,630.2 1329.7,626 1329.7,648 1334.1,652.2" fill="#585858" stroke="none" stroke-width="0.8" stroke-linejoin="round"/>
<polygon points="1337.6,629.5 1334.1,630.2 1334.1,652.2 1337.6,651.5" fill="#717171" stroke="#222" stroke-width="0.35" stroke-linejoin="round"/>
<polygon points="1176.4,629.5 1178.1,624.7 1178.1,646.7 1176.4,651.5" fill="#585858" stroke="none" stroke-width="0.8" stroke-linejoin="round"/>
<polygon points="1184.3,626 1179.9,630.2 1179.9,652.2 1184.3,648" fill="#3d3d3d" stroke="none" stroke-width="0.8" stroke-linejoin="round"/>
<polygon points="1179.9,630.2 1176.4,629.5 1176.4,651.5 1179.9,652.2" fill="#939393" stroke="#222" stroke-width="0.35" stroke-linejoin="round"/>
<polygon points="1325.5,626.9 1326.7,631.7 1326.7,653.7 1325.5,648.9" fill="#303030" stroke="none" stroke-width="0.8" stroke-linejoin="round"/>
<polygon points="1323.2,632.3 1319.2,628 1319.2,650 1323.2,654.3" fill="#585858" stroke="none" stroke-width="0.8" stroke-linejoin="round"/>
<polygon points="1326.7,631.7 1323.2,632.3 1323.2,654.3 1326.7,653.7" fill="#747474" stroke="#222" stroke-width="0.35" stroke-linejoin="round"/>
<polygon points="1187.3,631.7 1188.5,626.9 1188.5,648.9 1187.3,653.7" fill="#585858" stroke="none" stroke-width="0.8" stroke-linejoin="round"/>
<polygon points="1194.8,628 1190.8,632.3 1190.8,654.3 1194.8,650" fill="#3b3b3b" stroke="none" stroke-width="0.8" stroke-linejoin="round"/>
<polygon points="1190.8,632.3 1187.3,631.7 1187.3,653.7 1190.8,654.3" fill="#919191" stroke="#222" stroke-width="0.35" stroke-linejoin="round"/>
<polygon points="1314.9,628.7 1315.7,633.6 1315.7,655.6 1314.9,650.7" fill="#303030" stroke="none" stroke-width="0.8" stroke-linejoin="round"/>
<polygon points="1312.2,634.1 1308.5,629.7 1308.5,651.7 1312.2,656.1" fill="#585858" stroke="none" stroke-width="0.8" stroke-linejoin="round"/>
<polygon points="1315.7,633.6 1312.2,634.1 1312.2,656.1 1315.7,655.6" fill="#777777" stroke="#222" stroke-width="0.35" stroke-linejoin="round"/>
<polygon points="1198.3,633.6 1199.1,628.7 1199.1,650.7 1198.3,655.6" fill="#585858" stroke="none" stroke-width="0.8" stroke-linejoin="round"/>
<polygon points="1205.5,629.7 1201.8,634.1 1201.8,656.1 1205.5,651.7" fill="#393939" stroke="none" stroke-width="0.8" stroke-linejoin="round"/>
<polygon points="1201.8,634.1 1198.3,633.6 1198.3,655.6 1201.8,656.1" fill="#8f8f8f" stroke="#222" stroke-width="0.35" stroke-linejoin="round"/>
<polygon points="1304.2,630.3 1304.5,635.1 1304.5,657.1 1304.2,652.3" fill="#303030" stroke="none" stroke-width="0.8" stroke-linejoin="round"/>
<polygon points="1300.9,635.6 1297.7,631.1 1297.7,653.1 1300.9,657.6" fill="#585858" stroke="none" stroke-width="0.8" stroke-linejoin="round"/>
<polygon points="1304.5,635.1 1300.9,635.6 1300.9,657.6 1304.5,657.1" fill="#797979" stroke="#222" stroke-width="0.35" stroke-linejoin="round"/>
<polygon points="1209.5,635.1 1209.8,630.3 1209.8,652.3 1209.5,657.1" fill="#585858" stroke="none" stroke-width="0.8" stroke-linejoin="round"/>
<polygon points="1216.3,631.1 1213.1,635.6 1213.1,657.6 1216.3,653.1" fill="#373737" stroke="none" stroke-width="0.8" stroke-linejoin="round"/>
<polygon points="1213.1,635.6 1209.5,635.1 1209.5,657.1 1213.1,657.6" fill="#8d8d8d" stroke="#222" stroke-width="0.35" stroke-linejoin="round"/>
<polygon points="1293.4,631.5 1293.2,636.4 1293.2,658.4 1293.4,653.5" fill="#303030" stroke="none" stroke-width="0.8" stroke-linejoin="round"/>
<polygon points="1289.6,636.7 1286.8,632.1 1286.8,654.1 1289.6,658.7" fill="#585858" stroke="none" stroke-width="0.8" stroke-linejoin="round"/>
<polygon points="1293.2,636.4 1289.6,636.7 1289.6,658.7 1293.2,658.4" fill="#7c7c7c" stroke="#222" stroke-width="0.35" stroke-linejoin="round"/>
<polygon points="1220.8,636.4 1220.6,631.5 1220.6,653.5 1220.8,658.4" fill="#585858" stroke="none" stroke-width="0.8" stroke-linejoin="round"/>
<polygon points="1227.2,632.1 1224.4,636.7 1224.4,658.7 1227.2,654.1" fill="#363636" stroke="none" stroke-width="0.8" stroke-linejoin="round"/>
<polygon points="1224.4,636.7 1220.8,636.4 1220.8,658.4 1224.4,658.7" fill="#8b8b8b" stroke="#222" stroke-width="0.35" stroke-linejoin="round"/>
<polygon points="1282.4,632.4 1281.8,637.3 1281.8,659.3 1282.4,654.4" fill="#303030" stroke="none" stroke-width="0.8" stroke-linejoin="round"/>
<polygon points="1278.2,637.5 1275.8,632.8 1275.8,654.8 1278.2,659.5" fill="#585858" stroke="none" stroke-width="0.8" stroke-linejoin="round"/>
<polygon points="1281.8,637.3 1278.2,637.5 1278.2,659.5 1281.8,659.3" fill="#7f7f7f" stroke="#222" stroke-width="0.35" stroke-linejoin="round"/>
<polygon points="1232.2,637.3 1231.6,632.4 1231.6,654.4 1232.2,659.3" fill="#585858" stroke="none" stroke-width="0.8" stroke-linejoin="round"/>
<polygon points="1238.2,632.8 1235.8,637.5 1235.8,659.5 1238.2,654.8" fill="#343434" stroke="none" stroke-width="0.8" stroke-linejoin="round"/>
<polygon points="1235.8,637.5 1232.2,637.3 1232.2,659.3 1235.8,659.5" fill="#888888" stroke="#222" stroke-width="0.35" stroke-linejoin="round"/>
<polygon points="1271.4,633 1270.4,637.9 1270.4,659.9 1271.4,655" fill="#303030" stroke="none" stroke-width="0.8" stroke-linejoin="round"/>
<polygon points="1266.7,638 1264.8,633.2 1264.8,655.2 1266.7,660" fill="#585858" stroke="none" stroke-width="0.8" stroke-linejoin="round"/>
<polygon points="1270.4,637.9 1266.7,638 1266.7,660 1270.4,659.9" fill="#818181" stroke="#222" stroke-width="0.35" stroke-linejoin="round"/>
<polygon points="1243.6,637.9 1242.6,633 1242.6,655 1243.6,659.9" fill="#585858" stroke="none" stroke-width="0.8" stroke-linejoin="round"/>
<polygon points="1249.2,633.2 1247.3,638 1247.3,660 1249.2,655.2" fill="#323232" stroke="none" stroke-width="0.8" stroke-linejoin="round"/>
<polygon points="1247.3,638 1243.6,637.9 1243.6,659.9 1247.3,660" fill="#868686" stroke="#222" stroke-width="0.35" stroke-linejoin="round"/>
<polygon points="1260.3,633.3 1258.8,638.1 1258.8,660.1 1260.3,655.3" fill="#313131" stroke="none" stroke-width="0.8" stroke-linejoin="round"/>
<polygon points="1255.2,638.1 1253.7,633.3 1253.7,655.3 1255.2,660.1" fill="#585858" stroke="none" stroke-width="0.8" stroke-linejoin="round"/>
<polygon points="1258.8,638.1 1255.2,638.1 1255.2,660.1 1258.8,660.1" fill="#848484" stroke="#222" stroke-width="0.35" stroke-linejoin="round"/>
<polygon points="1293.2,391.6 1293.4,396.5 1293.4,409.7 1293.2,404.8" fill="#3a3a3a" stroke="none" stroke-width="0.8" stroke-linejoin="round"/>
<polygon points="1304.5,392.9 1304.2,397.7 1304.2,410.9 1304.5,406.1" fill="#3a3a3a" stroke="none" stroke-width="0.8" stroke-linejoin="round"/>
<polygon points="1315.7,394.4 1314.9,399.3 1314.9,412.5 1315.7,407.6" fill="#3a3a3a" stroke="none" stroke-width="0.8" stroke-linejoin="round"/>
<polygon points="1326.7,396.3 1325.5,401.1 1325.5,414.3 1326.7,409.5" fill="#3a3a3a" stroke="none" stroke-width="0.8" stroke-linejoin="round"/>
<polygon points="1337.6,398.5 1335.9,403.3 1335.9,416.5 1337.6,411.7" fill="#3a3a3a" stroke="none" stroke-width="0.8" stroke-linejoin="round"/>
<polygon points="1348.2,401.1 1346,405.8 1346,419 1348.2,414.3" fill="#3a3a3a" stroke="none" stroke-width="0.8" stroke-linejoin="round"/>
<polygon points="1358.5,403.9 1356,408.6 1356,421.8 1358.5,417.1" fill="#3a3a3a" stroke="none" stroke-width="0.8" stroke-linejoin="round"/>
<polygon points="1368.6,407.1 1365.6,411.6 1365.6,424.8 1368.6,420.3" fill="#3a3a3a" stroke="none" stroke-width="0.8" stroke-linejoin="round"/>
<polygon points="1378.4,410.5 1375,415 1375,428.2 1378.4,423.7" fill="#3a3a3a" stroke="none" stroke-width="0.8" stroke-linejoin="round"/>
<polygon points="1387.8,414.2 1384,418.6 1384,431.8 1387.8,427.4" fill="#3a3a3a" stroke="none" stroke-width="0.8" stroke-linejoin="round"/>
<polygon points="1396.9,418.2 1392.7,422.5 1392.7,435.7 1396.9,431.4" fill="#3a3a3a" stroke="none" stroke-width="0.8" stroke-linejoin="round"/>
<polygon points="1405.6,422.5 1401,426.6 1401,439.8 1405.6,435.7" fill="#3a3a3a" stroke="none" stroke-width="0.8" stroke-linejoin="round"/>
<polygon points="1413.9,427 1408.9,431 1408.9,444.2 1413.9,440.2" fill="#3a3a3a" stroke="none" stroke-width="0.8" stroke-linejoin="round"/>
<polygon points="1421.7,431.7 1416.4,435.6 1416.4,448.8 1421.7,444.9" fill="#3a3a3a" stroke="none" stroke-width="0.8" stroke-linejoin="round"/>
<polygon points="1429.1,436.7 1423.4,440.4 1423.4,453.6 1429.1,449.9" fill="#3a3a3a" stroke="none" stroke-width="0.8" stroke-linejoin="round"/>
<polygon points="1436.1,441.9 1430,445.4 1430,458.6 1436.1,455.1" fill="#3a3a3a" stroke="none" stroke-width="0.8" stroke-linejoin="round"/>
<polygon points="1442.5,447.3 1436.2,450.6 1436.2,463.8 1442.5,460.5" fill="#3a3a3a" stroke="none" stroke-width="0.8" stroke-linejoin="round"/>
<polygon points="1448.4,452.9 1441.8,456 1441.8,469.2 1448.4,466.1" fill="#3a3a3a" stroke="none" stroke-width="0.8" stroke-linejoin="round"/>
<polygon points="1453.9,458.6 1446.9,461.5 1446.9,474.7 1453.9,471.8" fill="#3a3a3a" stroke="none" stroke-width="0.8" stroke-linejoin="round"/>
<polygon points="1458.7,464.5 1451.5,467.2 1451.5,480.4 1458.7,477.7" fill="#3a3a3a" stroke="none" stroke-width="0.8" stroke-linejoin="round"/>
<polygon points="1463,470.5 1455.6,473 1455.6,486.2 1463,483.7" fill="#3a3a3a" stroke="none" stroke-width="0.8" stroke-linejoin="round"/>
<polygon points="1466.8,476.6 1459.2,478.9 1459.2,492.1 1466.8,489.8" fill="#3a3a3a" stroke="none" stroke-width="0.8" stroke-linejoin="round"/>
<polygon points="1470,482.9 1462.1,484.9 1462.1,498.1 1470,496.1" fill="#3a3a3a" stroke="none" stroke-width="0.8" stroke-linejoin="round"/>
<polygon points="1472.6,489.2 1464.5,491 1464.5,504.2 1472.6,502.4" fill="#3a3a3a" stroke="none" stroke-width="0.8" stroke-linejoin="round"/>
<polygon points="1474.6,495.6 1466.4,497.2 1466.4,510.4 1474.6,508.8" fill="#3a3a3a" stroke="none" stroke-width="0.8" stroke-linejoin="round"/>
<polygon points="1476,502.1 1467.7,503.4 1467.7,516.6 1476,515.3" fill="#3a3a3a" stroke="none" stroke-width="0.8" stroke-linejoin="round"/>
<polygon points="1476.8,508.5 1468.4,509.6 1468.4,522.8 1476.8,521.7" fill="#3a3a3a" stroke="none" stroke-width="0.8" stroke-linejoin="round"/>
<polygon points="1468.5,512.1 1477,513 1477,515 1468.5,515.9 1468.4,518.4 1476.8,519.5 1476.6,521.5 1468,522.1 1467.7,524.6 1476,525.9 1475.6,528 1467,528.3 1466.4,530.8 1474.6,532.4 1474,534.4 1465.4,534.5 1464.5,537 1472.6,538.8 1471.8,540.8 1463.2,540.6 1462.1,543.1 1470,545.1 1469,547.1 1460.4,546.7 1459.2,549.1 1466.8,551.4 1465.7,553.3 1457.1,552.6 1455.6,555 1463,557.5 1461.7,559.4 1453.2,558.5 1451.5,560.8 1458.7,563.5 1457.2,565.4 1448.8,564.2 1446.9,566.5 1453.9,569.4 1452.2,571.3 1443.9,569.8 1441.8,572 1448.4,575.1 1446.6,576.9 1438.5,575.3 1436.2,577.4 1442.5,580.7 1440.5,582.4 1432.5,580.5 1430,582.6 1436.1,586.1 1433.9,587.8 1426.1,585.6 1423.4,587.6 1429.1,591.3 1426.8,592.9 1419.3,590.5 1416.4,592.4 1421.7,596.3 1419.3,597.8 1411.9,595.2 1408.9,597 1413.9,601 1411.3,602.5 1404.2,599.7 1401,601.4 1405.6,605.5 1402.8,606.9 1396,603.9 1392.7,605.5 1396.9,609.8 1394,611.1 1387.5,607.9 1384,609.4 1387.8,613.8 1384.8,615 1378.6,611.6 1375,613 1378.4,617.5 1375.3,618.6 1369.4,615 1365.6,616.4 1368.6,620.9 1365.4,622 1359.9,618.2 1356,619.4 1358.5,624.1 1355.2,625 1350,621.1 1346,622.2 1348.2,626.9 1344.8,627.8 1340,623.7 1335.9,624.7 1337.6,629.5 1334.1,630.2 1329.7,626 1325.5,626.9 1326.7,631.7 1323.2,632.3 1319.2,628 1314.9,628.7 1315.7,633.6 1312.2,634.1 1308.5,629.7 1304.2,630.3 1304.5,635.1 1300.9,635.6 1297.7,631.1 1293.4,631.5 1293.2,636.4 1289.6,636.7 1286.8,632.1 1282.4,632.4 1281.8,637.3 1278.2,637.5 1275.8,632.8 1271.4,633 1270.4,637.9 1266.7,638 1264.8,633.2 1260.3,633.3 1258.8,638.1 1255.2,638.1 1253.7,633.3 1249.2,633.2 1247.3,638 1243.6,637.9 1242.6,633 1238.2,632.8 1235.8,637.5 1232.2,637.3 1231.6,632.4 1227.2,632.1 1224.4,636.7 1220.8,636.4 1220.6,631.5 1216.3,631.1 1213.1,635.6 1209.5,635.1 1209.8,630.3 1205.5,629.7 1201.8,634.1 1198.3,633.6 1199.1,628.7 1194.8,628 1190.8,632.3 1187.3,631.7 1188.5,626.9 1184.3,626 1179.9,630.2 1176.4,629.5 1178.1,624.7 1174,623.7 1169.2,627.8 1165.8,626.9 1168,622.2 1164,621.1 1158.8,625 1155.5,624.1 1158,619.4 1154.1,618.2 1148.6,622 1145.4,620.9 1148.4,616.4 1144.6,615 1138.7,618.6 1135.6,617.5 1139,613 1135.4,611.6 1129.2,615 1126.2,613.8 1130,609.4 1126.5,607.9 1120,611.1 1117.1,609.8 1121.3,605.5 1118,603.9 1111.2,606.9 1108.4,605.5 1113,601.4 1109.8,599.7 1102.7,602.5 1100.1,601 1105.1,597 1102.1,595.2 1094.7,597.8 1092.3,596.3 1097.6,592.4 1094.7,590.5 1087.2,592.9 1084.9,591.3 1090.6,587.6 1087.9,585.6 1080.1,587.8 1077.9,586.1 1084,582.6 1081.5,580.5 1073.5,582.4 1071.5,580.7 1077.8,577.4 1075.5,575.3 1067.4,576.9 1065.6,575.1 1072.2,572 1070.1,569.8 1061.8,571.3 1060.1,569.4 1067.1,566.5 1065.2,564.2 1056.8,565.4 1055.3,563.5 1062.5,560.8 1060.8,558.5 1052.3,559.4 1051,557.5 1058.4,555 1056.9,552.6 1048.3,553.3 1047.2,551.4 1054.8,549.1 1053.6,546.7 1045,547.1 1044,545.1 1051.9,543.1 1050.8,540.6 1042.2,540.8 1041.4,538.8 1049.5,537 1048.6,534.5 1040,534.4 1039.4,532.4 1047.6,530.8 1047,528.3 1038.4,528 1038,525.9 1046.3,524.6 1046,522.1 1037.4,521.5 1037.2,519.5 1045.6,518.4 1045.5,515.9 1037,515 1037,513 1045.5,512.1 1045.6,509.6 1037.2,508.5 1037.4,506.5 1046,505.9 1046.3,503.4 1038,502.1 1038.4,500 1047,499.7 1047.6,497.2 1039.4,495.6 1040,493.6 1048.6,493.5 1049.5,491 1041.4,489.2 1042.2,487.2 1050.8,487.4 1051.9,484.9 1044,482.9 1045,480.9 1053.6,481.3 1054.8,478.9 1047.2,476.6 1048.3,474.7 1056.9,475.4 1058.4,473 1051,470.5 1052.3,468.6 1060.8,469.5 1062.5,467.2 1055.3,464.5 1056.8,462.6 1065.2,463.8 1067.1,461.5 1060.1,458.6 1061.8,456.7 1070.1,458.2 1072.2,456 1065.6,452.9 1067.4,451.1 1075.5,452.7 1077.8,450.6 1071.5,447.3 1073.5,445.6 1081.5,447.5 1084,445.4 1077.9,441.9 1080.1,440.2 1087.9,442.4 1090.6,440.4 1084.9,436.7 1087.2,435.1 1094.7,437.5 1097.6,435.6 1092.3,431.7 1094.7,430.2 1102.1,432.8 1105.1,431 1100.1,427 1102.7,425.5 1109.8,428.3 1113,426.6 1108.4,422.5 1111.2,421.1 1118,424.1 1121.3,422.5 1117.1,418.2 1120,416.9 1126.5,420.1 1130,418.6 1126.2,414.2 1129.2,413 1135.4,416.4 1139,415 1135.6,410.5 1138.7,409.4 1144.6,413 1142.1,408.2 1152,405 1152,405 1162.3,402 1162.3,402 1172.8,399.4 1172.8,399.4 1183.6,397 1183.6,397 1194.5,395 1194.5,395 1205.6,393.3 1205.6,393.3 1216.9,392 1216.9,392 1228.3,391 1228.3,391 1239.7,390.3 1242.6,395 1243.6,390.1 1247.3,390 1249.2,394.8 1253.7,394.7 1255.2,389.9 1258.8,389.9 1260.3,394.7 1264.8,394.8 1266.7,390 1270.4,390.1 1271.4,395 1275.8,395.2 1278.2,390.5 1281.8,390.7 1282.4,395.6 1286.8,395.9 1289.6,391.3 1293.2,391.6 1293.4,396.5 1297.7,396.9 1300.9,392.4 1304.5,392.9 1304.2,397.7 1308.5,398.3 1312.2,393.9 1315.7,394.4 1314.9,399.3 1319.2,400 1323.2,395.7 1326.7,396.3 1325.5,401.1 1329.7,402 1334.1,397.8 1337.6,398.5 1335.9,403.3 1340,404.3 1344.8,400.2 1348.2,401.1 1346,405.8 1350,406.9 1355.2,403 1358.5,403.9 1356,408.6 1359.9,409.8 1365.4,406 1368.6,407.1 1365.6,411.6 1369.4,413 1375.3,409.4 1378.4,410.5 1375,415 1378.6,416.4 1384.8,413 1387.8,414.2 1384,418.6 1387.5,420.1 1394,416.9 1396.9,418.2 1392.7,422.5 1396,424.1 1402.8,421.1 1405.6,422.5 1401,426.6 1404.2,428.3 1411.3,425.5 1413.9,427 1408.9,431 1411.9,432.8 1419.3,430.2 1421.7,431.7 1416.4,435.6 1419.3,437.5 1426.8,435.1 1429.1,436.7 1423.4,440.4 1426.1,442.4 1433.9,440.2 1436.1,441.9 1430,445.4 1432.5,447.5 1440.5,445.6 1442.5,447.3 1436.2,450.6 1438.5,452.7 1446.6,451.1 1448.4,452.9 1441.8,456 1443.9,458.2 1452.2,456.7 1453.9,458.6 1446.9,461.5 1448.8,463.8 1457.2,462.6 1458.7,464.5 1451.5,467.2 1453.2,469.5 1461.7,468.6 1463,470.5 1455.6,473 1457.1,475.4 1465.7,474.7 1466.8,476.6 1459.2,478.9 1460.4,481.3 1469,480.9 1470,482.9 1462.1,484.9 1463.2,487.4 1471.8,487.2 1472.6,489.2 1464.5,491 1465.4,493.5 1474,493.6 1474.6,495.6 1466.4,497.2 1467,499.7 1475.6,500 1476,502.1 1467.7,503.4 1468,505.9 1476.6,506.5 1476.8,508.5 1468.4,509.6" fill="#ababab" stroke="#161616" stroke-width="0.7" stroke-linejoin="round"/>
<g clip-path="url(#hc0)">
<rect x="1359" y="522.8" width="88" height="50.5" fill="url(#g35)"/>
<ellipse cx="1403" cy="567.1" rx="43" ry="24.3" fill="#ababab" stroke="#161616" stroke-width="0.7"/>
</g>
<ellipse cx="1403" cy="548.1" rx="43" ry="24.3" fill="none" stroke="#161616" stroke-width="0.8"/>
<g clip-path="url(#hc1)">
<rect x="1273.5" y="571.1" width="88" height="50.5" fill="url(#g36)"/>
<ellipse cx="1317.5" cy="615.3" rx="43" ry="24.3" fill="#ababab" stroke="#161616" stroke-width="0.7"/>
</g>
<ellipse cx="1317.5" cy="596.3" rx="43" ry="24.3" fill="none" stroke="#161616" stroke-width="0.8"/>
<g clip-path="url(#hc2)">
<rect x="1152.5" y="571.1" width="88" height="50.5" fill="url(#g37)"/>
<ellipse cx="1196.5" cy="615.3" rx="43" ry="24.3" fill="#ababab" stroke="#161616" stroke-width="0.7"/>
</g>
<ellipse cx="1196.5" cy="596.3" rx="43" ry="24.3" fill="none" stroke="#161616" stroke-width="0.8"/>
<g clip-path="url(#hc3)">
<rect x="1067" y="522.8" width="88" height="50.5" fill="url(#g38)"/>
<ellipse cx="1111" cy="567.1" rx="43" ry="24.3" fill="#ababab" stroke="#161616" stroke-width="0.7"/>
</g>
<ellipse cx="1111" cy="548.1" rx="43" ry="24.3" fill="none" stroke="#161616" stroke-width="0.8"/>
<g clip-path="url(#hc4)">
<rect x="1067" y="454.6" width="88" height="50.5" fill="url(#g39)"/>
<ellipse cx="1111" cy="498.9" rx="43" ry="24.3" fill="#ababab" stroke="#161616" stroke-width="0.7"/>
</g>
<ellipse cx="1111" cy="479.9" rx="43" ry="24.3" fill="none" stroke="#161616" stroke-width="0.8"/>
<g clip-path="url(#hc5)">
<rect x="1152.5" y="406.4" width="88" height="50.5" fill="url(#g40)"/>
<ellipse cx="1196.5" cy="450.7" rx="43" ry="24.3" fill="#ababab" stroke="#161616" stroke-width="0.7"/>
</g>
<ellipse cx="1196.5" cy="431.7" rx="43" ry="24.3" fill="none" stroke="#161616" stroke-width="0.8"/>
<g clip-path="url(#hc6)">
<rect x="1273.5" y="406.4" width="88" height="50.5" fill="url(#g41)"/>
<ellipse cx="1317.5" cy="450.7" rx="43" ry="24.3" fill="#ababab" stroke="#161616" stroke-width="0.7"/>
</g>
<ellipse cx="1317.5" cy="431.7" rx="43" ry="24.3" fill="none" stroke="#161616" stroke-width="0.8"/>
<g clip-path="url(#hc7)">
<rect x="1359" y="454.6" width="88" height="50.5" fill="url(#g42)"/>
<ellipse cx="1403" cy="498.9" rx="43" ry="24.3" fill="#ababab" stroke="#161616" stroke-width="0.7"/>
</g>
<ellipse cx="1403" cy="479.9" rx="43" ry="24.3" fill="none" stroke="#161616" stroke-width="0.8"/>
<g clip-path="url(#hc2)">
<g clip-path="url(#hf2)">
<polygon points="1212,601.7 1234.6,601.7 1234.6,608 1212,620" fill="#707070" stroke="#161616" stroke-width="0.5" stroke-linejoin="round"/>
</g></g>
<g clip-path="url(#hc1)">
<g clip-path="url(#hf1)">
<polygon points="1281,601.7 1294.3,601.7 1294.3,616.8 1281,608" fill="#8c8c8c" stroke="#161616" stroke-width="0.5" stroke-linejoin="round"/>
<polygon points="1294.3,601.7 1310.3,591.6 1342.1,594.1 1340.4,600 1320,622 1302.3,619.4 1294.3,616.8" fill="#4a4a4a" stroke="#161616" stroke-width="0.5" stroke-linejoin="round"/>
<polygon points="1341.3,600.8 1356.3,605.3 1323.5,622 1320,622" fill="#8a8a8a" stroke="#161616" stroke-width="0.5" stroke-linejoin="round"/>
<polyline points="1302.3,618.5 1341.3,596.4" fill="none" stroke="#161616" stroke-width="0.6"/>
</g></g>
<g clip-path="url(#hc0)">
<g clip-path="url(#hf0)">
<polygon points="1365,560 1374,556.6 1374,566 1386,571.5 1375,568" fill="#585858" stroke="#161616" stroke-width="0.5" stroke-linejoin="round"/>
<polygon points="1374,546.8 1382,546 1382,563.6 1374,562" fill="#9a9a9a" stroke="#161616" stroke-width="0.5" stroke-linejoin="round"/>
<polygon points="1413.9,544.2 1442.2,556.6 1433.3,564.5 1413.9,563.6" fill="#787878" stroke="#161616" stroke-width="0.5" stroke-linejoin="round"/>
<polygon points="1403.3,543.3 1413.9,544.2 1413.9,563.6 1405,558.3" fill="#b5b5b5" stroke="#161616" stroke-width="0.5" stroke-linejoin="round"/>
<path d="M1370.5 556.6 v6 a16.8 9.7 0 0 0 33.6 0 v-6 Z" fill="url(#g43)" stroke="#161616" stroke-width="0.5"/>
<ellipse cx="1387.3" cy="556.6" rx="16.8" ry="9.7" fill="#a9a9a9" stroke="#161616" stroke-width="0.5"/>
<ellipse cx="1388.5" cy="555.2" rx="11.5" ry="6.4" fill="#c8c8c8" stroke="#161616" stroke-width="0.5"/>
<polygon points="1382,545 1392.6,545 1392.6,556.6 1382,556.6" fill="#4a4a4a" stroke="#161616" stroke-width="0.5" stroke-linejoin="round"/>
<ellipse cx="1389.5" cy="553.5" rx="3" ry="2" fill="#9a9a9a" stroke="#161616" stroke-width="0.5"/>
</g></g>
<ellipse cx="1257" cy="514" rx="27.5" ry="15.5" fill="url(#g44)" stroke="#161616" stroke-width="0.8"/>
<ellipse cx="1257.5" cy="516.2" rx="25.5" ry="13.6" fill="#c8c8c8" stroke="#161616" stroke-width="0.6"/>
<ellipse cx="1257.5" cy="517.4" rx="24.2" ry="12.6" fill="#ababab" stroke="#161616" stroke-width="0.6"/>
<ellipse cx="1305.5" cy="514" rx="8.7" ry="4.9" fill="url(#g45)" stroke="#161616" stroke-width="0.8"/>
<ellipse cx="1291.3" cy="533.3" rx="8.7" ry="4.9" fill="url(#g46)" stroke="#161616" stroke-width="0.8"/>
<ellipse cx="1257" cy="541.4" rx="8.7" ry="4.9" fill="url(#g47)" stroke="#161616" stroke-width="0.8"/>
<ellipse cx="1222.7" cy="533.3" rx="8.7" ry="4.9" fill="url(#g48)" stroke="#161616" stroke-width="0.8"/>
<ellipse cx="1208.5" cy="514" rx="8.7" ry="4.9" fill="url(#g49)" stroke="#161616" stroke-width="0.8"/>
<ellipse cx="1222.7" cy="494.7" rx="8.7" ry="4.9" fill="url(#g50)" stroke="#161616" stroke-width="0.8"/>
<ellipse cx="1257" cy="486.6" rx="8.7" ry="4.9" fill="url(#g51)" stroke="#161616" stroke-width="0.8"/>
<ellipse cx="1291.3" cy="494.7" rx="8.7" ry="4.9" fill="url(#g52)" stroke="#161616" stroke-width="0.8"/>
<ellipse cx="1427" cy="514.5" rx="6.5" ry="4.2" fill="#c2c2c2" stroke="#161616" stroke-width="0.7"/>
<polygon points="1424.5,478 1434,484 1434,500 1424.5,494" fill="#1a2a55" stroke="none" stroke-width="0.8" stroke-linejoin="round"/>
<path d="M1233.5 381 L1233.5 401.5 A24 13.5 0 0 0 1281.5 401.5 L1281.5 381 Z" fill="url(#g53)" stroke="#161616" stroke-width="0.8"/>
<ellipse cx="1257.5" cy="381" rx="24" ry="13.5" fill="#b2b2b2" stroke="#161616" stroke-width="0.8"/>
<ellipse cx="1257.5" cy="381.4" rx="21.6" ry="11.8" fill="#b0b0b0" stroke="#4a4a4a" stroke-width="0.5"/>
<path d="M1235.1 384 A22.6 12.6 0 0 0 1279.9 384" fill="none" stroke="#f0f0f0" stroke-width="1.1"/>
<ellipse cx="1242" cy="381" rx="4.6" ry="2.7" fill="#7a7a7a" stroke="#161616" stroke-width="0.7"/>
<ellipse cx="1273" cy="381" rx="4.6" ry="2.7" fill="#7a7a7a" stroke="#161616" stroke-width="0.7"/>
<path d="M1037.5 494.5 L1037.5 515 A24 13.5 0 0 0 1085.5 515 L1085.5 494.5 Z" fill="url(#g54)" stroke="#161616" stroke-width="0.8"/>
<ellipse cx="1061.5" cy="494.5" rx="24" ry="13.5" fill="#b2b2b2" stroke="#161616" stroke-width="0.8"/>
<ellipse cx="1061.5" cy="494.9" rx="21.6" ry="11.8" fill="#b0b0b0" stroke="#4a4a4a" stroke-width="0.5"/>
<path d="M1039.1 497.5 A22.6 12.6 0 0 0 1083.9 497.5" fill="none" stroke="#f0f0f0" stroke-width="1.1"/>
<ellipse cx="1061.5" cy="499.5" rx="4.3" ry="2.5" fill="#7a7a7a" stroke="#161616" stroke-width="0.7"/>
<path d="M1056.3 488 L1056.3 495 A5.2 2.6 0 0 0 1066.7 495 L1066.7 488 Z" fill="url(#g55)" stroke="#161616" stroke-width="0.8"/>
<ellipse cx="1061.5" cy="488" rx="5.2" ry="2.6" fill="#c4c4c4" stroke="#161616" stroke-width="0.8"/>
<path d="M1057.9 484 L1057.9 488 A3.6 2 0 0 0 1065.1 488 L1065.1 484 Z" fill="url(#g56)" stroke="#161616" stroke-width="0.8"/>
<ellipse cx="1061.5" cy="484" rx="3.6" ry="2" fill="#d0d0d0" stroke="#161616" stroke-width="0.8"/>
<path d="M1429.5 494.5 L1429.5 515 A24 13.5 0 0 0 1477.5 515 L1477.5 494.5 Z" fill="url(#g57)" stroke="#161616" stroke-width="0.8"/>
<ellipse cx="1453.5" cy="494.5" rx="24" ry="13.5" fill="#b2b2b2" stroke="#161616" stroke-width="0.8"/>
<ellipse cx="1453.5" cy="494.9" rx="21.6" ry="11.8" fill="#b0b0b0" stroke="#4a4a4a" stroke-width="0.5"/>
<path d="M1431.1 497.5 A22.6 12.6 0 0 0 1475.9 497.5" fill="none" stroke="#f0f0f0" stroke-width="1.1"/>
<ellipse cx="1453.5" cy="499.5" rx="4.3" ry="2.5" fill="#7a7a7a" stroke="#161616" stroke-width="0.7"/>
<polygon points="1450.3,486 1456.7,486 1456.7,496 1450.3,496" fill="#9a9a9a" stroke="#161616" stroke-width="0.6" stroke-linejoin="round"/>
<ellipse cx="1453.5" cy="486" rx="3.2" ry="1.8" fill="#c4c4c4" stroke="#161616" stroke-width="0.6"/>
<polyline points="1453.5,488 1453.5,496" fill="none" stroke="#161616" stroke-width="0.6"/>
<path d="M1233.5 607 L1233.5 627.5 A24 13.5 0 0 0 1281.5 627.5 L1281.5 607 Z" fill="url(#g58)" stroke="#161616" stroke-width="0.8"/>
<ellipse cx="1257.5" cy="607" rx="24" ry="13.5" fill="#b2b2b2" stroke="#161616" stroke-width="0.8"/>
<ellipse cx="1257.5" cy="607.4" rx="21.6" ry="11.8" fill="#b0b0b0" stroke="#4a4a4a" stroke-width="0.5"/>
<path d="M1235.1 610 A22.6 12.6 0 0 0 1279.9 610" fill="none" stroke="#f0f0f0" stroke-width="1.1"/>
<ellipse cx="1242" cy="607" rx="4.6" ry="2.7" fill="#7a7a7a" stroke="#161616" stroke-width="0.7"/>
<ellipse cx="1273" cy="607" rx="4.6" ry="2.7" fill="#7a7a7a" stroke="#161616" stroke-width="0.7"/>
</svg>
<svg class="abs" style="left:0;top:0" width="1860" height="891" viewBox="60 109 1860 891" font-family="Liberation Sans,sans-serif">
<defs><linearGradient id="wm" x1="0" y1="0" x2="0" y2="1"><stop offset="0" stop-color="#f0701c"/><stop offset="1" stop-color="#f2a516"/></linearGradient><radialGradient id="sph" cx=".35" cy=".35" r=".7"><stop offset="0" stop-color="#bdbdbd"/><stop offset="1" stop-color="#3a3a3a"/></radialGradient><linearGradient id="zt" x1="0" y1="0" x2="1" y2="0"><stop offset="0" stop-color="#36c4d4"/><stop offset="1" stop-color="#0e6a78"/></linearGradient></defs>
<polygon points="656,395.5 703.8,367.5 752.7,395.5 703.8,423.3" fill="#ffffff" fill-opacity=".09" stroke="#e6e6e6" stroke-width="0.9" stroke-dasharray="4.5 3.5"/>
<path d="M703.8 395.5 V343" stroke="#1893a2" stroke-width="2"/><path d="M699.6 343.5 L703.8 333.8 L708 343.5 Q703.8 345.5 699.6 343.5Z" fill="url(#zt)"/>
<path d="M703.8 395.5 L733 379.2" stroke="#1f9a22" stroke-width="2"/><path d="M730.6 375.6 L740 375.2 L734 382.6Z" fill="#22a326"/>
<path d="M703.8 395.5 L723.5 405.8" stroke="#c01c26" stroke-width="2.2"/><path d="M724.8 402 L730 409.6 L720.8 408.8Z" fill="#d0202c"/>
<circle cx="703.8" cy="395.5" r="3.2" fill="url(#sph)"/>
<text x="698.8" y="333" font-size="11.5" fill="#d9d9d9">Z</text><text x="739.8" y="377.4" font-size="11.5" fill="#e01818">Y</text><text x="730" y="417" font-size="11.5" fill="#d9d9d9">X</text>
<polygon points="120.7,921.7 138.3,911 138.3,950 120.7,940" fill="#ffffff" fill-opacity=".16" stroke="#d8d8d8" stroke-width=".7"/>
<polygon points="120.7,921.7 138.3,931.7 120.7,941.7" fill="#ffffff" fill-opacity=".08" stroke="#d8d8d8" stroke-width=".6"/>
<polygon points="138.3,931.7 156,941.7 141.7,950 121.7,941.7" fill="#a8b05c" fill-opacity=".62" stroke="#f2ee18" stroke-width=".9"/>
<path d="M119.3 941.7 V889" stroke="#16bccc" stroke-width="1.5"/><path d="M115.6 890.5 L119.3 880.5 L123 890.5 Q119.3 892.4 115.6 890.5Z" fill="#22d4e4"/>
<path d="M119.3 941.7 L147 925.8" stroke="#17a41c" stroke-width="2"/><path d="M146 921.6 L156.4 920.8 L149.8 928.8Z" fill="#17a41c"/>
<path d="M119.3 941.7 L136 952" stroke="#e0141c" stroke-width="3"/><path d="M137.8 947.8 L145.4 957 L133.4 955.2Z" fill="#e0141c"/>
<circle cx="119.3" cy="941.7" r="3.4" fill="url(#sph)"/>
<text x="115" y="879.4" font-size="11" fill="#d9d9d9">Z</text><text x="155.6" y="923.4" font-size="11" fill="#e01818">Y</text><text x="144.6" y="964.2" font-size="11" fill="#d9d9d9">X</text>
<g opacity=".96"><path d="M891.0 517.5 L893.0 516.5 L893.0 536 L907.6 538.5 L910.6 540 L891.0 540 Z" fill="url(#wm)"/><path d="M894.2 512.2 L896.4 511.4 L896.4 534.6 L906.6 537.6 L906.0 536.4 L894.2 533 Z" fill="url(#wm)"/><path d="M898.0 508.2 L900.4 510.8 L900.4 532.4 L906.2 536 L905.4 534.8 L898.0 531 Z" fill="url(#wm)"/><path d="M936.2 517.5 L934.2 516.5 L934.2 536 L919.6 538.5 L916.6 540 L936.2 540 Z" fill="url(#wm)"/><path d="M933.0 512.2 L930.8 511.4 L930.8 534.6 L920.6 537.6 L921.2 536.4 L933.0 533 Z" fill="url(#wm)"/><path d="M929.2 508.2 L926.8 510.8 L926.8 532.4 L921.0 536 L921.8 534.8 L929.2 531 Z" fill="url(#wm)"/><path d="M914.8 509.8 Q903 511.5 903.4 522.5 Q903.8 527.5 907 528.6 Q904.8 519.5 912.6 517.4 L912.8 536.6 L914.8 536.6 Z" fill="url(#wm)"/><path d="M914.8 536.6 L914.8 527 Q921.4 526.6 920.8 518.6 Q925.4 524.6 922.4 530 Q919.8 534.6 914.8 536.6Z" fill="url(#wm)"/><rect x="908.6" y="537.4" width="10" height="1.7" rx=".8" fill="#f08a1c"/></g>
<text x="946.4" y="529.2" font-size="16.6" fill="#f28a26" fill-opacity=".93" font-family="Liberation Sans,Noto Sans CJK SC,sans-serif" textLength="83" lengthAdjust="spacingAndGlyphs">智造资料网</text>
<text x="946.6" y="538" font-size="4.7" font-weight="700" font-style="italic" fill="#f08a26" fill-opacity=".9" textLength="82.5" lengthAdjust="spacingAndGlyphs">INTELLIGENT MANUFACTURING DATA</text>
</svg>
<div class="vbtn" style="left:4px;top:4px"><svg width="24" height="24" viewBox="0 0 24 24" style="position:absolute;left:0px;top:0px"><rect x="3" y="4" width="18" height="3.600" fill="#46608a"/><rect x="3" y="10.200" width="18" height="3.600" fill="#46608a"/><rect x="3" y="16.400" width="18" height="3.600" fill="#46608a"/></svg></div>
<div class="vbtn" style="left:32px;top:4px"><svg width="24" height="24" viewBox="0 0 24 24" style="position:absolute;left:0px;top:0px"><g transform="translate(2 2)"><rect x="3.4" y="4" width="13" height="11" fill="url(#l14)" stroke="#222" stroke-width="1.2"/><path d="M1.8 2.4 l3.2 0 M1.8 2.4 l0 3.2 M1.8 2.4 l3 3" stroke="#35c22a" stroke-width="1.3" transform="rotate(180 3.4 4)"/><path d="M14.8 2.4 l3.2 0 M14.8 2.4 l0 3.2 M14.8 2.4 l3 3" stroke="#35c22a" stroke-width="1.3" transform="rotate(270 16.4 4)"/><path d="M1.8 13.4 l3.2 0 M1.8 13.4 l0 3.2 M1.8 13.4 l3 3" stroke="#35c22a" stroke-width="1.3" transform="rotate(90 3.4 15)"/><path d="M14.8 13.4 l3.2 0 M14.8 13.4 l0 3.2 M14.8 13.4 l3 3" stroke="#35c22a" stroke-width="1.3" transform="rotate(0 16.4 15)"/></g></svg></div>
<div class="vbtn" style="left:60px;top:4px"><svg width="24" height="24" viewBox="0 0 24 24" style="position:absolute;left:0px;top:0px"><g transform="translate(2 2)"><path d="M1 6.500 l6 -3.400 l1 1.800 l-6 3.400z M1.600 10 l6 -3.400 l1 1.800 l-6 3.400z M2.600 13.400 l5 -3 l1 1.800 l-5 3z" fill="#c9cedb" stroke="#8a90a0" stroke-width=".4"/><path d="M9 12.500 l-4.600 5" stroke="#9a9a9a" stroke-width="2.600" stroke-linecap="round"/><circle cx="12.400" cy="8.600" r="5.200" fill="url(#r7)" stroke="#7d8ea8" stroke-width="1.300"/></g></svg></div>
<div class="vbtn" style="left:88px;top:4px"><svg width="24" height="24" viewBox="0 0 24 24" style="position:absolute;left:0px;top:0px"><g transform="translate(2 2)"><g transform="translate(9 11.5) scale(1)"><path d="M-9 1 L0 -4 L9 1 L0 6z" fill="none" stroke="#7d8aa0" stroke-width=".6"/><path d="M0 1 V-8" stroke="#1677ee" stroke-width="1.6"/><path d="M-2.4 -6.6 L0 -10.4 L2.4 -6.6z" fill="#1677ee"/><path d="M0 1 L6.5 -3.4" stroke="#22aa22" stroke-width="1.6"/><path d="M4.4 -4.6 L8.8 -4.8 L6.4 -1.2z" fill="#22aa22"/><path d="M0 1 L6 5.4" stroke="#e02020" stroke-width="1.6"/><path d="M4 6.2 L8.4 7.2 L6.8 3.2z" fill="#e02020"/><circle cx="0" cy="1" r="1.7" fill="#eee" stroke="#555" stroke-width=".5"/></g></g></svg></div>
<div class="vbtn" style="left:116px;top:4px"><svg width="24" height="24" viewBox="0 0 24 24" style="position:absolute;left:0px;top:0px"><polygon points="12.5,3.1 21.9,6.6 12.5,10.6 3.1,6.9" fill="#55dc3c"/><path d="M12.5 3.1 L21.9 6.6 L21.9 15.9 L12.5 21.6 L3.1 15.9 L3.1 6.9z M3.1 6.9 L12.5 10.6 L21.9 6.6 M12.5 10.6 V21.6" stroke="#0a0a0a" stroke-width="1.8" fill="none" stroke-linejoin="round"/><path d="M12.5 3.1 V12.1 L3.1 15.9 M12.5 12.1 L21.9 15.9" stroke="#0a0a0a" stroke-width="1.5" fill="none"/></svg></div>
<div class="vbtn" style="left:144px;top:4px"><svg width="24" height="24" viewBox="0 0 24 24" style="position:absolute;left:0px;top:0px"><polygon points="12.5,12.1 21.9,15.9 12.5,21.6 3.1,15.9" fill="#27b81e"/><path d="M12.5 3.1 L21.9 6.6 L21.9 15.9 L12.5 21.6 L3.1 15.9 L3.1 6.9z M3.1 6.9 L12.5 10.6 L21.9 6.6 M12.5 10.6 V21.6" stroke="#0a0a0a" stroke-width="1.8" fill="none" stroke-linejoin="round"/><path d="M12.5 3.1 V12.1 L3.1 15.9 M12.5 12.1 L21.9 15.9" stroke="#0a0a0a" stroke-width="1.5" fill="none"/></svg></div>
<div class="vbtn" style="left:172px;top:4px"><svg width="24" height="24" viewBox="0 0 24 24" style="position:absolute;left:0px;top:0px"><polygon points="3.1,6.9 12.5,3.1 12.5,12.1 3.1,15.9" fill="#35cc2a"/><path d="M12.5 3.1 L21.9 6.6 L21.9 15.9 L12.5 21.6 L3.1 15.9 L3.1 6.9z M3.1 6.9 L12.5 10.6 L21.9 6.6 M12.5 10.6 V21.6" stroke="#0a0a0a" stroke-width="1.8" fill="none" stroke-linejoin="round"/><path d="M12.5 3.1 V12.1 L3.1 15.9 M12.5 12.1 L21.9 15.9" stroke="#0a0a0a" stroke-width="1.5" fill="none"/></svg></div>
<div class="vbtn" style="left:200px;top:4px"><svg width="24" height="24" viewBox="0 0 24 24" style="position:absolute;left:0px;top:0px"><polygon points="12.5,10.6 21.9,6.6 21.9,15.9 12.5,21.6" fill="#27b81e"/><path d="M12.5 3.1 L21.9 6.6 L21.9 15.9 L12.5 21.6 L3.1 15.9 L3.1 6.9z M3.1 6.9 L12.5 10.6 L21.9 6.6 M12.5 10.6 V21.6" stroke="#0a0a0a" stroke-width="1.8" fill="none" stroke-linejoin="round"/><path d="M12.5 3.1 V12.1 L3.1 15.9 M12.5 12.1 L21.9 15.9" stroke="#0a0a0a" stroke-width="1.5" fill="none"/></svg></div>
<div class="vbtn" style="left:228px;top:4px"><svg width="24" height="24" viewBox="0 0 24 24" style="position:absolute;left:0px;top:0px"><polygon points="3.1,6.9 12.5,10.6 12.5,21.6 3.1,15.9" fill="#35cc2a"/><path d="M12.5 3.1 L21.9 6.6 L21.9 15.9 L12.5 21.6 L3.1 15.9 L3.1 6.9z M3.1 6.9 L12.5 10.6 L21.9 6.6 M12.5 10.6 V21.6" stroke="#0a0a0a" stroke-width="1.8" fill="none" stroke-linejoin="round"/><path d="M12.5 3.1 V12.1 L3.1 15.9 M12.5 12.1 L21.9 15.9" stroke="#0a0a0a" stroke-width="1.5" fill="none"/></svg></div>
<div class="vbtn" style="left:256px;top:4px"><svg width="24" height="24" viewBox="0 0 24 24" style="position:absolute;left:0px;top:0px"><polygon points="12.5,3.1 21.9,6.6 21.9,15.9 12.5,12.1" fill="#35cc2a"/><path d="M12.5 3.1 L21.9 6.6 L21.9 15.9 L12.5 21.6 L3.1 15.9 L3.1 6.9z M3.1 6.9 L12.5 10.6 L21.9 6.6 M12.5 10.6 V21.6" stroke="#0a0a0a" stroke-width="1.8" fill="none" stroke-linejoin="round"/><path d="M12.5 3.1 V12.1 L3.1 15.9 M12.5 12.1 L21.9 15.9" stroke="#0a0a0a" stroke-width="1.5" fill="none"/></svg></div>
<div class="vbtn" style="left:284px;top:4px"><svg width="24" height="24" viewBox="0 0 24 24" style="position:absolute;left:0px;top:0px"><polygon points="12.500,3.100 21.900,6.600 12.500,10.600 3.100,6.900" fill="#7cf060"/><polygon points="3.100,6.900 12.500,10.600 12.500,21.600 3.100,15.900" fill="#39d430"/><polygon points="12.500,10.600 21.900,6.600 21.900,15.900 12.500,21.600" fill="#16a010"/><path d="M12.500 3.100 L21.900 6.600 L21.900 15.900 L12.500 21.600 L3.100 15.900 L3.100 6.900z" stroke="#0c7a0a" stroke-width=".8" fill="none"/></svg></div>
<div class="vbtn" style="left:4px;top:32px"><svg width="24" height="24" viewBox="0 0 24 24" style="position:absolute;left:0px;top:0px"><g transform="translate(2 2)"><path d="M4.5 4.1 v11.8 a5.5 2.6 0 0 0 11 0 v-11.8" fill="none" stroke="#222" stroke-width="1"/><ellipse cx="10" cy="4.1" rx="5.5" ry="2.6" fill="none" stroke="#222" stroke-width="1"/><path d="M4.5 15.9 a5.5 2.6 0 0 1 11 0" fill="none" stroke="#222" stroke-width=".8"/></g></svg></div>
<div class="vbtn" style="left:4px;top:60px"><svg width="24" height="24" viewBox="0 0 24 24" style="position:absolute;left:0px;top:0px"><g transform="translate(2 2)"><path d="M4.5 4.1 v11.8 a5.5 2.6 0 0 0 11 0 v-11.8" fill="none" stroke="#222" stroke-width="1"/><ellipse cx="10" cy="4.1" rx="5.5" ry="2.6" fill="none" stroke="#222" stroke-width="1"/></g></svg></div>
<div class="vbtn sel" style="left:4px;top:88px"><svg width="24" height="24" viewBox="0 0 24 24" style="position:absolute;left:-1px;top:-1px"><g transform="translate(2 2)"><ellipse cx="13.5" cy="17.5" rx="6.5" ry="2.2" fill="#555" opacity=".55"/><path d="M4.5 4.1 v11.8 a5.5 2.6 0 0 0 11 0 v-11.8" fill="url(#l1)" stroke="#1a2a55" stroke-width="0.9"/><ellipse cx="10" cy="4.1" rx="5.5" ry="2.6" fill="#7fa8e6" stroke="#1a2a55" stroke-width="0.9"/></g></svg></div>
<div class="vbtn" style="left:4px;top:116px"><svg width="24" height="24" viewBox="0 0 24 24" style="position:absolute;left:0px;top:0px"><g transform="translate(2 2)"><ellipse cx="13.5" cy="17.5" rx="6.5" ry="2.2" fill="#555" opacity=".55"/><path d="M4.5 4.1 v11.8 a5.5 2.6 0 0 0 11 0 v-11.8" fill="url(#l2)" stroke="#39445c" stroke-width="0.9"/><ellipse cx="10" cy="4.1" rx="5.5" ry="2.6" fill="#dfe8f6" stroke="#39445c" stroke-width="0.9"/></g></svg></div>
<div class="vbtn" style="left:4px;top:144px"><svg width="24" height="24" viewBox="0 0 24 24" style="position:absolute;left:0px;top:0px"><g transform="translate(2 2)"><path d="M4.5 4.1 v11.8 a5.5 2.6 0 0 0 11 0 v-11.8" fill="none" stroke="#222" stroke-width="1"/><ellipse cx="10" cy="4.1" rx="5.5" ry="2.6" fill="none" stroke="#222" stroke-width="1"/><path d="M6.5 4 l2 13 M9 4.4 l-1.6 13 M11 4.4 l2 13 M13.6 4 l-2.4 13.6" stroke="#333" stroke-width=".7" fill="none"/></g></svg></div>
</div>
<div id="status">
<div class="abs" style="left:1335px;top:3px;width:3px;height:15px;background-image:repeating-linear-gradient(to bottom,#aeb2c0 0,#aeb2c0 1px,transparent 1px,transparent 2px),repeating-linear-gradient(to right,#aeb2c0 0,#aeb2c0 1px,transparent 1px,transparent 2px);background-blend-mode:multiply"></div>
<div class="abs" style="left:1340px;top:2px;width:133px;height:17px;background:#fff"></div>
<svg class="abs" style="left:1460px;top:4px" width="13" height="13" viewBox="0 0 13 13"><circle cx="7.600" cy="5" r="3.600" fill="#eaf3fc" stroke="#3a74c0" stroke-width="1.400"/><path d="M5 7.800 L1.200 11.800" stroke="#3a74c0" stroke-width="1.800" stroke-linecap="round"/></svg>
<div class="abs" style="left:1476px;top:3px;width:3px;height:15px;background-image:repeating-linear-gradient(to bottom,#aeb2c0 0,#aeb2c0 1px,transparent 1px,transparent 2px),repeating-linear-gradient(to right,#aeb2c0 0,#aeb2c0 1px,transparent 1px,transparent 2px);background-blend-mode:multiply"></div>
<div class="abs st" style="left:1486px;top:5px">绝对 XY 上视图</div>
<div class="abs" style="left:1592px;top:3px;width:1px;height:15px;background:#9d9fa8"></div><div class="abs" style="left:1593px;top:3px;width:1px;height:15px;background:#f4f6fb"></div>
<div class="abs st" style="left:1601px;top:5px">绝对视图</div>
<div class="abs" style="left:1657px;top:3px;width:3px;height:15px;background-image:repeating-linear-gradient(to bottom,#aeb2c0 0,#aeb2c0 1px,transparent 1px,transparent 2px),repeating-linear-gradient(to right,#aeb2c0 0,#aeb2c0 1px,transparent 1px,transparent 2px);background-blend-mode:multiply"></div>
<div class="abs" style="left:1668px;top:5px;font-size:12.200px;line-height:14px;font-weight:700;letter-spacing:.1px;white-space:nowrap">LAYER0</div>
<div class="abs" style="left:1726px;top:3px;width:1px;height:15px;background:#9d9fa8"></div><div class="abs" style="left:1727px;top:3px;width:1px;height:15px;background:#f4f6fb"></div>
<div class="abs" style="left:1757px;top:3px;width:1px;height:15px;background:#9d9fa8"></div><div class="abs" style="left:1758px;top:3px;width:1px;height:15px;background:#f4f6fb"></div>
<div class="abs" style="left:1800px;top:3px;width:1px;height:15px;background:#9d9fa8"></div><div class="abs" style="left:1801px;top:3px;width:1px;height:15px;background:#f4f6fb"></div>
<div class="abs" style="left:1843px;top:3px;width:1px;height:15px;background:#9d9fa8"></div><div class="abs" style="left:1844px;top:3px;width:1px;height:15px;background:#f4f6fb"></div>
<div class="abs" style="left:1886px;top:3px;width:1px;height:15px;background:#9d9fa8"></div><div class="abs" style="left:1887px;top:3px;width:1px;height:15px;background:#f4f6fb"></div>
<div class="abs" style="left:1762px;top:5px;width:32px;height:12px;background:#46618b"></div>
<div class="abs" style="left:1805px;top:5px;width:32px;height:12px;background:#46618b"></div>
<div class="abs" style="left:1848px;top:5px;width:32px;height:12px;background:#46618b"></div>
<svg class="abs" style="left:1894px;top:2px" width="15" height="15" viewBox="0 0 15 15"><defs><radialGradient id="gl" cx=".35" cy=".3" r=".8"><stop offset="0" stop-color="#4a6cf0"/><stop offset="1" stop-color="#0a1466"/></radialGradient></defs><circle cx="7.500" cy="7.500" r="6.800" fill="url(#gl)"/><path d="M3 4 q2 -3 5 -2.400 q1 2 -1 3 q-1 2.400 -3 2 z M8 7.400 q3 -1.400 4.600 1 q-.6 3.600 -3 4.400 q-2 -2 -1.600 -5.400z M3.400 9.600 q1.600 .4 2 2.400 q-1.400 -.4 -2 -2.400z" fill="#2fbf2a"/><path d="M10.500 2.500 q2 1 2.600 3" stroke="#e8e020" stroke-width="1" fill="none"/></svg>
<div class="abs" style="left:2px;top:20px;width:1915px;height:1px;background:#a3a5ad"></div><div class="abs" style="left:2px;top:21px;width:1915px;height:1px;background:#eef1f8"></div>
<div class="abs" style="left:1132px;top:24px;width:1px;height:14px;background:#9d9fa8"></div><div class="abs" style="left:1133px;top:24px;width:1px;height:14px;background:#f4f6fb"></div>
<div class="abs" style="left:1175px;top:24px;width:1px;height:14px;background:#9d9fa8"></div><div class="abs" style="left:1176px;top:24px;width:1px;height:14px;background:#f4f6fb"></div>
<div class="abs" style="left:1206px;top:24px;width:1px;height:14px;background:#9d9fa8"></div><div class="abs" style="left:1207px;top:24px;width:1px;height:14px;background:#f4f6fb"></div>
<div class="abs" style="left:1237px;top:24px;width:1px;height:14px;background:#9d9fa8"></div><div class="abs" style="left:1238px;top:24px;width:1px;height:14px;background:#f4f6fb"></div>
<div class="abs" style="left:1268px;top:24px;width:1px;height:14px;background:#9d9fa8"></div><div class="abs" style="left:1269px;top:24px;width:1px;height:14px;background:#f4f6fb"></div>
<div class="abs" style="left:1299px;top:24px;width:1px;height:14px;background:#9d9fa8"></div><div class="abs" style="left:1300px;top:24px;width:1px;height:14px;background:#f4f6fb"></div>
<div class="abs" style="left:1330px;top:24px;width:1px;height:14px;background:#9d9fa8"></div><div class="abs" style="left:1331px;top:24px;width:1px;height:14px;background:#f4f6fb"></div>
<div class="abs" style="left:1361px;top:24px;width:1px;height:14px;background:#9d9fa8"></div><div class="abs" style="left:1362px;top:24px;width:1px;height:14px;background:#f4f6fb"></div>
<div class="abs" style="left:1423px;top:24px;width:1px;height:14px;background:#9d9fa8"></div><div class="abs" style="left:1424px;top:24px;width:1px;height:14px;background:#f4f6fb"></div>
<div class="abs" style="left:1454px;top:24px;width:1px;height:14px;background:#9d9fa8"></div><div class="abs" style="left:1455px;top:24px;width:1px;height:14px;background:#f4f6fb"></div>
<div class="abs" style="left:1580px;top:24px;width:1px;height:14px;background:#9d9fa8"></div><div class="abs" style="left:1581px;top:24px;width:1px;height:14px;background:#f4f6fb"></div>
<div class="abs" style="left:1654px;top:24px;width:1px;height:14px;background:#9d9fa8"></div><div class="abs" style="left:1655px;top:24px;width:1px;height:14px;background:#f4f6fb"></div>
<div class="abs st" style="left:1141px;top:25px">拴牢</div>
<svg class="abs" style="left:1182px;top:22px" width="18" height="18" viewBox="0 0 18 18"><rect x=".7" y=".7" width="16" height="16.600" fill="#c9cfe0" stroke="#555c70" stroke-width="1.400"/><path d="M4 8 a5 5 0 0 1 9 -2.400" fill="none" stroke="#e04060" stroke-width="2"/><path d="M14.600 3 l.4 4.400 l-4.400 -.6z" fill="#e04060"/><path d="M14 10 a5 5 0 0 1 -9 2.400" fill="none" stroke="#e8788c" stroke-width="2"/><path d="M3.400 15 l-.4 -4.400 l4.400 .6z" fill="#e8788c"/></svg>
<svg class="abs" style="left:1212px;top:22px" width="18" height="18" viewBox="0 0 18 18"><rect x="0" y="0" width="18" height="18" fill="#ffe07a" stroke="#f2c95c" stroke-width="1"/><path d="M6 1 l1.200 3.600 l3.400 -2 l-1.400 3.400 l3.800 .6 l-3.400 1.800 l2 3 l-3.800 -1 l-.4 3.600 l-2.200 -3 l-3 2.400 l1 -3.800 l-3.800 -.6 l3.400 -1.800 l-2 -3.200 l3.800 1z" fill="#e85ad0" stroke="#f0d020" stroke-width=".6"/><path d="M8 6 l8 6.400 l-3.400 .4 l2 3.600 l-1.800 1 l-2 -3.800 l-2.400 2.400z" fill="#e9e9ee" stroke="#555" stroke-width=".8"/></svg>
<svg class="abs" style="left:1244px;top:22px" width="18" height="18" viewBox="0 0 18 18"><path d="M2 8 l7 -6 l7 3.600 l-6 5z" fill="#f0c890" stroke="#a87838" stroke-width=".7"/><path d="M4 7.400 l10 4 M6 5.600 l8 4 M8.400 4 l6 3.400" stroke="#a87838" stroke-width=".6"/><path d="M3 9 v8 h8 v-7" fill="#dfe8f7" stroke="#3a5a9a" stroke-width="1"/><path d="M5 11 h4 M5 13 h4 M7 10.400 v5" stroke="#3a74c0" stroke-width="1"/></svg>
<svg class="abs" style="left:1276px;top:22px" width="18" height="18" viewBox="0 0 18 18"><ellipse cx="8.500" cy="16.400" rx="5" ry="1.300" fill="#9aa0b0" opacity=".8"/><text x="8.500" y="14.600" font-size="18" font-weight="700" text-anchor="middle" fill="#3f74c8" stroke="#1f4488" stroke-width=".5" font-family="Liberation Sans,sans-serif">?</text></svg>
<svg class="abs" style="left:1305px;top:22px" width="19" height="18" viewBox="0 0 19 18"><path d="M5 2.400 l4 -1.800 l4.400 1.400 l-4 2z" fill="#8ab4f0" stroke="#2a4a9a" stroke-width=".5"/><path d="M5 2.400 l4.400 1.600 v5 l-4.400 -1.600z" fill="#2a5ad0" stroke="#2a4a9a" stroke-width=".5"/><path d="M9.400 4 l4 -2 v5 l-4 2z" fill="#5a8ae6" stroke="#2a4a9a" stroke-width=".5"/><path d="M9.600 9 l4 -1.800 l4.400 1.400 l-4 2z" fill="#b9d6d6" stroke="#222" stroke-width=".6"/><path d="M9.600 9 l4.400 1.600 v6 l-4.400 -1.600z" fill="#5a8a8a" stroke="#222" stroke-width=".6"/><path d="M14 10.600 l4 -2 v6 l-4 2z" fill="#8ab4b4" stroke="#222" stroke-width=".6"/><path d="M.6 12 h7 M3 8.400 l4.600 3.600 l-4.600 3.600 M1.600 9 l5 3 M1.600 15 l5 -3" stroke="#e81010" stroke-width="1.300" fill="none"/></svg>
<svg class="abs" style="left:1336px;top:22px" width="18" height="18" viewBox="0 0 18 18"><rect x="0" y="0" width="18" height="18" fill="#ffe07a" stroke="#f2c95c" stroke-width="1"/><path d="M2.400 5.400 l6 -3 l8 2.400 l-6 3.400z" fill="#ee40ee" stroke="#8a108a" stroke-width=".6"/><path d="M2.400 5.400 l8 2.800 v8.400 l-8 -3z" fill="#3f7ad8" stroke="#1a3a7a" stroke-width=".6"/><path d="M10.400 8.200 l6 -3.400 v8.400 l-6 3.400z" fill="#9ab8a8" stroke="#1a3a7a" stroke-width=".6"/></svg>
<svg class="abs" style="left:1430px;top:22px" width="18" height="18" viewBox="0 0 18 18"><rect x="1" y="1" width="16" height="16" fill="#eef2fa" stroke="#4a5f86" stroke-width="1.400"/><path d="M9 1 v16 M1 9 h16" stroke="#4a5f86" stroke-width="1.400"/></svg>
<div class="abs st" style="left:1464px;top:25px;font-size:11.800px">LS: 1.00 PS: 1.00</div>
<div class="abs st" style="left:1589px;top:25px">单位: 毫米</div>
<div class="abs st" style="left:1663px;top:25px;font-size:12.600px;word-spacing:1px">X = 0459.075 <span style="color:#f01010">Y =-0165.376</span> Z = 0000.000</div>
</div>
<svg class="abs" style="left:1355px;top:960px" width="110" height="82" viewBox="1355 960 110 82" font-family="Liberation Sans,sans-serif">
<defs><radialGradient id="yf" cx=".45" cy=".4" r=".7"><stop offset="0" stop-color="#fff46a"/><stop offset="1" stop-color="#fde23a"/></radialGradient></defs>
<circle cx="1374.600" cy="1027.500" r="8.400" fill="#a86a4a" stroke="#fff" stroke-width="1.200"/><path d="M1369.800 1024.400 l2.800 -1.600 q2 1.400 4 0 l2.800 1.600 l-1.400 2.400 l-1.400 -.7 v5.400 h-4 v-5.400 l-1.400 .7z" fill="#fff"/>
<circle cx="1367.300" cy="1005.600" r="8" fill="#a8684a" stroke="#fff" stroke-width="1"/><text x="1367.300" y="1010" font-size="12" text-anchor="middle" fill="#fff">A</text>
<ellipse cx="1407" cy="1039.500" rx="17" ry="2.400" fill="#c98a5a" opacity=".7"/>
<path d="M1392 1018 q-6 8 -3 16 q2 5 8 4.600 h18 q7 -1 6 -8 q-1 -8 -6 -13z" fill="url(#yf)" stroke="#d8a020" stroke-width=".7"/>
<path d="M1418 1020 q8 -2 11 2 q1 3 -3 4 q-5 .6 -8 -2z" fill="#fde23a" stroke="#d8a020" stroke-width=".6"/>
<circle cx="1387.500" cy="977.500" r="8" fill="#b87a42"/><circle cx="1387.500" cy="978" r="4.200" fill="#f0c0a0"/><circle cx="1429.500" cy="977.500" r="8" fill="#b87a42"/><circle cx="1429.500" cy="978" r="4.200" fill="#f0c0a0"/>
<path d="M1404 972 q-3 -5 -1.400 -8 q2 -1 2.400 2 q1 3 1.400 6z M1410 972 q.6 -4 3 -5.600 q2 .4 .6 3 q-1.400 2 -1.600 3z" fill="#8a4a20"/>
<ellipse cx="1406.500" cy="996" rx="27" ry="26" fill="#b87a42"/>
<path d="M1383 1006 q-3 10 6 13 l36 0 q8 -4 5 -13z" fill="#b87a42"/>
<ellipse cx="1406.500" cy="1000" rx="21.400" ry="19.600" fill="url(#yf)"/>
<circle cx="1396.400" cy="994.600" r="1.600" fill="#6a3a1a"/><circle cx="1417" cy="994.600" r="1.600" fill="#6a3a1a"/><path d="M1405 999.400 q1.600 1 3.200 0" stroke="#6a3a1a" stroke-width="1" fill="none"/>
<ellipse cx="1391.600" cy="1000.600" rx="4" ry="2.800" fill="#f8a060" opacity=".85"/><ellipse cx="1421.600" cy="1000.600" rx="4" ry="2.800" fill="#f8a060" opacity=".85"/>
<path d="M1399 1019 L1421 1030" stroke="#8a5a2a" stroke-width="1.800"/>
<circle cx="1389" cy="1023" r="3" fill="#b87a42"/><circle cx="1401" cy="1023" r="3" fill="#b87a42"/><ellipse cx="1395" cy="1030" rx="8.600" ry="8" fill="#b87a42"/><ellipse cx="1395" cy="1032" rx="3.600" ry="2.600" fill="#e8c8a0"/><circle cx="1391.600" cy="1028" r="1" fill="#4a2a10"/><circle cx="1398.400" cy="1028" r="1" fill="#4a2a10"/><ellipse cx="1389.600" cy="1031" rx="1.600" ry="1" fill="#f08a8a"/><ellipse cx="1400.400" cy="1031" rx="1.600" ry="1" fill="#f08a8a"/>
<g transform="rotate(15 1446 981)"><text x="1446" y="990.500" font-size="25" font-weight="700" text-anchor="middle" fill="#b8865a" stroke="#b8865a" stroke-width="5.500" stroke-linejoin="round">W</text><text x="1446" y="990.500" font-size="25" font-weight="700" text-anchor="middle" fill="#fffaf0" stroke="#fffaf0" stroke-width="2.800" stroke-linejoin="round">W</text><circle cx="1439" cy="978" r="1.300" fill="#c99a6a"/><circle cx="1446" cy="984" r="1.300" fill="#c99a6a"/><circle cx="1453" cy="977" r="1.300" fill="#c99a6a"/><circle cx="1450.500" cy="987" r="1.100" fill="#c99a6a"/></g>
<circle cx="1437" cy="992.500" r="3.800" fill="#b87a42"/><circle cx="1453.500" cy="992.500" r="3.800" fill="#b87a42"/>
<ellipse cx="1445.200" cy="1001.800" rx="5" ry="6" fill="#f6efe6"/><text x="1445.200" y="1009.600" font-size="22" font-weight="700" text-anchor="middle" fill="#b87a42" stroke="#b87a42" stroke-width="3.400" stroke-linejoin="round">O</text>
<g transform="rotate(-7 1446 1024)"><text x="1446" y="1033.500" font-size="26" font-weight="700" text-anchor="middle" fill="#e2b21c" stroke="#e2b21c" stroke-width="5" stroke-linejoin="round">W</text><text x="1446" y="1033.500" font-size="26" font-weight="700" text-anchor="middle" fill="#fde640" stroke="#fde640" stroke-width="2.600" stroke-linejoin="round">W</text></g>
</svg>
<div id="taskbar"><div class="abs" style="left:48px;top:0;width:344px;height:8px;background:#f2f2f2"></div><div class="abs" style="left:687px;top:0;width:45px;height:8px;background:#3c3c3c"></div><div class="abs" style="left:732px;top:0;width:3px;height:8px;background:#555"></div><div class="abs" style="left:1915px;top:1px;width:1px;height:7px;background:#777"></div><div class="abs" style="left:1813px;top:4px;width:36px;height:4px;overflow:hidden;color:#fff;font-size:12px;line-height:12px"><span style="position:absolute;left:2px;top:0">18:35</span></div></div>
</body>
</html>
